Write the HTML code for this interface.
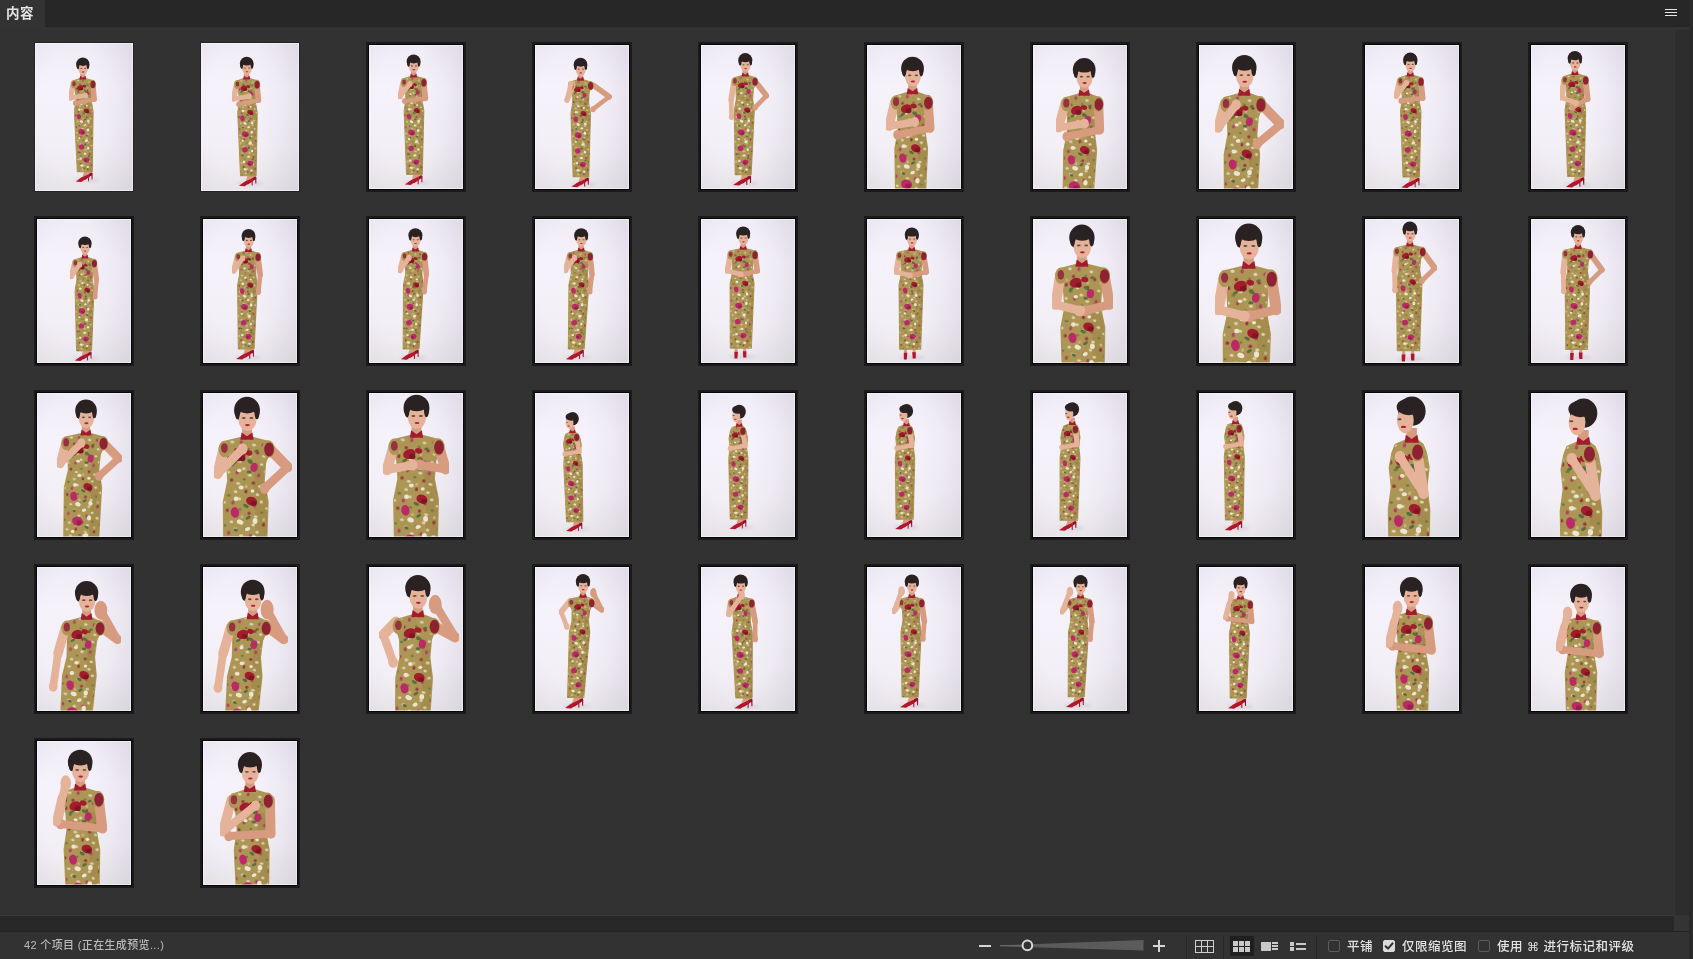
<!DOCTYPE html>
<html lang="zh-CN"><head><meta charset="utf-8"><title>内容</title>
<style>
html,body{margin:0;padding:0;}
body{width:1693px;height:959px;overflow:hidden;position:relative;background:#323232;
 font-family:"Liberation Sans","Noto Sans CJK SC",sans-serif;color:#dcdcdc;}
.abs{position:absolute;}
#hdr{left:0;top:0;width:1693px;height:26px;background:#272727;}
#hdrline{left:45px;top:26px;width:1644px;height:1px;background:#242424;}
#tab{left:0;top:0;width:45px;height:27px;background:#333333;}
#tabtxt{left:6px;top:5px;font-size:13.5px;line-height:18px;font-weight:700;color:#e4e4e4;white-space:nowrap;letter-spacing:0.4px;will-change:transform;}
.hb{left:1665px;width:12px;height:1px;background:#e6e6e6;}
#rstrip{left:1689px;top:0;width:4px;height:959px;background:#2a2a2a;}
#vtrack{left:1674px;top:30px;width:15px;height:885px;background:#2d2d2d;border-left:1px solid #373737;box-sizing:border-box;}
#hline{left:0;top:915px;width:1674px;height:1px;background:#3a3a3a;}
#htrack{left:0;top:916px;width:1674px;height:15px;background:#282828;}
#hline2{left:0;top:931px;width:1689px;height:1px;background:#232323;}
#corner{left:1674px;top:916px;width:15px;height:15px;background:#343434;}
#status{left:0;top:932px;width:1689px;height:27px;background:#323232;}
#count{left:24px;top:937px;font-size:11px;line-height:16px;font-weight:500;color:#bababa;white-space:nowrap;letter-spacing:0.35px;will-change:transform;}
.sep{top:936px;width:1px;height:23px;background:#262626;}
.lbl{top:937px;font-size:12.5px;line-height:20px;font-weight:500;color:#e2e2e2;white-space:nowrap;letter-spacing:0.5px;will-change:transform;}
.cb{top:940px;width:12px;height:12px;box-sizing:border-box;border:1px solid #5c5c5c;border-radius:2px;}
.cb.on{background:#dadada;border-color:#dadada;}
.t{position:absolute;width:100px;height:150px;}
.t svg{position:absolute;display:block;}
.t.b{background:#1a1a1a;}
.t.b svg{left:3px;top:3px;outline:1px solid #070507;}
.t.p{background:#242226;}
.t.p svg{left:1px;top:1px;}
</style></head>
<body>
<svg width="0" height="0" style="position:absolute"><defs><linearGradient id="bg" x1="0" y1="0" x2="0" y2="1"><stop offset="0" stop-color="#f0ecf7"/><stop offset="0.3" stop-color="#f6f2fb"/><stop offset="0.7" stop-color="#f3eff6"/><stop offset="1" stop-color="#ebe8ed"/></linearGradient><radialGradient id="vg" cx="0.42" cy="0.44" r="0.8"><stop offset="0.5" stop-color="#c4bdc8" stop-opacity="0"/><stop offset="1" stop-color="#b9b2be" stop-opacity="0.22"/></radialGradient><linearGradient id="hg" x1="0" y1="0" x2="1" y2="0"><stop offset="0.55" stop-color="#beb8c6" stop-opacity="0"/><stop offset="1" stop-color="#beb8c6" stop-opacity="0.2"/></linearGradient><pattern id="fl" patternUnits="userSpaceOnUse" width="9" height="12.5" patternTransform="rotate(8)"><ellipse cx="1.4" cy="1.6" rx="0.75" ry="0.55" fill="#e6dfc6"/><ellipse cx="5.6" cy="0.9" rx="0.6" ry="0.8" fill="#8d2436"/><ellipse cx="7.8" cy="3.4" rx="0.8" ry="0.5" fill="#5d7440"/><ellipse cx="3.4" cy="4.3" rx="0.7" ry="0.6" fill="#e6dfc6"/><ellipse cx="0.9" cy="6.2" rx="0.65" ry="0.85" fill="#b03468"/><ellipse cx="6.2" cy="6.6" rx="0.8" ry="0.6" fill="#e6dfc6"/><ellipse cx="4.2" cy="8.6" rx="0.6" ry="0.5" fill="#5d7440"/><ellipse cx="8.1" cy="9.6" rx="0.7" ry="0.7" fill="#93283a"/><ellipse cx="2.0" cy="10.6" rx="0.8" ry="0.55" fill="#e6dfc6"/><ellipse cx="5.4" cy="11.4" rx="0.55" ry="0.7" fill="#c9bd92"/></pattern><filter id="soft" x="-5%" y="-5%" width="110%" height="110%"><feGaussianBlur stdDeviation="0.45"/></filter><filter id="soft2" x="-20%" y="-50%" width="140%" height="200%"><feGaussianBlur stdDeviation="1.6"/></filter></defs></svg>
<div id="hdr" class="abs"></div>
<div id="hdrline" class="abs"></div>
<div id="tab" class="abs"></div>
<div id="tabtxt" class="abs">内容</div>
<div class="abs hb" style="top:9px"></div>
<div class="abs hb" style="top:12px"></div>
<div class="abs hb" style="top:15px"></div>
<div class="t p" style="left:34px;top:42px"><svg width="98" height="148" viewBox="0 0 98 148"><rect width="98" height="148" fill="url(#bg)"/><rect width="98" height="148" fill="url(#vg)"/><rect width="98" height="148" fill="url(#hg)"/><ellipse cx="52" cy="137.14" rx="12.55" ry="2.26" fill="#cbc6ce" opacity="0.5" filter="url(#soft2)"/><g filter="url(#soft)"><g transform="translate(50 14.4) scale(1.25)"><path d="M2.2,89.3 l3.2,0 l0.4,4.2 l-5.6,2.4z" fill="#d79c80"/><path d="M-4.6,97.7 l4.4,-3.1 l5.6,-2.5 l0.7,0.6 l-0.1,4.9 l-0.7,0 l-0.2,-3.1 l-5.2,3.6z" fill="#98102a"/><path d="M-0.6,90.8 l3.2,0 l0.4,4.2 l-5.6,2.4z" fill="#d79c80"/><path d="M-7.4,99.2 l4.4,-3.1 l5.6,-2.5 l0.7,0.6 l-0.1,4.9 l-0.7,0 l-0.2,-3.1 l-5.2,3.6z" fill="#b3142b"/><rect x="-3.75" y="12" width="4" height="7" fill="#d79c80"/><polygon points="-4.05,16.8 -8.63,18.4 -9.78,21.5 -7.78,27 -7.25,34.5 -8.5,43 -6.15,91.5 5.85,91.5 6.5,43 4.95,34.5 5.22,27 7.02,21.5 5.77,18.4 0.55,16.8" fill="#ad9654" stroke="#ad9654" stroke-width="0.8" stroke-linejoin="round"/><polygon points="1.65,27 1.6,34.5 2.38,43 2.55,91.5 5.85,91.5 6.5,43 4.95,34.5 5.22,27" fill="#927a3e" opacity="0.32"/><polygon points="-4.05,16.8 -8.63,18.4 -9.78,21.5 -7.78,27 -7.25,34.5 -8.5,43 -6.15,91.5 5.85,91.5 6.5,43 4.95,34.5 5.22,27 7.02,21.5 5.77,18.4 0.55,16.8" fill="url(#fl)" opacity="0.85"/><ellipse cx="-3.86" cy="24.3" rx="2.6" ry="2" fill="#a21a2e" transform="rotate(-20 -3.86 24.3)"/><ellipse cx="-2.77" cy="25.3" rx="1.3" ry="1.1" fill="#7e1424" transform="rotate(0 -2.77 25.3)"/><ellipse cx="-0.47" cy="23" rx="1.5" ry="1.1" fill="#a21a2e" transform="rotate(15 -0.47 23)"/><ellipse cx="0.17" cy="26.6" rx="1.3" ry="0.7" fill="#55703c" transform="rotate(30 0.17 26.6)"/><ellipse cx="-5.47" cy="26.9" rx="1.1" ry="0.6" fill="#55703c" transform="rotate(-30 -5.47 26.9)"/><ellipse cx="1.68" cy="28.9" rx="1.5" ry="1.9" fill="#bb2a66" transform="rotate(10 1.68 28.9)"/><ellipse cx="-0.04" cy="30.8" rx="1" ry="0.6" fill="#55703c" transform="rotate(0 -0.04 30.8)"/><ellipse cx="-3.76" cy="30.2" rx="0.9" ry="0.7" fill="#ebe4cf" transform="rotate(0 -3.76 30.2)"/><ellipse cx="2.34" cy="22.2" rx="0.9" ry="0.5" fill="#55703c" transform="rotate(-20 2.34 22.2)"/><ellipse cx="-2.85" cy="37.2" rx="1" ry="0.8" fill="#ebe4cf" transform="rotate(0 -2.85 37.2)"/><ellipse cx="1.36" cy="38.6" rx="0.8" ry="0.7" fill="#ebe4cf" transform="rotate(0 1.36 38.6)"/><ellipse cx="1.14" cy="42.8" rx="2.3" ry="1.8" fill="#a21a2e" transform="rotate(20 1.14 42.8)"/><ellipse cx="1.94" cy="43.7" rx="1.2" ry="1" fill="#7e1424" transform="rotate(0 1.94 43.7)"/><ellipse cx="-0.87" cy="44.7" rx="1.2" ry="0.7" fill="#55703c" transform="rotate(25 -0.87 44.7)"/><ellipse cx="-4.53" cy="41.8" rx="1" ry="0.9" fill="#ebe4cf" transform="rotate(0 -4.53 41.8)"/><ellipse cx="-4.82" cy="47.4" rx="1.7" ry="2.2" fill="#bb2a66" transform="rotate(-10 -4.82 47.4)"/><ellipse cx="-2.8" cy="51.3" rx="1.4" ry="1" fill="#ebe4cf" transform="rotate(20 -2.8 51.3)"/><ellipse cx="0.09" cy="49.6" rx="1.1" ry="0.6" fill="#55703c" transform="rotate(-30 0.09 49.6)"/><ellipse cx="2.65" cy="50.9" rx="1" ry="1.2" fill="#ebe4cf" transform="rotate(0 2.65 50.9)"/><ellipse cx="-0.02" cy="54.2" rx="1.1" ry="0.8" fill="#ebe4cf" transform="rotate(-15 -0.02 54.2)"/><ellipse cx="-4.3" cy="54.6" rx="0.9" ry="0.6" fill="#55703c" transform="rotate(20 -4.3 54.6)"/><ellipse cx="-2.66" cy="59.6" rx="2.6" ry="2.2" fill="#bb2a66" transform="rotate(15 -2.66 59.6)"/><ellipse cx="-1.86" cy="60.4" rx="1.3" ry="1.1" fill="#9a1f55" transform="rotate(0 -1.86 60.4)"/><ellipse cx="2.38" cy="58" rx="1" ry="1.3" fill="#ebe4cf" transform="rotate(0 2.38 58)"/><ellipse cx="1.49" cy="62.6" rx="1.1" ry="0.6" fill="#55703c" transform="rotate(30 1.49 62.6)"/><ellipse cx="-4.52" cy="64.6" rx="0.9" ry="0.8" fill="#ebe4cf" transform="rotate(0 -4.52 64.6)"/><ellipse cx="1.17" cy="66.6" rx="1.4" ry="1" fill="#ebe4cf" transform="rotate(-20 1.17 66.6)"/><ellipse cx="-2.84" cy="71.6" rx="2.2" ry="2" fill="#bb2a66" transform="rotate(-15 -2.84 71.6)"/><ellipse cx="0.25" cy="70" rx="1" ry="0.6" fill="#55703c" transform="rotate(-25 0.25 70)"/><ellipse cx="2.64" cy="72.6" rx="0.9" ry="1.1" fill="#ebe4cf" transform="rotate(0 2.64 72.6)"/><ellipse cx="-4.32" cy="76" rx="0.9" ry="0.5" fill="#55703c" transform="rotate(20 -4.32 76)"/><ellipse cx="0.18" cy="77" rx="1.1" ry="0.8" fill="#ebe4cf" transform="rotate(10 0.18 77)"/><ellipse cx="1.24" cy="82" rx="2.3" ry="2" fill="#bb2a66" transform="rotate(20 1.24 82)"/><ellipse cx="0.48" cy="82.7" rx="1.1" ry="1" fill="#9a1f55" transform="rotate(0 0.48 82.7)"/><ellipse cx="-3.45" cy="81" rx="1" ry="0.9" fill="#ebe4cf" transform="rotate(0 -3.45 81)"/><ellipse cx="3.14" cy="79" rx="0.9" ry="0.5" fill="#55703c" transform="rotate(-30 3.14 79)"/><ellipse cx="-2.57" cy="86.6" rx="1.2" ry="0.9" fill="#ebe4cf" transform="rotate(15 -2.57 86.6)"/><ellipse cx="2.32" cy="87.6" rx="1" ry="0.8" fill="#ebe4cf" transform="rotate(0 2.32 87.6)"/><ellipse cx="-0.59" cy="88.6" rx="0.9" ry="0.5" fill="#55703c" transform="rotate(0 -0.59 88.6)"/><path d="M-3.95,14.6 l2.2,1.6 l2.2,-1.6 l0.5,3 h-5.4z" fill="#a21a2e"/><path d="M6.22,21 L7.43,33.5" fill="none" stroke="#d79c80" stroke-linecap="round" stroke-width="4.3"/><path d="M-9.38,21 L-11.68,32.5" fill="none" stroke="#e5b29a" stroke-linecap="round" stroke-width="4.3"/><ellipse cx="6.02" cy="21.4" rx="2.6" ry="3.6" fill="#ad9654"/><ellipse cx="-8.78" cy="21.4" rx="2.4" ry="3.4" fill="#ad9654"/><ellipse cx="6.32" cy="21.6" rx="2.0" ry="2.9" fill="#8f2233"/><ellipse cx="-8.78" cy="21.0" rx="1.4" ry="2.0" fill="#963040"/><path d="M7.43,33.5 L-7.61,36.5" fill="none" stroke="#d79c80" stroke-linecap="round" stroke-width="3.5"/><ellipse cx="-7.61" cy="36.5" rx="2" ry="2.3" fill="#d79c80"/><path d="M-11.68,32.5 L0.28,30.5" fill="none" stroke="#e5b29a" stroke-linecap="round" stroke-width="3.5"/><ellipse cx="0.28" cy="30.5" rx="2" ry="2.3" fill="#e5b29a"/><ellipse cx="-1.75" cy="5.4" rx="5.3" ry="5.4" fill="#2b2224"/><ellipse cx="-1.55" cy="9.3" rx="3.7" ry="4.7" fill="#e5b29a"/><ellipse cx="-1.65" cy="3.8" rx="4.5" ry="3.0" fill="#2b2224"/><ellipse cx="-5.65" cy="6.6" rx="1.0" ry="2.6" fill="#2b2224"/><ellipse cx="2.35" cy="6.6" rx="1.0" ry="2.6" fill="#2b2224"/><ellipse cx="-1.55" cy="11.6" rx="1.0" ry="0.45" fill="#b3202e"/><ellipse cx="-3.05" cy="8.7" rx="0.8" ry="0.4" fill="#4a2e2a" opacity="0.8"/><ellipse cx="0.05" cy="8.7" rx="0.8" ry="0.4" fill="#4a2e2a" opacity="0.8"/></g></g><rect x="0.5" y="0.5" width="97" height="147" fill="none" stroke="#ffffff" stroke-opacity="0.45"/></svg></div>
<div class="t p" style="left:200px;top:42px"><svg width="98" height="148" viewBox="0 0 98 148"><rect width="98" height="148" fill="url(#bg)"/><rect width="98" height="148" fill="url(#vg)"/><rect width="98" height="148" fill="url(#hg)"/><ellipse cx="49.5" cy="140.64" rx="12.98" ry="2.34" fill="#cbc6ce" opacity="0.5" filter="url(#soft2)"/><g filter="url(#soft)"><g transform="translate(47.5 13.7) scale(1.3)"><path d="M2.2,89.3 l3.2,0 l0.4,4.2 l-5.6,2.4z" fill="#d79c80"/><path d="M-4.6,97.7 l4.4,-3.1 l5.6,-2.5 l0.7,0.6 l-0.1,4.9 l-0.7,0 l-0.2,-3.1 l-5.2,3.6z" fill="#98102a"/><path d="M-0.6,90.8 l3.2,0 l0.4,4.2 l-5.6,2.4z" fill="#d79c80"/><path d="M-7.4,99.2 l4.4,-3.1 l5.6,-2.5 l0.7,0.6 l-0.1,4.9 l-0.7,0 l-0.2,-3.1 l-5.2,3.6z" fill="#b3142b"/><rect x="-3.39" y="12" width="4" height="7" fill="#d79c80"/><polygon points="-3.69,16.8 -8.33,18.4 -9.49,21.5 -7.51,27 -7.01,34.5 -8.29,43 -6.12,91.5 5.88,91.5 6.71,43 5.19,34.5 5.49,27 7.31,21.5 6.07,18.4 0.91,16.8" fill="#ad9654" stroke="#ad9654" stroke-width="0.8" stroke-linejoin="round"/><polygon points="1.91,27 1.84,34.5 2.58,43 2.58,91.5 5.88,91.5 6.71,43 5.19,34.5 5.49,27" fill="#927a3e" opacity="0.32"/><polygon points="-3.69,16.8 -8.33,18.4 -9.49,21.5 -7.51,27 -7.01,34.5 -8.29,43 -6.12,91.5 5.88,91.5 6.71,43 5.19,34.5 5.49,27 7.31,21.5 6.07,18.4 0.91,16.8" fill="url(#fl)" opacity="0.85"/><ellipse cx="-3.58" cy="24.3" rx="2.6" ry="2" fill="#a21a2e" transform="rotate(-20 -3.58 24.3)"/><ellipse cx="-2.5" cy="25.3" rx="1.3" ry="1.1" fill="#7e1424" transform="rotate(0 -2.5 25.3)"/><ellipse cx="-0.19" cy="23" rx="1.5" ry="1.1" fill="#a21a2e" transform="rotate(15 -0.19 23)"/><ellipse cx="0.44" cy="26.6" rx="1.3" ry="0.7" fill="#55703c" transform="rotate(30 0.44 26.6)"/><ellipse cx="-5.2" cy="26.9" rx="1.1" ry="0.6" fill="#55703c" transform="rotate(-30 -5.2 26.9)"/><ellipse cx="1.94" cy="28.9" rx="1.5" ry="1.9" fill="#bb2a66" transform="rotate(10 1.94 28.9)"/><ellipse cx="0.21" cy="30.8" rx="1" ry="0.6" fill="#55703c" transform="rotate(0 0.21 30.8)"/><ellipse cx="-3.5" cy="30.2" rx="0.9" ry="0.7" fill="#ebe4cf" transform="rotate(0 -3.5 30.2)"/><ellipse cx="2.62" cy="22.2" rx="0.9" ry="0.5" fill="#55703c" transform="rotate(-20 2.62 22.2)"/><ellipse cx="-2.62" cy="37.2" rx="1" ry="0.8" fill="#ebe4cf" transform="rotate(0 -2.62 37.2)"/><ellipse cx="1.58" cy="38.6" rx="0.8" ry="0.7" fill="#ebe4cf" transform="rotate(0 1.58 38.6)"/><ellipse cx="1.35" cy="42.8" rx="2.3" ry="1.8" fill="#a21a2e" transform="rotate(20 1.35 42.8)"/><ellipse cx="2.14" cy="43.7" rx="1.2" ry="1" fill="#7e1424" transform="rotate(0 2.14 43.7)"/><ellipse cx="-0.67" cy="44.7" rx="1.2" ry="0.7" fill="#55703c" transform="rotate(25 -0.67 44.7)"/><ellipse cx="-4.31" cy="41.8" rx="1" ry="0.9" fill="#ebe4cf" transform="rotate(0 -4.31 41.8)"/><ellipse cx="-4.63" cy="47.4" rx="1.7" ry="2.2" fill="#bb2a66" transform="rotate(-10 -4.63 47.4)"/><ellipse cx="-2.62" cy="51.3" rx="1.4" ry="1" fill="#ebe4cf" transform="rotate(20 -2.62 51.3)"/><ellipse cx="0.28" cy="49.6" rx="1.1" ry="0.6" fill="#55703c" transform="rotate(-30 0.28 49.6)"/><ellipse cx="2.83" cy="50.9" rx="1" ry="1.2" fill="#ebe4cf" transform="rotate(0 2.83 50.9)"/><ellipse cx="0.14" cy="54.2" rx="1.1" ry="0.8" fill="#ebe4cf" transform="rotate(-15 0.14 54.2)"/><ellipse cx="-4.14" cy="54.6" rx="0.9" ry="0.6" fill="#55703c" transform="rotate(20 -4.14 54.6)"/><ellipse cx="-2.51" cy="59.6" rx="2.6" ry="2.2" fill="#bb2a66" transform="rotate(15 -2.51 59.6)"/><ellipse cx="-1.72" cy="60.4" rx="1.3" ry="1.1" fill="#9a1f55" transform="rotate(0 -1.72 60.4)"/><ellipse cx="2.53" cy="58" rx="1" ry="1.3" fill="#ebe4cf" transform="rotate(0 2.53 58)"/><ellipse cx="1.62" cy="62.6" rx="1.1" ry="0.6" fill="#55703c" transform="rotate(30 1.62 62.6)"/><ellipse cx="-4.39" cy="64.6" rx="0.9" ry="0.8" fill="#ebe4cf" transform="rotate(0 -4.39 64.6)"/><ellipse cx="1.29" cy="66.6" rx="1.4" ry="1" fill="#ebe4cf" transform="rotate(-20 1.29 66.6)"/><ellipse cx="-2.73" cy="71.6" rx="2.2" ry="2" fill="#bb2a66" transform="rotate(-15 -2.73 71.6)"/><ellipse cx="0.36" cy="70" rx="1" ry="0.6" fill="#55703c" transform="rotate(-25 0.36 70)"/><ellipse cx="2.74" cy="72.6" rx="0.9" ry="1.1" fill="#ebe4cf" transform="rotate(0 2.74 72.6)"/><ellipse cx="-4.23" cy="76" rx="0.9" ry="0.5" fill="#55703c" transform="rotate(20 -4.23 76)"/><ellipse cx="0.27" cy="77" rx="1.1" ry="0.8" fill="#ebe4cf" transform="rotate(10 0.27 77)"/><ellipse cx="1.31" cy="82" rx="2.3" ry="2" fill="#bb2a66" transform="rotate(20 1.31 82)"/><ellipse cx="0.54" cy="82.7" rx="1.1" ry="1" fill="#9a1f55" transform="rotate(0 0.54 82.7)"/><ellipse cx="-3.38" cy="81" rx="1" ry="0.9" fill="#ebe4cf" transform="rotate(0 -3.38 81)"/><ellipse cx="3.22" cy="79" rx="0.9" ry="0.5" fill="#55703c" transform="rotate(-30 3.22 79)"/><ellipse cx="-2.52" cy="86.6" rx="1.2" ry="0.9" fill="#ebe4cf" transform="rotate(15 -2.52 86.6)"/><ellipse cx="2.36" cy="87.6" rx="1" ry="0.8" fill="#ebe4cf" transform="rotate(0 2.36 87.6)"/><ellipse cx="-0.55" cy="88.6" rx="0.9" ry="0.5" fill="#55703c" transform="rotate(0 -0.55 88.6)"/><path d="M-3.59,14.6 l2.2,1.6 l2.2,-1.6 l0.5,3 h-5.4z" fill="#a21a2e"/><path d="M6.5,21 L7.68,33.5" fill="none" stroke="#d79c80" stroke-linecap="round" stroke-width="4.3"/><path d="M-9.1,21 L-11.44,32.5" fill="none" stroke="#e5b29a" stroke-linecap="round" stroke-width="4.3"/><ellipse cx="6.3" cy="21.4" rx="2.6" ry="3.6" fill="#ad9654"/><ellipse cx="-8.5" cy="21.4" rx="2.4" ry="3.4" fill="#ad9654"/><ellipse cx="6.6" cy="21.6" rx="2.0" ry="2.9" fill="#8f2233"/><ellipse cx="-8.5" cy="21.0" rx="1.4" ry="2.0" fill="#963040"/><path d="M7.68,33.5 L-7.38,36.5" fill="none" stroke="#d79c80" stroke-linecap="round" stroke-width="3.5"/><ellipse cx="-7.38" cy="36.5" rx="2" ry="2.3" fill="#d79c80"/><path d="M-11.44,32.5 L0.54,30.5" fill="none" stroke="#e5b29a" stroke-linecap="round" stroke-width="3.5"/><ellipse cx="0.54" cy="30.5" rx="2" ry="2.3" fill="#e5b29a"/><ellipse cx="-1.39" cy="5.4" rx="5.3" ry="5.4" fill="#2b2224"/><ellipse cx="-1.19" cy="9.3" rx="3.7" ry="4.7" fill="#e5b29a"/><ellipse cx="-1.29" cy="3.8" rx="4.5" ry="3.0" fill="#2b2224"/><ellipse cx="-5.29" cy="6.6" rx="1.0" ry="2.6" fill="#2b2224"/><ellipse cx="2.71" cy="6.6" rx="1.0" ry="2.6" fill="#2b2224"/><ellipse cx="-1.19" cy="11.6" rx="1.0" ry="0.45" fill="#b3202e"/><ellipse cx="-2.69" cy="8.7" rx="0.8" ry="0.4" fill="#4a2e2a" opacity="0.8"/><ellipse cx="0.41" cy="8.7" rx="0.8" ry="0.4" fill="#4a2e2a" opacity="0.8"/></g></g><rect x="0.5" y="0.5" width="97" height="147" fill="none" stroke="#ffffff" stroke-opacity="0.45"/></svg></div>
<div class="t b" style="left:366px;top:42px"><svg width="94" height="144" viewBox="0 0 94 144"><rect width="94" height="144" fill="url(#bg)"/><rect width="94" height="144" fill="url(#vg)"/><rect width="94" height="144" fill="url(#hg)"/><ellipse cx="47.5" cy="137.62" rx="13.1" ry="2.36" fill="#cbc6ce" opacity="0.5" filter="url(#soft2)"/><g filter="url(#soft)"><g transform="translate(45.5 9.5) scale(1.31)"><path d="M2.2,89.3 l3.2,0 l0.4,4.2 l-5.6,2.4z" fill="#d79c80"/><path d="M-4.6,97.7 l4.4,-3.1 l5.6,-2.5 l0.7,0.6 l-0.1,4.9 l-0.7,0 l-0.2,-3.1 l-5.2,3.6z" fill="#98102a"/><path d="M-0.6,90.8 l3.2,0 l0.4,4.2 l-5.6,2.4z" fill="#d79c80"/><path d="M-7.4,99.2 l4.4,-3.1 l5.6,-2.5 l0.7,0.6 l-0.1,4.9 l-0.7,0 l-0.2,-3.1 l-5.2,3.6z" fill="#b3142b"/><rect x="-2.69" y="12" width="4" height="7" fill="#d79c80"/><polygon points="-2.99,16.8 -7.76,18.4 -8.94,21.5 -7,27 -6.55,34.5 -7.89,43 -6.06,91.5 5.94,91.5 7.11,43 5.65,34.5 6,27 7.86,21.5 6.64,18.4 1.61,16.8" fill="#ad9654" stroke="#ad9654" stroke-width="0.8" stroke-linejoin="round"/><polygon points="2.42,27 2.3,34.5 2.98,43 2.64,91.5 5.94,91.5 7.11,43 5.65,34.5 6,27" fill="#927a3e" opacity="0.32"/><polygon points="-2.99,16.8 -7.76,18.4 -8.94,21.5 -7,27 -6.55,34.5 -7.89,43 -6.06,91.5 5.94,91.5 7.11,43 5.65,34.5 6,27 7.86,21.5 6.64,18.4 1.61,16.8" fill="url(#fl)" opacity="0.85"/><ellipse cx="-3.05" cy="24.3" rx="2.6" ry="2" fill="#a21a2e" transform="rotate(-20 -3.05 24.3)"/><ellipse cx="-1.97" cy="25.3" rx="1.3" ry="1.1" fill="#7e1424" transform="rotate(0 -1.97 25.3)"/><ellipse cx="0.35" cy="23" rx="1.5" ry="1.1" fill="#a21a2e" transform="rotate(15 0.35 23)"/><ellipse cx="0.96" cy="26.6" rx="1.3" ry="0.7" fill="#55703c" transform="rotate(30 0.96 26.6)"/><ellipse cx="-4.69" cy="26.9" rx="1.1" ry="0.6" fill="#55703c" transform="rotate(-30 -4.69 26.9)"/><ellipse cx="2.43" cy="28.9" rx="1.5" ry="1.9" fill="#bb2a66" transform="rotate(10 2.43 28.9)"/><ellipse cx="0.69" cy="30.8" rx="1" ry="0.6" fill="#55703c" transform="rotate(0 0.69 30.8)"/><ellipse cx="-3.01" cy="30.2" rx="0.9" ry="0.7" fill="#ebe4cf" transform="rotate(0 -3.01 30.2)"/><ellipse cx="3.17" cy="22.2" rx="0.9" ry="0.5" fill="#55703c" transform="rotate(-20 3.17 22.2)"/><ellipse cx="-2.18" cy="37.2" rx="1" ry="0.8" fill="#ebe4cf" transform="rotate(0 -2.18 37.2)"/><ellipse cx="2.01" cy="38.6" rx="0.8" ry="0.7" fill="#ebe4cf" transform="rotate(0 2.01 38.6)"/><ellipse cx="1.75" cy="42.8" rx="2.3" ry="1.8" fill="#a21a2e" transform="rotate(20 1.75 42.8)"/><ellipse cx="2.54" cy="43.7" rx="1.2" ry="1" fill="#7e1424" transform="rotate(0 2.54 43.7)"/><ellipse cx="-0.28" cy="44.7" rx="1.2" ry="0.7" fill="#55703c" transform="rotate(25 -0.28 44.7)"/><ellipse cx="-3.91" cy="41.8" rx="1" ry="0.9" fill="#ebe4cf" transform="rotate(0 -3.91 41.8)"/><ellipse cx="-4.26" cy="47.4" rx="1.7" ry="2.2" fill="#bb2a66" transform="rotate(-10 -4.26 47.4)"/><ellipse cx="-2.28" cy="51.3" rx="1.4" ry="1" fill="#ebe4cf" transform="rotate(20 -2.28 51.3)"/><ellipse cx="0.63" cy="49.6" rx="1.1" ry="0.6" fill="#55703c" transform="rotate(-30 0.63 49.6)"/><ellipse cx="3.17" cy="50.9" rx="1" ry="1.2" fill="#ebe4cf" transform="rotate(0 3.17 50.9)"/><ellipse cx="0.46" cy="54.2" rx="1.1" ry="0.8" fill="#ebe4cf" transform="rotate(-15 0.46 54.2)"/><ellipse cx="-3.82" cy="54.6" rx="0.9" ry="0.6" fill="#55703c" transform="rotate(20 -3.82 54.6)"/><ellipse cx="-2.23" cy="59.6" rx="2.6" ry="2.2" fill="#bb2a66" transform="rotate(15 -2.23 59.6)"/><ellipse cx="-1.44" cy="60.4" rx="1.3" ry="1.1" fill="#9a1f55" transform="rotate(0 -1.44 60.4)"/><ellipse cx="2.83" cy="58" rx="1" ry="1.3" fill="#ebe4cf" transform="rotate(0 2.83 58)"/><ellipse cx="1.89" cy="62.6" rx="1.1" ry="0.6" fill="#55703c" transform="rotate(30 1.89 62.6)"/><ellipse cx="-4.14" cy="64.6" rx="0.9" ry="0.8" fill="#ebe4cf" transform="rotate(0 -4.14 64.6)"/><ellipse cx="1.52" cy="66.6" rx="1.4" ry="1" fill="#ebe4cf" transform="rotate(-20 1.52 66.6)"/><ellipse cx="-2.53" cy="71.6" rx="2.2" ry="2" fill="#bb2a66" transform="rotate(-15 -2.53 71.6)"/><ellipse cx="0.57" cy="70" rx="1" ry="0.6" fill="#55703c" transform="rotate(-25 0.57 70)"/><ellipse cx="2.93" cy="72.6" rx="0.9" ry="1.1" fill="#ebe4cf" transform="rotate(0 2.93 72.6)"/><ellipse cx="-4.06" cy="76" rx="0.9" ry="0.5" fill="#55703c" transform="rotate(20 -4.06 76)"/><ellipse cx="0.43" cy="77" rx="1.1" ry="0.8" fill="#ebe4cf" transform="rotate(10 0.43 77)"/><ellipse cx="1.43" cy="82" rx="2.3" ry="2" fill="#bb2a66" transform="rotate(20 1.43 82)"/><ellipse cx="0.66" cy="82.7" rx="1.1" ry="1" fill="#9a1f55" transform="rotate(0 0.66 82.7)"/><ellipse cx="-3.25" cy="81" rx="1" ry="0.9" fill="#ebe4cf" transform="rotate(0 -3.25 81)"/><ellipse cx="3.36" cy="79" rx="0.9" ry="0.5" fill="#55703c" transform="rotate(-30 3.36 79)"/><ellipse cx="-2.43" cy="86.6" rx="1.2" ry="0.9" fill="#ebe4cf" transform="rotate(15 -2.43 86.6)"/><ellipse cx="2.45" cy="87.6" rx="1" ry="0.8" fill="#ebe4cf" transform="rotate(0 2.45 87.6)"/><ellipse cx="-0.47" cy="88.6" rx="0.9" ry="0.5" fill="#55703c" transform="rotate(0 -0.47 88.6)"/><path d="M-2.89,14.6 l2.2,1.6 l2.2,-1.6 l0.5,3 h-5.4z" fill="#a21a2e"/><path d="M7.06,21 L8.34,33.5" fill="none" stroke="#d79c80" stroke-linecap="round" stroke-width="4.3"/><path d="M-8.54,21 L-10.97,32" fill="none" stroke="#e5b29a" stroke-linecap="round" stroke-width="4.3"/><ellipse cx="6.86" cy="21.4" rx="2.6" ry="3.6" fill="#ad9654"/><ellipse cx="-7.94" cy="21.4" rx="2.4" ry="3.4" fill="#ad9654"/><ellipse cx="7.16" cy="21.6" rx="2.0" ry="2.9" fill="#8f2233"/><ellipse cx="-7.94" cy="21.0" rx="1.4" ry="2.0" fill="#963040"/><path d="M8.34,33.5 L-7.44,35.5" fill="none" stroke="#d79c80" stroke-linecap="round" stroke-width="3.5"/><ellipse cx="-7.44" cy="35.5" rx="2" ry="2.3" fill="#d79c80"/><path d="M-10.97,32 L-3.53,22.5" fill="none" stroke="#e5b29a" stroke-linecap="round" stroke-width="3.5"/><ellipse cx="-3.53" cy="22.5" rx="2" ry="2.3" fill="#e5b29a"/><ellipse cx="-0.69" cy="5.4" rx="5.3" ry="5.4" fill="#2b2224"/><ellipse cx="-0.49" cy="9.3" rx="3.7" ry="4.7" fill="#e5b29a"/><ellipse cx="-0.59" cy="3.8" rx="4.5" ry="3.0" fill="#2b2224"/><ellipse cx="-4.59" cy="6.6" rx="1.0" ry="2.6" fill="#2b2224"/><ellipse cx="3.41" cy="6.6" rx="1.0" ry="2.6" fill="#2b2224"/><ellipse cx="-0.49" cy="11.6" rx="1.0" ry="0.45" fill="#b3202e"/><ellipse cx="-1.99" cy="8.7" rx="0.8" ry="0.4" fill="#4a2e2a" opacity="0.8"/><ellipse cx="1.11" cy="8.7" rx="0.8" ry="0.4" fill="#4a2e2a" opacity="0.8"/></g></g><rect x="0.5" y="0.5" width="93" height="143" fill="none" stroke="#ffffff" stroke-opacity="0.45"/></svg></div>
<div class="t b" style="left:532px;top:42px"><svg width="94" height="144" viewBox="0 0 94 144"><rect width="94" height="144" fill="url(#bg)"/><rect width="94" height="144" fill="url(#vg)"/><rect width="94" height="144" fill="url(#hg)"/><ellipse cx="48" cy="139.65" rx="12.97" ry="2.33" fill="#cbc6ce" opacity="0.5" filter="url(#soft2)"/><g filter="url(#soft)"><g transform="translate(46 12.8) scale(1.3)"><path d="M2.2,89.3 l3.2,0 l0.4,4.2 l-5.6,2.4z" fill="#d79c80"/><path d="M-4.6,97.7 l4.4,-3.1 l5.6,-2.5 l0.7,0.6 l-0.1,4.9 l-0.7,0 l-0.2,-3.1 l-5.2,3.6z" fill="#98102a"/><path d="M-0.6,90.8 l3.2,0 l0.4,4.2 l-5.6,2.4z" fill="#d79c80"/><path d="M-7.4,99.2 l4.4,-3.1 l5.6,-2.5 l0.7,0.6 l-0.1,4.9 l-0.7,0 l-0.2,-3.1 l-5.2,3.6z" fill="#b3142b"/><rect x="-2.39" y="12" width="4" height="7" fill="#d79c80"/><polygon points="-2.69,16.8 -7.51,18.4 -8.7,21.5 -6.78,27 -6.35,34.5 -7.72,43 -6.03,91.5 5.97,91.5 7.28,43 5.85,34.5 6.22,27 8.1,21.5 6.89,18.4 1.91,16.8" fill="#ad9654" stroke="#ad9654" stroke-width="0.8" stroke-linejoin="round"/><polygon points="2.64,27 2.49,34.5 3.16,43 2.67,91.5 5.97,91.5 7.28,43 5.85,34.5 6.22,27" fill="#927a3e" opacity="0.32"/><polygon points="-2.69,16.8 -7.51,18.4 -8.7,21.5 -6.78,27 -6.35,34.5 -7.72,43 -6.03,91.5 5.97,91.5 7.28,43 5.85,34.5 6.22,27 8.1,21.5 6.89,18.4 1.91,16.8" fill="url(#fl)" opacity="0.85"/><ellipse cx="-2.82" cy="24.3" rx="2.6" ry="2" fill="#a21a2e" transform="rotate(-20 -2.82 24.3)"/><ellipse cx="-1.75" cy="25.3" rx="1.3" ry="1.1" fill="#7e1424" transform="rotate(0 -1.75 25.3)"/><ellipse cx="0.58" cy="23" rx="1.5" ry="1.1" fill="#a21a2e" transform="rotate(15 0.58 23)"/><ellipse cx="1.18" cy="26.6" rx="1.3" ry="0.7" fill="#55703c" transform="rotate(30 1.18 26.6)"/><ellipse cx="-4.47" cy="26.9" rx="1.1" ry="0.6" fill="#55703c" transform="rotate(-30 -4.47 26.9)"/><ellipse cx="2.65" cy="28.9" rx="1.5" ry="1.9" fill="#bb2a66" transform="rotate(10 2.65 28.9)"/><ellipse cx="0.9" cy="30.8" rx="1" ry="0.6" fill="#55703c" transform="rotate(0 0.9 30.8)"/><ellipse cx="-2.8" cy="30.2" rx="0.9" ry="0.7" fill="#ebe4cf" transform="rotate(0 -2.8 30.2)"/><ellipse cx="3.4" cy="22.2" rx="0.9" ry="0.5" fill="#55703c" transform="rotate(-20 3.4 22.2)"/><ellipse cx="-2" cy="37.2" rx="1" ry="0.8" fill="#ebe4cf" transform="rotate(0 -2 37.2)"/><ellipse cx="2.2" cy="38.6" rx="0.8" ry="0.7" fill="#ebe4cf" transform="rotate(0 2.2 38.6)"/><ellipse cx="1.92" cy="42.8" rx="2.3" ry="1.8" fill="#a21a2e" transform="rotate(20 1.92 42.8)"/><ellipse cx="2.71" cy="43.7" rx="1.2" ry="1" fill="#7e1424" transform="rotate(0 2.71 43.7)"/><ellipse cx="-0.12" cy="44.7" rx="1.2" ry="0.7" fill="#55703c" transform="rotate(25 -0.12 44.7)"/><ellipse cx="-3.73" cy="41.8" rx="1" ry="0.9" fill="#ebe4cf" transform="rotate(0 -3.73 41.8)"/><ellipse cx="-4.1" cy="47.4" rx="1.7" ry="2.2" fill="#bb2a66" transform="rotate(-10 -4.1 47.4)"/><ellipse cx="-2.14" cy="51.3" rx="1.4" ry="1" fill="#ebe4cf" transform="rotate(20 -2.14 51.3)"/><ellipse cx="0.78" cy="49.6" rx="1.1" ry="0.6" fill="#55703c" transform="rotate(-30 0.78 49.6)"/><ellipse cx="3.32" cy="50.9" rx="1" ry="1.2" fill="#ebe4cf" transform="rotate(0 3.32 50.9)"/><ellipse cx="0.6" cy="54.2" rx="1.1" ry="0.8" fill="#ebe4cf" transform="rotate(-15 0.6 54.2)"/><ellipse cx="-3.68" cy="54.6" rx="0.9" ry="0.6" fill="#55703c" transform="rotate(20 -3.68 54.6)"/><ellipse cx="-2.1" cy="59.6" rx="2.6" ry="2.2" fill="#bb2a66" transform="rotate(15 -2.1 59.6)"/><ellipse cx="-1.32" cy="60.4" rx="1.3" ry="1.1" fill="#9a1f55" transform="rotate(0 -1.32 60.4)"/><ellipse cx="2.95" cy="58" rx="1" ry="1.3" fill="#ebe4cf" transform="rotate(0 2.95 58)"/><ellipse cx="2" cy="62.6" rx="1.1" ry="0.6" fill="#55703c" transform="rotate(30 2 62.6)"/><ellipse cx="-4.03" cy="64.6" rx="0.9" ry="0.8" fill="#ebe4cf" transform="rotate(0 -4.03 64.6)"/><ellipse cx="1.62" cy="66.6" rx="1.4" ry="1" fill="#ebe4cf" transform="rotate(-20 1.62 66.6)"/><ellipse cx="-2.45" cy="71.6" rx="2.2" ry="2" fill="#bb2a66" transform="rotate(-15 -2.45 71.6)"/><ellipse cx="0.66" cy="70" rx="1" ry="0.6" fill="#55703c" transform="rotate(-25 0.66 70)"/><ellipse cx="3.01" cy="72.6" rx="0.9" ry="1.1" fill="#ebe4cf" transform="rotate(0 3.01 72.6)"/><ellipse cx="-3.99" cy="76" rx="0.9" ry="0.5" fill="#55703c" transform="rotate(20 -3.99 76)"/><ellipse cx="0.5" cy="77" rx="1.1" ry="0.8" fill="#ebe4cf" transform="rotate(10 0.5 77)"/><ellipse cx="1.49" cy="82" rx="2.3" ry="2" fill="#bb2a66" transform="rotate(20 1.49 82)"/><ellipse cx="0.71" cy="82.7" rx="1.1" ry="1" fill="#9a1f55" transform="rotate(0 0.71 82.7)"/><ellipse cx="-3.19" cy="81" rx="1" ry="0.9" fill="#ebe4cf" transform="rotate(0 -3.19 81)"/><ellipse cx="3.43" cy="79" rx="0.9" ry="0.5" fill="#55703c" transform="rotate(-30 3.43 79)"/><ellipse cx="-2.39" cy="86.6" rx="1.2" ry="0.9" fill="#ebe4cf" transform="rotate(15 -2.39 86.6)"/><ellipse cx="2.48" cy="87.6" rx="1" ry="0.8" fill="#ebe4cf" transform="rotate(0 2.48 87.6)"/><ellipse cx="-0.43" cy="88.6" rx="0.9" ry="0.5" fill="#55703c" transform="rotate(0 -0.43 88.6)"/><path d="M-2.59,14.6 l2.2,1.6 l2.2,-1.6 l0.5,3 h-5.4z" fill="#a21a2e"/><path d="M9.2,21 L21.73,30" fill="none" stroke="#d79c80" stroke-linecap="round" stroke-width="4.3"/><path d="M-6.3,21 L-10.76,32.5" fill="none" stroke="#e5b29a" stroke-linecap="round" stroke-width="4.3"/><ellipse cx="7.1" cy="21.4" rx="2.6" ry="3.6" fill="#ad9654"/><ellipse cx="-7.7" cy="21.4" rx="2.4" ry="3.4" fill="#ad9654"/><ellipse cx="7.4" cy="21.6" rx="2.0" ry="2.9" fill="#8f2233"/><ellipse cx="-7.7" cy="21.0" rx="1.4" ry="2.0" fill="#963040"/><path d="M21.73,30 L9.27,39.5" fill="none" stroke="#d79c80" stroke-linecap="round" stroke-width="3.5"/><ellipse cx="9.27" cy="39.5" rx="2" ry="2.3" fill="#d79c80"/><path d="M-10.76,32.5 L-7.81,20" fill="none" stroke="#e5b29a" stroke-linecap="round" stroke-width="3.5"/><ellipse cx="-7.81" cy="20" rx="2" ry="2.3" fill="#e5b29a"/><ellipse cx="-0.39" cy="5.4" rx="5.3" ry="5.4" fill="#2b2224"/><ellipse cx="-0.19" cy="9.3" rx="3.7" ry="4.7" fill="#e5b29a"/><ellipse cx="-0.29" cy="3.8" rx="4.5" ry="3.0" fill="#2b2224"/><ellipse cx="-4.29" cy="6.6" rx="1.0" ry="2.6" fill="#2b2224"/><ellipse cx="3.71" cy="6.6" rx="1.0" ry="2.6" fill="#2b2224"/><ellipse cx="-0.19" cy="11.6" rx="1.0" ry="0.45" fill="#b3202e"/><ellipse cx="-1.69" cy="8.7" rx="0.8" ry="0.4" fill="#4a2e2a" opacity="0.8"/><ellipse cx="1.41" cy="8.7" rx="0.8" ry="0.4" fill="#4a2e2a" opacity="0.8"/></g></g><rect x="0.5" y="0.5" width="93" height="143" fill="none" stroke="#ffffff" stroke-opacity="0.45"/></svg></div>
<div class="t b" style="left:698px;top:42px"><svg width="94" height="144" viewBox="0 0 94 144"><rect width="94" height="144" fill="url(#bg)"/><rect width="94" height="144" fill="url(#vg)"/><rect width="94" height="144" fill="url(#hg)"/><ellipse cx="44" cy="138.57" rx="13.34" ry="2.4" fill="#cbc6ce" opacity="0.5" filter="url(#soft2)"/><g filter="url(#soft)"><g transform="translate(42 8.1) scale(1.33)"><path d="M2.2,89.3 l3.2,0 l0.4,4.2 l-5.6,2.4z" fill="#d79c80"/><path d="M-4.6,97.7 l4.4,-3.1 l5.6,-2.5 l0.7,0.6 l-0.1,4.9 l-0.7,0 l-0.2,-3.1 l-5.2,3.6z" fill="#98102a"/><path d="M-0.6,90.8 l3.2,0 l0.4,4.2 l-5.6,2.4z" fill="#d79c80"/><path d="M-7.4,99.2 l4.4,-3.1 l5.6,-2.5 l0.7,0.6 l-0.1,4.9 l-0.7,0 l-0.2,-3.1 l-5.2,3.6z" fill="#b3142b"/><rect x="-0.28" y="12" width="4" height="7" fill="#d79c80"/><polygon points="-0.58,16.8 -5.79,18.4 -7.05,21.5 -5.24,27 -4.97,34.5 -6.52,43 -5.85,91.5 6.15,91.5 8.48,43 7.23,34.5 7.76,27 9.75,21.5 8.61,18.4 4.02,16.8" fill="#ad9654" stroke="#ad9654" stroke-width="0.8" stroke-linejoin="round"/><polygon points="4.18,27 3.87,34.5 4.36,43 2.85,91.5 6.15,91.5 8.48,43 7.23,34.5 7.76,27" fill="#927a3e" opacity="0.32"/><polygon points="-0.58,16.8 -5.79,18.4 -7.05,21.5 -5.24,27 -4.97,34.5 -6.52,43 -5.85,91.5 6.15,91.5 8.48,43 7.23,34.5 7.76,27 9.75,21.5 8.61,18.4 4.02,16.8" fill="url(#fl)" opacity="0.85"/><ellipse cx="-1.23" cy="24.3" rx="2.6" ry="2" fill="#a21a2e" transform="rotate(-20 -1.23 24.3)"/><ellipse cx="-0.17" cy="25.3" rx="1.3" ry="1.1" fill="#7e1424" transform="rotate(0 -0.17 25.3)"/><ellipse cx="2.2" cy="23" rx="1.5" ry="1.1" fill="#a21a2e" transform="rotate(15 2.2 23)"/><ellipse cx="2.73" cy="26.6" rx="1.3" ry="0.7" fill="#55703c" transform="rotate(30 2.73 26.6)"/><ellipse cx="-2.93" cy="26.9" rx="1.1" ry="0.6" fill="#55703c" transform="rotate(-30 -2.93 26.9)"/><ellipse cx="4.15" cy="28.9" rx="1.5" ry="1.9" fill="#bb2a66" transform="rotate(10 4.15 28.9)"/><ellipse cx="2.36" cy="30.8" rx="1" ry="0.6" fill="#55703c" transform="rotate(0 2.36 30.8)"/><ellipse cx="-1.33" cy="30.2" rx="0.9" ry="0.7" fill="#ebe4cf" transform="rotate(0 -1.33 30.2)"/><ellipse cx="5.04" cy="22.2" rx="0.9" ry="0.5" fill="#55703c" transform="rotate(-20 5.04 22.2)"/><ellipse cx="-0.67" cy="37.2" rx="1" ry="0.8" fill="#ebe4cf" transform="rotate(0 -0.67 37.2)"/><ellipse cx="3.49" cy="38.6" rx="0.8" ry="0.7" fill="#ebe4cf" transform="rotate(0 3.49 38.6)"/><ellipse cx="3.13" cy="42.8" rx="2.3" ry="1.8" fill="#a21a2e" transform="rotate(20 3.13 42.8)"/><ellipse cx="3.89" cy="43.7" rx="1.2" ry="1" fill="#7e1424" transform="rotate(0 3.89 43.7)"/><ellipse cx="1.05" cy="44.7" rx="1.2" ry="0.7" fill="#55703c" transform="rotate(25 1.05 44.7)"/><ellipse cx="-2.5" cy="41.8" rx="1" ry="0.9" fill="#ebe4cf" transform="rotate(0 -2.5 41.8)"/><ellipse cx="-2.99" cy="47.4" rx="1.7" ry="2.2" fill="#bb2a66" transform="rotate(-10 -2.99 47.4)"/><ellipse cx="-1.11" cy="51.3" rx="1.4" ry="1" fill="#ebe4cf" transform="rotate(20 -1.11 51.3)"/><ellipse cx="1.84" cy="49.6" rx="1.1" ry="0.6" fill="#55703c" transform="rotate(-30 1.84 49.6)"/><ellipse cx="4.35" cy="50.9" rx="1" ry="1.2" fill="#ebe4cf" transform="rotate(0 4.35 50.9)"/><ellipse cx="1.57" cy="54.2" rx="1.1" ry="0.8" fill="#ebe4cf" transform="rotate(-15 1.57 54.2)"/><ellipse cx="-2.72" cy="54.6" rx="0.9" ry="0.6" fill="#55703c" transform="rotate(20 -2.72 54.6)"/><ellipse cx="-1.25" cy="59.6" rx="2.6" ry="2.2" fill="#bb2a66" transform="rotate(15 -1.25 59.6)"/><ellipse cx="-0.49" cy="60.4" rx="1.3" ry="1.1" fill="#9a1f55" transform="rotate(0 -0.49 60.4)"/><ellipse cx="3.84" cy="58" rx="1" ry="1.3" fill="#ebe4cf" transform="rotate(0 3.84 58)"/><ellipse cx="2.79" cy="62.6" rx="1.1" ry="0.6" fill="#55703c" transform="rotate(30 2.79 62.6)"/><ellipse cx="-3.29" cy="64.6" rx="0.9" ry="0.8" fill="#ebe4cf" transform="rotate(0 -3.29 64.6)"/><ellipse cx="2.33" cy="66.6" rx="1.4" ry="1" fill="#ebe4cf" transform="rotate(-20 2.33 66.6)"/><ellipse cx="-1.85" cy="71.6" rx="2.2" ry="2" fill="#bb2a66" transform="rotate(-15 -1.85 71.6)"/><ellipse cx="1.3" cy="70" rx="1" ry="0.6" fill="#55703c" transform="rotate(-25 1.3 70)"/><ellipse cx="3.59" cy="72.6" rx="0.9" ry="1.1" fill="#ebe4cf" transform="rotate(0 3.59 72.6)"/><ellipse cx="-3.48" cy="76" rx="0.9" ry="0.5" fill="#55703c" transform="rotate(20 -3.48 76)"/><ellipse cx="0.98" cy="77" rx="1.1" ry="0.8" fill="#ebe4cf" transform="rotate(10 0.98 77)"/><ellipse cx="1.87" cy="82" rx="2.3" ry="2" fill="#bb2a66" transform="rotate(20 1.87 82)"/><ellipse cx="1.08" cy="82.7" rx="1.1" ry="1" fill="#9a1f55" transform="rotate(0 1.08 82.7)"/><ellipse cx="-2.79" cy="81" rx="1" ry="0.9" fill="#ebe4cf" transform="rotate(0 -2.79 81)"/><ellipse cx="3.87" cy="79" rx="0.9" ry="0.5" fill="#55703c" transform="rotate(-30 3.87 79)"/><ellipse cx="-2.11" cy="86.6" rx="1.2" ry="0.9" fill="#ebe4cf" transform="rotate(15 -2.11 86.6)"/><ellipse cx="2.75" cy="87.6" rx="1" ry="0.8" fill="#ebe4cf" transform="rotate(0 2.75 87.6)"/><ellipse cx="-0.19" cy="88.6" rx="0.9" ry="0.5" fill="#55703c" transform="rotate(0 -0.19 88.6)"/><path d="M-0.48,14.6 l2.2,1.6 l2.2,-1.6 l0.5,3 h-5.4z" fill="#a21a2e"/><path d="M8.96,21 L17.67,32" fill="none" stroke="#d79c80" stroke-linecap="round" stroke-width="4.3"/><path d="M-6.64,21 L-8.88,35" fill="none" stroke="#e5b29a" stroke-linecap="round" stroke-width="4.3"/><ellipse cx="8.76" cy="21.4" rx="2.6" ry="3.6" fill="#ad9654"/><ellipse cx="-6.04" cy="21.4" rx="2.4" ry="3.4" fill="#ad9654"/><ellipse cx="9.06" cy="21.6" rx="2.0" ry="2.9" fill="#8f2233"/><ellipse cx="-6.04" cy="21.0" rx="1.4" ry="2.0" fill="#963040"/><path d="M17.67,32 L9.02,41" fill="none" stroke="#d79c80" stroke-linecap="round" stroke-width="3.5"/><ellipse cx="9.02" cy="41" rx="2" ry="2.3" fill="#d79c80"/><path d="M-8.88,35 L-8.6,48" fill="none" stroke="#e5b29a" stroke-linecap="round" stroke-width="3.5"/><ellipse cx="-8.6" cy="48" rx="2" ry="2.3" fill="#e5b29a"/><ellipse cx="1.72" cy="5.4" rx="5.3" ry="5.4" fill="#2b2224"/><ellipse cx="1.92" cy="9.3" rx="3.7" ry="4.7" fill="#e5b29a"/><ellipse cx="1.82" cy="3.8" rx="4.5" ry="3.0" fill="#2b2224"/><ellipse cx="-2.18" cy="6.6" rx="1.0" ry="2.6" fill="#2b2224"/><ellipse cx="5.82" cy="6.6" rx="1.0" ry="2.6" fill="#2b2224"/><ellipse cx="1.92" cy="11.6" rx="1.0" ry="0.45" fill="#b3202e"/><ellipse cx="0.42" cy="8.7" rx="0.8" ry="0.4" fill="#4a2e2a" opacity="0.8"/><ellipse cx="3.52" cy="8.7" rx="0.8" ry="0.4" fill="#4a2e2a" opacity="0.8"/></g></g><rect x="0.5" y="0.5" width="93" height="143" fill="none" stroke="#ffffff" stroke-opacity="0.45"/></svg></div>
<div class="t b" style="left:864px;top:42px"><svg width="94" height="144" viewBox="0 0 94 144"><rect width="94" height="144" fill="url(#bg)"/><rect width="94" height="144" fill="url(#vg)"/><rect width="94" height="144" fill="url(#hg)"/><g filter="url(#soft)"><g transform="translate(44 11.7) scale(2.14)"><rect x="-1.3" y="12" width="4" height="7" fill="#d79c80"/><polygon points="-1.6,16.8 -6.76,18.4 -8,21.5 -6.18,27 -5.88,34.5 -7.4,43 -6.58,91.5 5.42,91.5 7.6,43 6.32,34.5 6.82,27 8.8,21.5 7.64,18.4 3,16.8" fill="#ad9654" stroke="#ad9654" stroke-width="0.8" stroke-linejoin="round"/><polygon points="3.25,27 2.96,34.5 3.47,43 2.12,91.5 5.42,91.5 7.6,43 6.32,34.5 6.82,27" fill="#927a3e" opacity="0.32"/><polygon points="-1.6,16.8 -6.76,18.4 -8,21.5 -6.18,27 -5.88,34.5 -7.4,43 -6.58,91.5 5.42,91.5 7.6,43 6.32,34.5 6.82,27 8.8,21.5 7.64,18.4 3,16.8" fill="url(#fl)" opacity="0.85"/><ellipse cx="-2.17" cy="24.3" rx="2.6" ry="2" fill="#a21a2e" transform="rotate(-20 -2.17 24.3)"/><ellipse cx="-1.11" cy="25.3" rx="1.3" ry="1.1" fill="#7e1424" transform="rotate(0 -1.11 25.3)"/><ellipse cx="1.26" cy="23" rx="1.5" ry="1.1" fill="#a21a2e" transform="rotate(15 1.26 23)"/><ellipse cx="1.79" cy="26.6" rx="1.3" ry="0.7" fill="#55703c" transform="rotate(30 1.79 26.6)"/><ellipse cx="-3.86" cy="26.9" rx="1.1" ry="0.6" fill="#55703c" transform="rotate(-30 -3.86 26.9)"/><ellipse cx="3.22" cy="28.9" rx="1.5" ry="1.9" fill="#bb2a66" transform="rotate(10 3.22 28.9)"/><ellipse cx="1.44" cy="30.8" rx="1" ry="0.6" fill="#55703c" transform="rotate(0 1.44 30.8)"/><ellipse cx="-2.25" cy="30.2" rx="0.9" ry="0.7" fill="#ebe4cf" transform="rotate(0 -2.25 30.2)"/><ellipse cx="4.09" cy="22.2" rx="0.9" ry="0.5" fill="#55703c" transform="rotate(-20 4.09 22.2)"/><ellipse cx="-1.57" cy="37.2" rx="1" ry="0.8" fill="#ebe4cf" transform="rotate(0 -1.57 37.2)"/><ellipse cx="2.59" cy="38.6" rx="0.8" ry="0.7" fill="#ebe4cf" transform="rotate(0 2.59 38.6)"/><ellipse cx="2.24" cy="42.8" rx="2.3" ry="1.8" fill="#a21a2e" transform="rotate(20 2.24 42.8)"/><ellipse cx="3.01" cy="43.7" rx="1.2" ry="1" fill="#7e1424" transform="rotate(0 3.01 43.7)"/><ellipse cx="0.17" cy="44.7" rx="1.2" ry="0.7" fill="#55703c" transform="rotate(25 0.17 44.7)"/><ellipse cx="-3.39" cy="41.8" rx="1" ry="0.9" fill="#ebe4cf" transform="rotate(0 -3.39 41.8)"/><ellipse cx="-3.86" cy="47.4" rx="1.7" ry="2.2" fill="#bb2a66" transform="rotate(-10 -3.86 47.4)"/><ellipse cx="-1.97" cy="51.3" rx="1.4" ry="1" fill="#ebe4cf" transform="rotate(20 -1.97 51.3)"/><ellipse cx="0.98" cy="49.6" rx="1.1" ry="0.6" fill="#55703c" transform="rotate(-30 0.98 49.6)"/><ellipse cx="3.49" cy="50.9" rx="1" ry="1.2" fill="#ebe4cf" transform="rotate(0 3.49 50.9)"/><ellipse cx="0.72" cy="54.2" rx="1.1" ry="0.8" fill="#ebe4cf" transform="rotate(-15 0.72 54.2)"/><ellipse cx="-3.57" cy="54.6" rx="0.9" ry="0.6" fill="#55703c" transform="rotate(20 -3.57 54.6)"/><ellipse cx="-2.08" cy="59.6" rx="2.6" ry="2.2" fill="#bb2a66" transform="rotate(15 -2.08 59.6)"/><ellipse cx="-1.31" cy="60.4" rx="1.3" ry="1.1" fill="#9a1f55" transform="rotate(0 -1.31 60.4)"/><ellipse cx="3" cy="58" rx="1" ry="1.3" fill="#ebe4cf" transform="rotate(0 3 58)"/><ellipse cx="1.97" cy="62.6" rx="1.1" ry="0.6" fill="#55703c" transform="rotate(30 1.97 62.6)"/><ellipse cx="-4.1" cy="64.6" rx="0.9" ry="0.8" fill="#ebe4cf" transform="rotate(0 -4.1 64.6)"/><ellipse cx="1.52" cy="66.6" rx="1.4" ry="1" fill="#ebe4cf" transform="rotate(-20 1.52 66.6)"/><path d="M-1.5,14.6 l2.2,1.6 l2.2,-1.6 l0.5,3 h-5.4z" fill="#a21a2e"/><path d="M8.01,21 L8.83,33.5" fill="none" stroke="#d79c80" stroke-linecap="round" stroke-width="4.3"/><path d="M-7.59,21 L-10.25,32.5" fill="none" stroke="#e5b29a" stroke-linecap="round" stroke-width="4.3"/><ellipse cx="7.81" cy="21.4" rx="2.6" ry="3.6" fill="#ad9654"/><ellipse cx="-6.99" cy="21.4" rx="2.4" ry="3.4" fill="#ad9654"/><ellipse cx="8.11" cy="21.6" rx="2.0" ry="2.9" fill="#8f2233"/><ellipse cx="-6.99" cy="21.0" rx="1.4" ry="2.0" fill="#963040"/><path d="M8.83,33.5 L-6.31,36.5" fill="none" stroke="#d79c80" stroke-linecap="round" stroke-width="3.5"/><ellipse cx="-6.31" cy="36.5" rx="2" ry="2.3" fill="#d79c80"/><path d="M-10.25,32.5 L1.77,30.5" fill="none" stroke="#e5b29a" stroke-linecap="round" stroke-width="3.5"/><ellipse cx="1.77" cy="30.5" rx="2" ry="2.3" fill="#e5b29a"/><ellipse cx="0.7" cy="5.4" rx="5.3" ry="5.4" fill="#2b2224"/><ellipse cx="0.9" cy="9.3" rx="3.7" ry="4.7" fill="#e5b29a"/><ellipse cx="0.8" cy="3.8" rx="4.5" ry="3.0" fill="#2b2224"/><ellipse cx="-3.2" cy="6.6" rx="1.0" ry="2.6" fill="#2b2224"/><ellipse cx="4.8" cy="6.6" rx="1.0" ry="2.6" fill="#2b2224"/><ellipse cx="0.9" cy="11.6" rx="1.0" ry="0.45" fill="#b3202e"/><ellipse cx="-0.6" cy="8.7" rx="0.8" ry="0.4" fill="#4a2e2a" opacity="0.8"/><ellipse cx="2.5" cy="8.7" rx="0.8" ry="0.4" fill="#4a2e2a" opacity="0.8"/></g></g><rect x="0.5" y="0.5" width="93" height="143" fill="none" stroke="#ffffff" stroke-opacity="0.45"/></svg></div>
<div class="t b" style="left:1030px;top:42px"><svg width="94" height="144" viewBox="0 0 94 144"><rect width="94" height="144" fill="url(#bg)"/><rect width="94" height="144" fill="url(#vg)"/><rect width="94" height="144" fill="url(#hg)"/><g filter="url(#soft)"><g transform="translate(46.5 13) scale(2.15)"><rect x="0.19" y="12" width="4" height="7" fill="#d79c80"/><polygon points="-0.11,16.8 -5.82,18.4 -7.15,21.5 -5.49,27 -5.42,34.5 -7.19,43 -7.81,91.5 4.19,91.5 7.81,43 6.78,34.5 7.51,27 9.65,21.5 8.58,18.4 4.49,16.8" fill="#ad9654" stroke="#ad9654" stroke-width="0.8" stroke-linejoin="round"/><polygon points="3.93,27 3.42,34.5 3.68,43 0.89,91.5 4.19,91.5 7.81,43 6.78,34.5 7.51,27" fill="#927a3e" opacity="0.32"/><polygon points="-0.11,16.8 -5.82,18.4 -7.15,21.5 -5.49,27 -5.42,34.5 -7.19,43 -7.81,91.5 4.19,91.5 7.81,43 6.78,34.5 7.51,27 9.65,21.5 8.58,18.4 4.49,16.8" fill="url(#fl)" opacity="0.85"/><ellipse cx="-1.41" cy="24.3" rx="2.6" ry="2" fill="#a21a2e" transform="rotate(-20 -1.41 24.3)"/><ellipse cx="-0.38" cy="25.3" rx="1.3" ry="1.1" fill="#7e1424" transform="rotate(0 -0.38 25.3)"/><ellipse cx="2.06" cy="23" rx="1.5" ry="1.1" fill="#a21a2e" transform="rotate(15 2.06 23)"/><ellipse cx="2.48" cy="26.6" rx="1.3" ry="0.7" fill="#55703c" transform="rotate(30 2.48 26.6)"/><ellipse cx="-3.18" cy="26.9" rx="1.1" ry="0.6" fill="#55703c" transform="rotate(-30 -3.18 26.9)"/><ellipse cx="3.84" cy="28.9" rx="1.5" ry="1.9" fill="#bb2a66" transform="rotate(10 3.84 28.9)"/><ellipse cx="2.01" cy="30.8" rx="1" ry="0.6" fill="#55703c" transform="rotate(0 2.01 30.8)"/><ellipse cx="-1.67" cy="30.2" rx="0.9" ry="0.7" fill="#ebe4cf" transform="rotate(0 -1.67 30.2)"/><ellipse cx="4.92" cy="22.2" rx="0.9" ry="0.5" fill="#55703c" transform="rotate(-20 4.92 22.2)"/><ellipse cx="-1.19" cy="37.2" rx="1" ry="0.8" fill="#ebe4cf" transform="rotate(0 -1.19 37.2)"/><ellipse cx="2.93" cy="38.6" rx="0.8" ry="0.7" fill="#ebe4cf" transform="rotate(0 2.93 38.6)"/><ellipse cx="2.46" cy="42.8" rx="2.3" ry="1.8" fill="#a21a2e" transform="rotate(20 2.46 42.8)"/><ellipse cx="3.2" cy="43.7" rx="1.2" ry="1" fill="#7e1424" transform="rotate(0 3.2 43.7)"/><ellipse cx="0.33" cy="44.7" rx="1.2" ry="0.7" fill="#55703c" transform="rotate(25 0.33 44.7)"/><ellipse cx="-3.15" cy="41.8" rx="1" ry="0.9" fill="#ebe4cf" transform="rotate(0 -3.15 41.8)"/><ellipse cx="-3.78" cy="47.4" rx="1.7" ry="2.2" fill="#bb2a66" transform="rotate(-10 -3.78 47.4)"/><ellipse cx="-2" cy="51.3" rx="1.4" ry="1" fill="#ebe4cf" transform="rotate(20 -2 51.3)"/><ellipse cx="0.99" cy="49.6" rx="1.1" ry="0.6" fill="#55703c" transform="rotate(-30 0.99 49.6)"/><ellipse cx="3.47" cy="50.9" rx="1" ry="1.2" fill="#ebe4cf" transform="rotate(0 3.47 50.9)"/><ellipse cx="0.6" cy="54.2" rx="1.1" ry="0.8" fill="#ebe4cf" transform="rotate(-15 0.6 54.2)"/><ellipse cx="-3.71" cy="54.6" rx="0.9" ry="0.6" fill="#55703c" transform="rotate(20 -3.71 54.6)"/><ellipse cx="-2.37" cy="59.6" rx="2.6" ry="2.2" fill="#bb2a66" transform="rotate(15 -2.37 59.6)"/><ellipse cx="-1.62" cy="60.4" rx="1.3" ry="1.1" fill="#9a1f55" transform="rotate(0 -1.62 60.4)"/><ellipse cx="2.77" cy="58" rx="1" ry="1.3" fill="#ebe4cf" transform="rotate(0 2.77 58)"/><ellipse cx="1.59" cy="62.6" rx="1.1" ry="0.6" fill="#55703c" transform="rotate(30 1.59 62.6)"/><ellipse cx="-4.53" cy="64.6" rx="0.9" ry="0.8" fill="#ebe4cf" transform="rotate(0 -4.53 64.6)"/><path d="M-0.01,14.6 l2.2,1.6 l2.2,-1.6 l0.5,3 h-5.4z" fill="#a21a2e"/><path d="M8.87,21 L9.32,33.5" fill="none" stroke="#d79c80" stroke-linecap="round" stroke-width="4.3"/><path d="M-6.73,21 L-9.73,32.5" fill="none" stroke="#e5b29a" stroke-linecap="round" stroke-width="4.3"/><ellipse cx="8.67" cy="21.4" rx="2.6" ry="3.6" fill="#ad9654"/><ellipse cx="-6.13" cy="21.4" rx="2.4" ry="3.4" fill="#ad9654"/><ellipse cx="8.97" cy="21.6" rx="2.0" ry="2.9" fill="#8f2233"/><ellipse cx="-6.13" cy="21.0" rx="1.4" ry="2.0" fill="#963040"/><path d="M9.32,33.5 L-5.91,36.5" fill="none" stroke="#d79c80" stroke-linecap="round" stroke-width="3.5"/><ellipse cx="-5.91" cy="36.5" rx="2" ry="2.3" fill="#d79c80"/><path d="M-9.73,32.5 L2.35,30.5" fill="none" stroke="#e5b29a" stroke-linecap="round" stroke-width="3.5"/><ellipse cx="2.35" cy="30.5" rx="2" ry="2.3" fill="#e5b29a"/><ellipse cx="2.19" cy="5.4" rx="5.3" ry="5.4" fill="#2b2224"/><ellipse cx="2.39" cy="9.3" rx="3.7" ry="4.7" fill="#e5b29a"/><ellipse cx="2.29" cy="3.8" rx="4.5" ry="3.0" fill="#2b2224"/><ellipse cx="-1.71" cy="6.6" rx="1.0" ry="2.6" fill="#2b2224"/><ellipse cx="6.29" cy="6.6" rx="1.0" ry="2.6" fill="#2b2224"/><ellipse cx="2.39" cy="11.6" rx="1.0" ry="0.45" fill="#b3202e"/><ellipse cx="0.89" cy="8.7" rx="0.8" ry="0.4" fill="#4a2e2a" opacity="0.8"/><ellipse cx="3.99" cy="8.7" rx="0.8" ry="0.4" fill="#4a2e2a" opacity="0.8"/></g></g><rect x="0.5" y="0.5" width="93" height="143" fill="none" stroke="#ffffff" stroke-opacity="0.45"/></svg></div>
<div class="t b" style="left:1196px;top:42px"><svg width="94" height="144" viewBox="0 0 94 144"><rect width="94" height="144" fill="url(#bg)"/><rect width="94" height="144" fill="url(#vg)"/><rect width="94" height="144" fill="url(#hg)"/><g filter="url(#soft)"><g transform="translate(42.5 10) scale(2.31)"><rect x="-0.79" y="12" width="4" height="7" fill="#d79c80"/><polygon points="-1.09,16.8 -6.43,18.4 -7.71,21.5 -5.94,27 -5.72,34.5 -7.33,43 -7.01,91.5 4.99,91.5 7.67,43 6.48,34.5 7.06,27 9.09,21.5 7.97,18.4 3.51,16.8" fill="#ad9654" stroke="#ad9654" stroke-width="0.8" stroke-linejoin="round"/><polygon points="3.48,27 3.12,34.5 3.54,43 1.69,91.5 4.99,91.5 7.67,43 6.48,34.5 7.06,27" fill="#927a3e" opacity="0.32"/><polygon points="-1.09,16.8 -6.43,18.4 -7.71,21.5 -5.94,27 -5.72,34.5 -7.33,43 -7.01,91.5 4.99,91.5 7.67,43 6.48,34.5 7.06,27 9.09,21.5 7.97,18.4 3.51,16.8" fill="url(#fl)" opacity="0.85"/><ellipse cx="-1.91" cy="24.3" rx="2.6" ry="2" fill="#a21a2e" transform="rotate(-20 -1.91 24.3)"/><ellipse cx="-0.86" cy="25.3" rx="1.3" ry="1.1" fill="#7e1424" transform="rotate(0 -0.86 25.3)"/><ellipse cx="1.53" cy="23" rx="1.5" ry="1.1" fill="#a21a2e" transform="rotate(15 1.53 23)"/><ellipse cx="2.03" cy="26.6" rx="1.3" ry="0.7" fill="#55703c" transform="rotate(30 2.03 26.6)"/><ellipse cx="-3.63" cy="26.9" rx="1.1" ry="0.6" fill="#55703c" transform="rotate(-30 -3.63 26.9)"/><ellipse cx="3.43" cy="28.9" rx="1.5" ry="1.9" fill="#bb2a66" transform="rotate(10 3.43 28.9)"/><ellipse cx="1.63" cy="30.8" rx="1" ry="0.6" fill="#55703c" transform="rotate(0 1.63 30.8)"/><ellipse cx="-2.05" cy="30.2" rx="0.9" ry="0.7" fill="#ebe4cf" transform="rotate(0 -2.05 30.2)"/><ellipse cx="4.38" cy="22.2" rx="0.9" ry="0.5" fill="#55703c" transform="rotate(-20 4.38 22.2)"/><ellipse cx="-1.44" cy="37.2" rx="1" ry="0.8" fill="#ebe4cf" transform="rotate(0 -1.44 37.2)"/><ellipse cx="2.71" cy="38.6" rx="0.8" ry="0.7" fill="#ebe4cf" transform="rotate(0 2.71 38.6)"/><ellipse cx="2.32" cy="42.8" rx="2.3" ry="1.8" fill="#a21a2e" transform="rotate(20 2.32 42.8)"/><ellipse cx="3.07" cy="43.7" rx="1.2" ry="1" fill="#7e1424" transform="rotate(0 3.07 43.7)"/><ellipse cx="0.23" cy="44.7" rx="1.2" ry="0.7" fill="#55703c" transform="rotate(25 0.23 44.7)"/><ellipse cx="-3.31" cy="41.8" rx="1" ry="0.9" fill="#ebe4cf" transform="rotate(0 -3.31 41.8)"/><ellipse cx="-3.83" cy="47.4" rx="1.7" ry="2.2" fill="#bb2a66" transform="rotate(-10 -3.83 47.4)"/><ellipse cx="-1.98" cy="51.3" rx="1.4" ry="1" fill="#ebe4cf" transform="rotate(20 -1.98 51.3)"/><ellipse cx="0.98" cy="49.6" rx="1.1" ry="0.6" fill="#55703c" transform="rotate(-30 0.98 49.6)"/><ellipse cx="3.48" cy="50.9" rx="1" ry="1.2" fill="#ebe4cf" transform="rotate(0 3.48 50.9)"/><ellipse cx="0.68" cy="54.2" rx="1.1" ry="0.8" fill="#ebe4cf" transform="rotate(-15 0.68 54.2)"/><ellipse cx="-3.62" cy="54.6" rx="0.9" ry="0.6" fill="#55703c" transform="rotate(20 -3.62 54.6)"/><ellipse cx="-2.18" cy="59.6" rx="2.6" ry="2.2" fill="#bb2a66" transform="rotate(15 -2.18 59.6)"/><ellipse cx="-1.42" cy="60.4" rx="1.3" ry="1.1" fill="#9a1f55" transform="rotate(0 -1.42 60.4)"/><ellipse cx="2.92" cy="58" rx="1" ry="1.3" fill="#ebe4cf" transform="rotate(0 2.92 58)"/><ellipse cx="1.84" cy="62.6" rx="1.1" ry="0.6" fill="#55703c" transform="rotate(30 1.84 62.6)"/><path d="M-0.99,14.6 l2.2,1.6 l2.2,-1.6 l0.5,3 h-5.4z" fill="#a21a2e"/><path d="M8.3,21 L16.98,30" fill="none" stroke="#d79c80" stroke-linecap="round" stroke-width="4.3"/><path d="M-7.3,21 L-10.05,31.5" fill="none" stroke="#e5b29a" stroke-linecap="round" stroke-width="4.3"/><ellipse cx="8.1" cy="21.4" rx="2.6" ry="3.6" fill="#ad9654"/><ellipse cx="-6.7" cy="21.4" rx="2.4" ry="3.4" fill="#ad9654"/><ellipse cx="8.4" cy="21.6" rx="2.0" ry="2.9" fill="#8f2233"/><ellipse cx="-6.7" cy="21.0" rx="1.4" ry="2.0" fill="#963040"/><path d="M16.98,30 L6.78,38.5" fill="none" stroke="#d79c80" stroke-linecap="round" stroke-width="3.5"/><ellipse cx="6.78" cy="38.5" rx="2" ry="2.3" fill="#d79c80"/><path d="M-10.05,31.5 L-2.31,21.5" fill="none" stroke="#e5b29a" stroke-linecap="round" stroke-width="3.5"/><ellipse cx="-2.31" cy="21.5" rx="2" ry="2.3" fill="#e5b29a"/><ellipse cx="1.21" cy="5.4" rx="5.3" ry="5.4" fill="#2b2224"/><ellipse cx="1.41" cy="9.3" rx="3.7" ry="4.7" fill="#e5b29a"/><ellipse cx="1.31" cy="3.8" rx="4.5" ry="3.0" fill="#2b2224"/><ellipse cx="-2.69" cy="6.6" rx="1.0" ry="2.6" fill="#2b2224"/><ellipse cx="5.31" cy="6.6" rx="1.0" ry="2.6" fill="#2b2224"/><ellipse cx="1.41" cy="11.6" rx="1.0" ry="0.45" fill="#b3202e"/><ellipse cx="-0.09" cy="8.7" rx="0.8" ry="0.4" fill="#4a2e2a" opacity="0.8"/><ellipse cx="3.01" cy="8.7" rx="0.8" ry="0.4" fill="#4a2e2a" opacity="0.8"/></g></g><rect x="0.5" y="0.5" width="93" height="143" fill="none" stroke="#ffffff" stroke-opacity="0.45"/></svg></div>
<div class="t b" style="left:1362px;top:42px"><svg width="94" height="144" viewBox="0 0 94 144"><rect width="94" height="144" fill="url(#bg)"/><rect width="94" height="144" fill="url(#vg)"/><rect width="94" height="144" fill="url(#hg)"/><ellipse cx="48.3" cy="140.51" rx="13.6" ry="2.45" fill="#cbc6ce" opacity="0.5" filter="url(#soft2)"/><g filter="url(#soft)"><g transform="translate(46.3 7.5) scale(1.36)"><path d="M2.2,89.3 l3.2,0 l0.4,4.2 l-5.6,2.4z" fill="#d79c80"/><path d="M-4.6,97.7 l4.4,-3.1 l5.6,-2.5 l0.7,0.6 l-0.1,4.9 l-0.7,0 l-0.2,-3.1 l-5.2,3.6z" fill="#98102a"/><path d="M-0.6,90.8 l3.2,0 l0.4,4.2 l-5.6,2.4z" fill="#d79c80"/><path d="M-7.4,99.2 l4.4,-3.1 l5.6,-2.5 l0.7,0.6 l-0.1,4.9 l-0.7,0 l-0.2,-3.1 l-5.2,3.6z" fill="#b3142b"/><rect x="-2.74" y="12" width="4" height="7" fill="#d79c80"/><polygon points="-3.04,16.8 -7.8,18.4 -8.98,21.5 -7.04,27 -6.58,34.5 -7.92,43 -6.06,91.5 5.94,91.5 7.08,43 5.62,34.5 5.96,27 7.82,21.5 6.6,18.4 1.56,16.8" fill="#ad9654" stroke="#ad9654" stroke-width="0.8" stroke-linejoin="round"/><polygon points="2.39,27 2.26,34.5 2.96,43 2.64,91.5 5.94,91.5 7.08,43 5.62,34.5 5.96,27" fill="#927a3e" opacity="0.32"/><polygon points="-3.04,16.8 -7.8,18.4 -8.98,21.5 -7.04,27 -6.58,34.5 -7.92,43 -6.06,91.5 5.94,91.5 7.08,43 5.62,34.5 5.96,27 7.82,21.5 6.6,18.4 1.56,16.8" fill="url(#fl)" opacity="0.85"/><ellipse cx="-3.09" cy="24.3" rx="2.6" ry="2" fill="#a21a2e" transform="rotate(-20 -3.09 24.3)"/><ellipse cx="-2.01" cy="25.3" rx="1.3" ry="1.1" fill="#7e1424" transform="rotate(0 -2.01 25.3)"/><ellipse cx="0.31" cy="23" rx="1.5" ry="1.1" fill="#a21a2e" transform="rotate(15 0.31 23)"/><ellipse cx="0.92" cy="26.6" rx="1.3" ry="0.7" fill="#55703c" transform="rotate(30 0.92 26.6)"/><ellipse cx="-4.73" cy="26.9" rx="1.1" ry="0.6" fill="#55703c" transform="rotate(-30 -4.73 26.9)"/><ellipse cx="2.4" cy="28.9" rx="1.5" ry="1.9" fill="#bb2a66" transform="rotate(10 2.4 28.9)"/><ellipse cx="0.66" cy="30.8" rx="1" ry="0.6" fill="#55703c" transform="rotate(0 0.66 30.8)"/><ellipse cx="-3.05" cy="30.2" rx="0.9" ry="0.7" fill="#ebe4cf" transform="rotate(0 -3.05 30.2)"/><ellipse cx="3.13" cy="22.2" rx="0.9" ry="0.5" fill="#55703c" transform="rotate(-20 3.13 22.2)"/><ellipse cx="-2.22" cy="37.2" rx="1" ry="0.8" fill="#ebe4cf" transform="rotate(0 -2.22 37.2)"/><ellipse cx="1.98" cy="38.6" rx="0.8" ry="0.7" fill="#ebe4cf" transform="rotate(0 1.98 38.6)"/><ellipse cx="1.72" cy="42.8" rx="2.3" ry="1.8" fill="#a21a2e" transform="rotate(20 1.72 42.8)"/><ellipse cx="2.51" cy="43.7" rx="1.2" ry="1" fill="#7e1424" transform="rotate(0 2.51 43.7)"/><ellipse cx="-0.31" cy="44.7" rx="1.2" ry="0.7" fill="#55703c" transform="rotate(25 -0.31 44.7)"/><ellipse cx="-3.93" cy="41.8" rx="1" ry="0.9" fill="#ebe4cf" transform="rotate(0 -3.93 41.8)"/><ellipse cx="-4.28" cy="47.4" rx="1.7" ry="2.2" fill="#bb2a66" transform="rotate(-10 -4.28 47.4)"/><ellipse cx="-2.31" cy="51.3" rx="1.4" ry="1" fill="#ebe4cf" transform="rotate(20 -2.31 51.3)"/><ellipse cx="0.6" cy="49.6" rx="1.1" ry="0.6" fill="#55703c" transform="rotate(-30 0.6 49.6)"/><ellipse cx="3.15" cy="50.9" rx="1" ry="1.2" fill="#ebe4cf" transform="rotate(0 3.15 50.9)"/><ellipse cx="0.44" cy="54.2" rx="1.1" ry="0.8" fill="#ebe4cf" transform="rotate(-15 0.44 54.2)"/><ellipse cx="-3.84" cy="54.6" rx="0.9" ry="0.6" fill="#55703c" transform="rotate(20 -3.84 54.6)"/><ellipse cx="-2.25" cy="59.6" rx="2.6" ry="2.2" fill="#bb2a66" transform="rotate(15 -2.25 59.6)"/><ellipse cx="-1.46" cy="60.4" rx="1.3" ry="1.1" fill="#9a1f55" transform="rotate(0 -1.46 60.4)"/><ellipse cx="2.81" cy="58" rx="1" ry="1.3" fill="#ebe4cf" transform="rotate(0 2.81 58)"/><ellipse cx="1.87" cy="62.6" rx="1.1" ry="0.6" fill="#55703c" transform="rotate(30 1.87 62.6)"/><ellipse cx="-4.16" cy="64.6" rx="0.9" ry="0.8" fill="#ebe4cf" transform="rotate(0 -4.16 64.6)"/><ellipse cx="1.51" cy="66.6" rx="1.4" ry="1" fill="#ebe4cf" transform="rotate(-20 1.51 66.6)"/><ellipse cx="-2.55" cy="71.6" rx="2.2" ry="2" fill="#bb2a66" transform="rotate(-15 -2.55 71.6)"/><ellipse cx="0.56" cy="70" rx="1" ry="0.6" fill="#55703c" transform="rotate(-25 0.56 70)"/><ellipse cx="2.92" cy="72.6" rx="0.9" ry="1.1" fill="#ebe4cf" transform="rotate(0 2.92 72.6)"/><ellipse cx="-4.07" cy="76" rx="0.9" ry="0.5" fill="#55703c" transform="rotate(20 -4.07 76)"/><ellipse cx="0.42" cy="77" rx="1.1" ry="0.8" fill="#ebe4cf" transform="rotate(10 0.42 77)"/><ellipse cx="1.43" cy="82" rx="2.3" ry="2" fill="#bb2a66" transform="rotate(20 1.43 82)"/><ellipse cx="0.65" cy="82.7" rx="1.1" ry="1" fill="#9a1f55" transform="rotate(0 0.65 82.7)"/><ellipse cx="-3.26" cy="81" rx="1" ry="0.9" fill="#ebe4cf" transform="rotate(0 -3.26 81)"/><ellipse cx="3.35" cy="79" rx="0.9" ry="0.5" fill="#55703c" transform="rotate(-30 3.35 79)"/><ellipse cx="-2.44" cy="86.6" rx="1.2" ry="0.9" fill="#ebe4cf" transform="rotate(15 -2.44 86.6)"/><ellipse cx="2.44" cy="87.6" rx="1" ry="0.8" fill="#ebe4cf" transform="rotate(0 2.44 87.6)"/><ellipse cx="-0.47" cy="88.6" rx="0.9" ry="0.5" fill="#55703c" transform="rotate(0 -0.47 88.6)"/><path d="M-2.94,14.6 l2.2,1.6 l2.2,-1.6 l0.5,3 h-5.4z" fill="#a21a2e"/><path d="M7.02,21 L8.31,33.5" fill="none" stroke="#d79c80" stroke-linecap="round" stroke-width="4.3"/><path d="M-8.58,21 L-11,32" fill="none" stroke="#e5b29a" stroke-linecap="round" stroke-width="4.3"/><ellipse cx="6.82" cy="21.4" rx="2.6" ry="3.6" fill="#ad9654"/><ellipse cx="-7.98" cy="21.4" rx="2.4" ry="3.4" fill="#ad9654"/><ellipse cx="7.12" cy="21.6" rx="2.0" ry="2.9" fill="#8f2233"/><ellipse cx="-7.98" cy="21.0" rx="1.4" ry="2.0" fill="#963040"/><path d="M8.31,33.5 L-7.47,35.5" fill="none" stroke="#d79c80" stroke-linecap="round" stroke-width="3.5"/><ellipse cx="-7.47" cy="35.5" rx="2" ry="2.3" fill="#d79c80"/><path d="M-11,32 L-3.57,22.5" fill="none" stroke="#e5b29a" stroke-linecap="round" stroke-width="3.5"/><ellipse cx="-3.57" cy="22.5" rx="2" ry="2.3" fill="#e5b29a"/><ellipse cx="-0.74" cy="5.4" rx="5.3" ry="5.4" fill="#2b2224"/><ellipse cx="-0.54" cy="9.3" rx="3.7" ry="4.7" fill="#e5b29a"/><ellipse cx="-0.64" cy="3.8" rx="4.5" ry="3.0" fill="#2b2224"/><ellipse cx="-4.64" cy="6.6" rx="1.0" ry="2.6" fill="#2b2224"/><ellipse cx="3.36" cy="6.6" rx="1.0" ry="2.6" fill="#2b2224"/><ellipse cx="-0.54" cy="11.6" rx="1.0" ry="0.45" fill="#b3202e"/><ellipse cx="-2.04" cy="8.7" rx="0.8" ry="0.4" fill="#4a2e2a" opacity="0.8"/><ellipse cx="1.06" cy="8.7" rx="0.8" ry="0.4" fill="#4a2e2a" opacity="0.8"/></g></g><rect x="0.5" y="0.5" width="93" height="143" fill="none" stroke="#ffffff" stroke-opacity="0.45"/></svg></div>
<div class="t b" style="left:1528px;top:42px"><svg width="94" height="144" viewBox="0 0 94 144"><rect width="94" height="144" fill="url(#bg)"/><rect width="94" height="144" fill="url(#vg)"/><rect width="94" height="144" fill="url(#hg)"/><ellipse cx="47" cy="139.99" rx="13.7" ry="2.47" fill="#cbc6ce" opacity="0.5" filter="url(#soft2)"/><g filter="url(#soft)"><g transform="translate(45 6) scale(1.37)"><path d="M2.2,89.3 l3.2,0 l0.4,4.2 l-5.6,2.4z" fill="#d79c80"/><path d="M-4.6,97.7 l4.4,-3.1 l5.6,-2.5 l0.7,0.6 l-0.1,4.9 l-0.7,0 l-0.2,-3.1 l-5.2,3.6z" fill="#98102a"/><path d="M-0.6,90.8 l3.2,0 l0.4,4.2 l-5.6,2.4z" fill="#d79c80"/><path d="M-7.4,99.2 l4.4,-3.1 l5.6,-2.5 l0.7,0.6 l-0.1,4.9 l-0.7,0 l-0.2,-3.1 l-5.2,3.6z" fill="#b3142b"/><rect x="-2.8" y="12" width="4" height="7" fill="#d79c80"/><polygon points="-3.1,16.8 -7.86,18.4 -9.03,21.5 -7.09,27 -6.63,34.5 -7.96,43 -6.07,91.5 5.93,91.5 7.04,43 5.57,34.5 5.91,27 7.77,21.5 6.54,18.4 1.5,16.8" fill="#ad9654" stroke="#ad9654" stroke-width="0.8" stroke-linejoin="round"/><polygon points="2.34,27 2.22,34.5 2.92,43 2.63,91.5 5.93,91.5 7.04,43 5.57,34.5 5.91,27" fill="#927a3e" opacity="0.32"/><polygon points="-3.1,16.8 -7.86,18.4 -9.03,21.5 -7.09,27 -6.63,34.5 -7.96,43 -6.07,91.5 5.93,91.5 7.04,43 5.57,34.5 5.91,27 7.77,21.5 6.54,18.4 1.5,16.8" fill="url(#fl)" opacity="0.85"/><ellipse cx="-3.14" cy="24.3" rx="2.6" ry="2" fill="#a21a2e" transform="rotate(-20 -3.14 24.3)"/><ellipse cx="-2.06" cy="25.3" rx="1.3" ry="1.1" fill="#7e1424" transform="rotate(0 -2.06 25.3)"/><ellipse cx="0.26" cy="23" rx="1.5" ry="1.1" fill="#a21a2e" transform="rotate(15 0.26 23)"/><ellipse cx="0.87" cy="26.6" rx="1.3" ry="0.7" fill="#55703c" transform="rotate(30 0.87 26.6)"/><ellipse cx="-4.78" cy="26.9" rx="1.1" ry="0.6" fill="#55703c" transform="rotate(-30 -4.78 26.9)"/><ellipse cx="2.35" cy="28.9" rx="1.5" ry="1.9" fill="#bb2a66" transform="rotate(10 2.35 28.9)"/><ellipse cx="0.61" cy="30.8" rx="1" ry="0.6" fill="#55703c" transform="rotate(0 0.61 30.8)"/><ellipse cx="-3.09" cy="30.2" rx="0.9" ry="0.7" fill="#ebe4cf" transform="rotate(0 -3.09 30.2)"/><ellipse cx="3.08" cy="22.2" rx="0.9" ry="0.5" fill="#55703c" transform="rotate(-20 3.08 22.2)"/><ellipse cx="-2.26" cy="37.2" rx="1" ry="0.8" fill="#ebe4cf" transform="rotate(0 -2.26 37.2)"/><ellipse cx="1.94" cy="38.6" rx="0.8" ry="0.7" fill="#ebe4cf" transform="rotate(0 1.94 38.6)"/><ellipse cx="1.68" cy="42.8" rx="2.3" ry="1.8" fill="#a21a2e" transform="rotate(20 1.68 42.8)"/><ellipse cx="2.47" cy="43.7" rx="1.2" ry="1" fill="#7e1424" transform="rotate(0 2.47 43.7)"/><ellipse cx="-0.35" cy="44.7" rx="1.2" ry="0.7" fill="#55703c" transform="rotate(25 -0.35 44.7)"/><ellipse cx="-3.97" cy="41.8" rx="1" ry="0.9" fill="#ebe4cf" transform="rotate(0 -3.97 41.8)"/><ellipse cx="-4.32" cy="47.4" rx="1.7" ry="2.2" fill="#bb2a66" transform="rotate(-10 -4.32 47.4)"/><ellipse cx="-2.34" cy="51.3" rx="1.4" ry="1" fill="#ebe4cf" transform="rotate(20 -2.34 51.3)"/><ellipse cx="0.57" cy="49.6" rx="1.1" ry="0.6" fill="#55703c" transform="rotate(-30 0.57 49.6)"/><ellipse cx="3.11" cy="50.9" rx="1" ry="1.2" fill="#ebe4cf" transform="rotate(0 3.11 50.9)"/><ellipse cx="0.41" cy="54.2" rx="1.1" ry="0.8" fill="#ebe4cf" transform="rotate(-15 0.41 54.2)"/><ellipse cx="-3.87" cy="54.6" rx="0.9" ry="0.6" fill="#55703c" transform="rotate(20 -3.87 54.6)"/><ellipse cx="-2.27" cy="59.6" rx="2.6" ry="2.2" fill="#bb2a66" transform="rotate(15 -2.27 59.6)"/><ellipse cx="-1.49" cy="60.4" rx="1.3" ry="1.1" fill="#9a1f55" transform="rotate(0 -1.49 60.4)"/><ellipse cx="2.78" cy="58" rx="1" ry="1.3" fill="#ebe4cf" transform="rotate(0 2.78 58)"/><ellipse cx="1.84" cy="62.6" rx="1.1" ry="0.6" fill="#55703c" transform="rotate(30 1.84 62.6)"/><ellipse cx="-4.18" cy="64.6" rx="0.9" ry="0.8" fill="#ebe4cf" transform="rotate(0 -4.18 64.6)"/><ellipse cx="1.49" cy="66.6" rx="1.4" ry="1" fill="#ebe4cf" transform="rotate(-20 1.49 66.6)"/><ellipse cx="-2.57" cy="71.6" rx="2.2" ry="2" fill="#bb2a66" transform="rotate(-15 -2.57 71.6)"/><ellipse cx="0.54" cy="70" rx="1" ry="0.6" fill="#55703c" transform="rotate(-25 0.54 70)"/><ellipse cx="2.9" cy="72.6" rx="0.9" ry="1.1" fill="#ebe4cf" transform="rotate(0 2.9 72.6)"/><ellipse cx="-4.09" cy="76" rx="0.9" ry="0.5" fill="#55703c" transform="rotate(20 -4.09 76)"/><ellipse cx="0.4" cy="77" rx="1.1" ry="0.8" fill="#ebe4cf" transform="rotate(10 0.4 77)"/><ellipse cx="1.41" cy="82" rx="2.3" ry="2" fill="#bb2a66" transform="rotate(20 1.41 82)"/><ellipse cx="0.64" cy="82.7" rx="1.1" ry="1" fill="#9a1f55" transform="rotate(0 0.64 82.7)"/><ellipse cx="-3.27" cy="81" rx="1" ry="0.9" fill="#ebe4cf" transform="rotate(0 -3.27 81)"/><ellipse cx="3.34" cy="79" rx="0.9" ry="0.5" fill="#55703c" transform="rotate(-30 3.34 79)"/><ellipse cx="-2.45" cy="86.6" rx="1.2" ry="0.9" fill="#ebe4cf" transform="rotate(15 -2.45 86.6)"/><ellipse cx="2.43" cy="87.6" rx="1" ry="0.8" fill="#ebe4cf" transform="rotate(0 2.43 87.6)"/><ellipse cx="-0.48" cy="88.6" rx="0.9" ry="0.5" fill="#55703c" transform="rotate(0 -0.48 88.6)"/><path d="M-3,14.6 l2.2,1.6 l2.2,-1.6 l0.5,3 h-5.4z" fill="#a21a2e"/><path d="M6.97,21 L8.48,35" fill="none" stroke="#d79c80" stroke-linecap="round" stroke-width="4.3"/><path d="M-8.63,21 L-10.53,34" fill="none" stroke="#e5b29a" stroke-linecap="round" stroke-width="4.3"/><ellipse cx="6.77" cy="21.4" rx="2.6" ry="3.6" fill="#ad9654"/><ellipse cx="-8.03" cy="21.4" rx="2.4" ry="3.4" fill="#ad9654"/><ellipse cx="7.07" cy="21.6" rx="2.0" ry="2.9" fill="#8f2233"/><ellipse cx="-8.03" cy="21.0" rx="1.4" ry="2.0" fill="#963040"/><path d="M8.48,35 L-2.47,41" fill="none" stroke="#d79c80" stroke-linecap="round" stroke-width="3.5"/><ellipse cx="-2.47" cy="41" rx="2" ry="2.3" fill="#d79c80"/><path d="M-10.53,34 L0,38" fill="none" stroke="#e5b29a" stroke-linecap="round" stroke-width="3.5"/><ellipse cx="0" cy="38" rx="2" ry="2.3" fill="#e5b29a"/><ellipse cx="-0.8" cy="5.4" rx="5.3" ry="5.4" fill="#2b2224"/><ellipse cx="-0.6" cy="9.3" rx="3.7" ry="4.7" fill="#e5b29a"/><ellipse cx="-0.7" cy="3.8" rx="4.5" ry="3.0" fill="#2b2224"/><ellipse cx="-4.7" cy="6.6" rx="1.0" ry="2.6" fill="#2b2224"/><ellipse cx="3.3" cy="6.6" rx="1.0" ry="2.6" fill="#2b2224"/><ellipse cx="-0.6" cy="11.6" rx="1.0" ry="0.45" fill="#b3202e"/><ellipse cx="-2.1" cy="8.7" rx="0.8" ry="0.4" fill="#4a2e2a" opacity="0.8"/><ellipse cx="1" cy="8.7" rx="0.8" ry="0.4" fill="#4a2e2a" opacity="0.8"/></g></g><rect x="0.5" y="0.5" width="93" height="143" fill="none" stroke="#ffffff" stroke-opacity="0.45"/></svg></div>
<div class="t b" style="left:34px;top:216px"><svg width="94" height="144" viewBox="0 0 94 144"><rect width="94" height="144" fill="url(#bg)"/><rect width="94" height="144" fill="url(#vg)"/><rect width="94" height="144" fill="url(#hg)"/><ellipse cx="49" cy="139.75" rx="12.5" ry="2.25" fill="#cbc6ce" opacity="0.5" filter="url(#soft2)"/><g filter="url(#soft)"><g transform="translate(47 17.5) scale(1.25)"><path d="M2.2,89.3 l3.2,0 l0.4,4.2 l-5.6,2.4z" fill="#d79c80"/><path d="M-4.6,97.7 l4.4,-3.1 l5.6,-2.5 l0.7,0.6 l-0.1,4.9 l-0.7,0 l-0.2,-3.1 l-5.2,3.6z" fill="#98102a"/><path d="M-0.6,90.8 l3.2,0 l0.4,4.2 l-5.6,2.4z" fill="#d79c80"/><path d="M-7.4,99.2 l4.4,-3.1 l5.6,-2.5 l0.7,0.6 l-0.1,4.9 l-0.7,0 l-0.2,-3.1 l-5.2,3.6z" fill="#b3142b"/><rect x="-1.28" y="12" width="4" height="7" fill="#d79c80"/><polygon points="-1.58,16.8 -6.61,18.4 -7.83,21.5 -5.97,27 -5.63,34.5 -7.09,43 -5.94,91.5 6.06,91.5 7.91,43 6.57,34.5 7.03,27 8.97,21.5 7.79,18.4 3.02,16.8" fill="#ad9654" stroke="#ad9654" stroke-width="0.8" stroke-linejoin="round"/><polygon points="3.45,27 3.22,34.5 3.79,43 2.76,91.5 6.06,91.5 7.91,43 6.57,34.5 7.03,27" fill="#927a3e" opacity="0.32"/><polygon points="-1.58,16.8 -6.61,18.4 -7.83,21.5 -5.97,27 -5.63,34.5 -7.09,43 -5.94,91.5 6.06,91.5 7.91,43 6.57,34.5 7.03,27 8.97,21.5 7.79,18.4 3.02,16.8" fill="url(#fl)" opacity="0.85"/><ellipse cx="-1.99" cy="24.3" rx="2.6" ry="2" fill="#a21a2e" transform="rotate(-20 -1.99 24.3)"/><ellipse cx="-0.92" cy="25.3" rx="1.3" ry="1.1" fill="#7e1424" transform="rotate(0 -0.92 25.3)"/><ellipse cx="1.43" cy="23" rx="1.5" ry="1.1" fill="#a21a2e" transform="rotate(15 1.43 23)"/><ellipse cx="1.99" cy="26.6" rx="1.3" ry="0.7" fill="#55703c" transform="rotate(30 1.99 26.6)"/><ellipse cx="-3.66" cy="26.9" rx="1.1" ry="0.6" fill="#55703c" transform="rotate(-30 -3.66 26.9)"/><ellipse cx="3.43" cy="28.9" rx="1.5" ry="1.9" fill="#bb2a66" transform="rotate(10 3.43 28.9)"/><ellipse cx="1.67" cy="30.8" rx="1" ry="0.6" fill="#55703c" transform="rotate(0 1.67 30.8)"/><ellipse cx="-2.03" cy="30.2" rx="0.9" ry="0.7" fill="#ebe4cf" transform="rotate(0 -2.03 30.2)"/><ellipse cx="4.26" cy="22.2" rx="0.9" ry="0.5" fill="#55703c" transform="rotate(-20 4.26 22.2)"/><ellipse cx="-1.3" cy="37.2" rx="1" ry="0.8" fill="#ebe4cf" transform="rotate(0 -1.3 37.2)"/><ellipse cx="2.88" cy="38.6" rx="0.8" ry="0.7" fill="#ebe4cf" transform="rotate(0 2.88 38.6)"/><ellipse cx="2.55" cy="42.8" rx="2.3" ry="1.8" fill="#a21a2e" transform="rotate(20 2.55 42.8)"/><ellipse cx="3.33" cy="43.7" rx="1.2" ry="1" fill="#7e1424" transform="rotate(0 3.33 43.7)"/><ellipse cx="0.5" cy="44.7" rx="1.2" ry="0.7" fill="#55703c" transform="rotate(25 0.5 44.7)"/><ellipse cx="-3.09" cy="41.8" rx="1" ry="0.9" fill="#ebe4cf" transform="rotate(0 -3.09 41.8)"/><ellipse cx="-3.52" cy="47.4" rx="1.7" ry="2.2" fill="#bb2a66" transform="rotate(-10 -3.52 47.4)"/><ellipse cx="-1.6" cy="51.3" rx="1.4" ry="1" fill="#ebe4cf" transform="rotate(20 -1.6 51.3)"/><ellipse cx="1.34" cy="49.6" rx="1.1" ry="0.6" fill="#55703c" transform="rotate(-30 1.34 49.6)"/><ellipse cx="3.86" cy="50.9" rx="1" ry="1.2" fill="#ebe4cf" transform="rotate(0 3.86 50.9)"/><ellipse cx="1.11" cy="54.2" rx="1.1" ry="0.8" fill="#ebe4cf" transform="rotate(-15 1.11 54.2)"/><ellipse cx="-3.18" cy="54.6" rx="0.9" ry="0.6" fill="#55703c" transform="rotate(20 -3.18 54.6)"/><ellipse cx="-1.66" cy="59.6" rx="2.6" ry="2.2" fill="#bb2a66" transform="rotate(15 -1.66 59.6)"/><ellipse cx="-0.88" cy="60.4" rx="1.3" ry="1.1" fill="#9a1f55" transform="rotate(0 -0.88 60.4)"/><ellipse cx="3.42" cy="58" rx="1" ry="1.3" fill="#ebe4cf" transform="rotate(0 3.42 58)"/><ellipse cx="2.41" cy="62.6" rx="1.1" ry="0.6" fill="#55703c" transform="rotate(30 2.41 62.6)"/><ellipse cx="-3.64" cy="64.6" rx="0.9" ry="0.8" fill="#ebe4cf" transform="rotate(0 -3.64 64.6)"/><ellipse cx="1.99" cy="66.6" rx="1.4" ry="1" fill="#ebe4cf" transform="rotate(-20 1.99 66.6)"/><ellipse cx="-2.13" cy="71.6" rx="2.2" ry="2" fill="#bb2a66" transform="rotate(-15 -2.13 71.6)"/><ellipse cx="1" cy="70" rx="1" ry="0.6" fill="#55703c" transform="rotate(-25 1 70)"/><ellipse cx="3.31" cy="72.6" rx="0.9" ry="1.1" fill="#ebe4cf" transform="rotate(0 3.31 72.6)"/><ellipse cx="-3.72" cy="76" rx="0.9" ry="0.5" fill="#55703c" transform="rotate(20 -3.72 76)"/><ellipse cx="0.75" cy="77" rx="1.1" ry="0.8" fill="#ebe4cf" transform="rotate(10 0.75 77)"/><ellipse cx="1.69" cy="82" rx="2.3" ry="2" fill="#bb2a66" transform="rotate(20 1.69 82)"/><ellipse cx="0.9" cy="82.7" rx="1.1" ry="1" fill="#9a1f55" transform="rotate(0 0.9 82.7)"/><ellipse cx="-2.98" cy="81" rx="1" ry="0.9" fill="#ebe4cf" transform="rotate(0 -2.98 81)"/><ellipse cx="3.66" cy="79" rx="0.9" ry="0.5" fill="#55703c" transform="rotate(-30 3.66 79)"/><ellipse cx="-2.24" cy="86.6" rx="1.2" ry="0.9" fill="#ebe4cf" transform="rotate(15 -2.24 86.6)"/><ellipse cx="2.62" cy="87.6" rx="1" ry="0.8" fill="#ebe4cf" transform="rotate(0 2.62 87.6)"/><ellipse cx="-0.31" cy="88.6" rx="0.9" ry="0.5" fill="#55703c" transform="rotate(0 -0.31 88.6)"/><path d="M-1.48,14.6 l2.2,1.6 l2.2,-1.6 l0.5,3 h-5.4z" fill="#a21a2e"/><path d="M8.17,21 L10.07,35" fill="none" stroke="#d79c80" stroke-linecap="round" stroke-width="4.3"/><path d="M-7.43,21 L-10.01,32" fill="none" stroke="#e5b29a" stroke-linecap="round" stroke-width="4.3"/><ellipse cx="7.97" cy="21.4" rx="2.6" ry="3.6" fill="#ad9654"/><ellipse cx="-6.83" cy="21.4" rx="2.4" ry="3.4" fill="#ad9654"/><ellipse cx="8.27" cy="21.6" rx="2.0" ry="2.9" fill="#8f2233"/><ellipse cx="-6.83" cy="21.0" rx="1.4" ry="2.0" fill="#963040"/><path d="M10.07,35 L8.87,48" fill="none" stroke="#d79c80" stroke-linecap="round" stroke-width="3.5"/><ellipse cx="8.87" cy="48" rx="2" ry="2.3" fill="#d79c80"/><path d="M-10.01,32 L-3.44,22.5" fill="none" stroke="#e5b29a" stroke-linecap="round" stroke-width="3.5"/><ellipse cx="-3.44" cy="22.5" rx="2" ry="2.3" fill="#e5b29a"/><ellipse cx="0.72" cy="5.4" rx="5.3" ry="5.4" fill="#2b2224"/><ellipse cx="0.92" cy="9.3" rx="3.7" ry="4.7" fill="#e5b29a"/><ellipse cx="0.82" cy="3.8" rx="4.5" ry="3.0" fill="#2b2224"/><ellipse cx="-3.18" cy="6.6" rx="1.0" ry="2.6" fill="#2b2224"/><ellipse cx="4.82" cy="6.6" rx="1.0" ry="2.6" fill="#2b2224"/><ellipse cx="0.92" cy="11.6" rx="1.0" ry="0.45" fill="#b3202e"/><ellipse cx="-0.58" cy="8.7" rx="0.8" ry="0.4" fill="#4a2e2a" opacity="0.8"/><ellipse cx="2.52" cy="8.7" rx="0.8" ry="0.4" fill="#4a2e2a" opacity="0.8"/></g></g><rect x="0.5" y="0.5" width="93" height="143" fill="none" stroke="#ffffff" stroke-opacity="0.45"/></svg></div>
<div class="t b" style="left:200px;top:216px"><svg width="94" height="144" viewBox="0 0 94 144"><rect width="94" height="144" fill="url(#bg)"/><rect width="94" height="144" fill="url(#vg)"/><rect width="94" height="144" fill="url(#hg)"/><ellipse cx="45" cy="138.61" rx="13.15" ry="2.37" fill="#cbc6ce" opacity="0.5" filter="url(#soft2)"/><g filter="url(#soft)"><g transform="translate(43 10) scale(1.31)"><path d="M2.2,89.3 l3.2,0 l0.4,4.2 l-5.6,2.4z" fill="#d79c80"/><path d="M-4.6,97.7 l4.4,-3.1 l5.6,-2.5 l0.7,0.6 l-0.1,4.9 l-0.7,0 l-0.2,-3.1 l-5.2,3.6z" fill="#98102a"/><path d="M-0.6,90.8 l3.2,0 l0.4,4.2 l-5.6,2.4z" fill="#d79c80"/><path d="M-7.4,99.2 l4.4,-3.1 l5.6,-2.5 l0.7,0.6 l-0.1,4.9 l-0.7,0 l-0.2,-3.1 l-5.2,3.6z" fill="#b3142b"/><rect x="-0.1" y="12" width="4" height="7" fill="#d79c80"/><polygon points="-0.4,16.8 -5.65,18.4 -6.91,21.5 -5.11,27 -4.85,34.5 -6.42,43 -5.84,91.5 6.16,91.5 8.58,43 7.35,34.5 7.89,27 9.89,21.5 8.75,18.4 4.2,16.8" fill="#ad9654" stroke="#ad9654" stroke-width="0.8" stroke-linejoin="round"/><polygon points="4.31,27 3.99,34.5 4.46,43 2.86,91.5 6.16,91.5 8.58,43 7.35,34.5 7.89,27" fill="#927a3e" opacity="0.32"/><polygon points="-0.4,16.8 -5.65,18.4 -6.91,21.5 -5.11,27 -4.85,34.5 -6.42,43 -5.84,91.5 6.16,91.5 8.58,43 7.35,34.5 7.89,27 9.89,21.5 8.75,18.4 4.2,16.8" fill="url(#fl)" opacity="0.85"/><ellipse cx="-1.09" cy="24.3" rx="2.6" ry="2" fill="#a21a2e" transform="rotate(-20 -1.09 24.3)"/><ellipse cx="-0.04" cy="25.3" rx="1.3" ry="1.1" fill="#7e1424" transform="rotate(0 -0.04 25.3)"/><ellipse cx="2.34" cy="23" rx="1.5" ry="1.1" fill="#a21a2e" transform="rotate(15 2.34 23)"/><ellipse cx="2.86" cy="26.6" rx="1.3" ry="0.7" fill="#55703c" transform="rotate(30 2.86 26.6)"/><ellipse cx="-2.8" cy="26.9" rx="1.1" ry="0.6" fill="#55703c" transform="rotate(-30 -2.8 26.9)"/><ellipse cx="4.27" cy="28.9" rx="1.5" ry="1.9" fill="#bb2a66" transform="rotate(10 4.27 28.9)"/><ellipse cx="2.48" cy="30.8" rx="1" ry="0.6" fill="#55703c" transform="rotate(0 2.48 30.8)"/><ellipse cx="-1.21" cy="30.2" rx="0.9" ry="0.7" fill="#ebe4cf" transform="rotate(0 -1.21 30.2)"/><ellipse cx="5.18" cy="22.2" rx="0.9" ry="0.5" fill="#55703c" transform="rotate(-20 5.18 22.2)"/><ellipse cx="-0.56" cy="37.2" rx="1" ry="0.8" fill="#ebe4cf" transform="rotate(0 -0.56 37.2)"/><ellipse cx="3.6" cy="38.6" rx="0.8" ry="0.7" fill="#ebe4cf" transform="rotate(0 3.6 38.6)"/><ellipse cx="3.23" cy="42.8" rx="2.3" ry="1.8" fill="#a21a2e" transform="rotate(20 3.23 42.8)"/><ellipse cx="3.99" cy="43.7" rx="1.2" ry="1" fill="#7e1424" transform="rotate(0 3.99 43.7)"/><ellipse cx="1.15" cy="44.7" rx="1.2" ry="0.7" fill="#55703c" transform="rotate(25 1.15 44.7)"/><ellipse cx="-2.4" cy="41.8" rx="1" ry="0.9" fill="#ebe4cf" transform="rotate(0 -2.4 41.8)"/><ellipse cx="-2.9" cy="47.4" rx="1.7" ry="2.2" fill="#bb2a66" transform="rotate(-10 -2.9 47.4)"/><ellipse cx="-1.02" cy="51.3" rx="1.4" ry="1" fill="#ebe4cf" transform="rotate(20 -1.02 51.3)"/><ellipse cx="1.93" cy="49.6" rx="1.1" ry="0.6" fill="#55703c" transform="rotate(-30 1.93 49.6)"/><ellipse cx="4.44" cy="50.9" rx="1" ry="1.2" fill="#ebe4cf" transform="rotate(0 4.44 50.9)"/><ellipse cx="1.65" cy="54.2" rx="1.1" ry="0.8" fill="#ebe4cf" transform="rotate(-15 1.65 54.2)"/><ellipse cx="-2.64" cy="54.6" rx="0.9" ry="0.6" fill="#55703c" transform="rotate(20 -2.64 54.6)"/><ellipse cx="-1.18" cy="59.6" rx="2.6" ry="2.2" fill="#bb2a66" transform="rotate(15 -1.18 59.6)"/><ellipse cx="-0.42" cy="60.4" rx="1.3" ry="1.1" fill="#9a1f55" transform="rotate(0 -0.42 60.4)"/><ellipse cx="3.92" cy="58" rx="1" ry="1.3" fill="#ebe4cf" transform="rotate(0 3.92 58)"/><ellipse cx="2.85" cy="62.6" rx="1.1" ry="0.6" fill="#55703c" transform="rotate(30 2.85 62.6)"/><ellipse cx="-3.22" cy="64.6" rx="0.9" ry="0.8" fill="#ebe4cf" transform="rotate(0 -3.22 64.6)"/><ellipse cx="2.39" cy="66.6" rx="1.4" ry="1" fill="#ebe4cf" transform="rotate(-20 2.39 66.6)"/><ellipse cx="-1.8" cy="71.6" rx="2.2" ry="2" fill="#bb2a66" transform="rotate(-15 -1.8 71.6)"/><ellipse cx="1.35" cy="70" rx="1" ry="0.6" fill="#55703c" transform="rotate(-25 1.35 70)"/><ellipse cx="3.64" cy="72.6" rx="0.9" ry="1.1" fill="#ebe4cf" transform="rotate(0 3.64 72.6)"/><ellipse cx="-3.44" cy="76" rx="0.9" ry="0.5" fill="#55703c" transform="rotate(20 -3.44 76)"/><ellipse cx="1.02" cy="77" rx="1.1" ry="0.8" fill="#ebe4cf" transform="rotate(10 1.02 77)"/><ellipse cx="1.9" cy="82" rx="2.3" ry="2" fill="#bb2a66" transform="rotate(20 1.9 82)"/><ellipse cx="1.11" cy="82.7" rx="1.1" ry="1" fill="#9a1f55" transform="rotate(0 1.11 82.7)"/><ellipse cx="-2.76" cy="81" rx="1" ry="0.9" fill="#ebe4cf" transform="rotate(0 -2.76 81)"/><ellipse cx="3.91" cy="79" rx="0.9" ry="0.5" fill="#55703c" transform="rotate(-30 3.91 79)"/><ellipse cx="-2.08" cy="86.6" rx="1.2" ry="0.9" fill="#ebe4cf" transform="rotate(15 -2.08 86.6)"/><ellipse cx="2.77" cy="87.6" rx="1" ry="0.8" fill="#ebe4cf" transform="rotate(0 2.77 87.6)"/><ellipse cx="-0.17" cy="88.6" rx="0.9" ry="0.5" fill="#55703c" transform="rotate(0 -0.17 88.6)"/><path d="M-0.3,14.6 l2.2,1.6 l2.2,-1.6 l0.5,3 h-5.4z" fill="#a21a2e"/><path d="M9.1,21 L10.84,35" fill="none" stroke="#d79c80" stroke-linecap="round" stroke-width="4.3"/><path d="M-6.5,21 L-9.21,32" fill="none" stroke="#e5b29a" stroke-linecap="round" stroke-width="4.3"/><ellipse cx="8.9" cy="21.4" rx="2.6" ry="3.6" fill="#ad9654"/><ellipse cx="-5.9" cy="21.4" rx="2.4" ry="3.4" fill="#ad9654"/><ellipse cx="9.2" cy="21.6" rx="2.0" ry="2.9" fill="#8f2233"/><ellipse cx="-5.9" cy="21.0" rx="1.4" ry="2.0" fill="#963040"/><path d="M10.84,35 L9.49,48" fill="none" stroke="#d79c80" stroke-linecap="round" stroke-width="3.5"/><ellipse cx="9.49" cy="48" rx="2" ry="2.3" fill="#d79c80"/><path d="M-9.21,32 L-2.53,22.5" fill="none" stroke="#e5b29a" stroke-linecap="round" stroke-width="3.5"/><ellipse cx="-2.53" cy="22.5" rx="2" ry="2.3" fill="#e5b29a"/><ellipse cx="1.9" cy="5.4" rx="5.3" ry="5.4" fill="#2b2224"/><ellipse cx="2.1" cy="9.3" rx="3.7" ry="4.7" fill="#e5b29a"/><ellipse cx="2" cy="3.8" rx="4.5" ry="3.0" fill="#2b2224"/><ellipse cx="-2" cy="6.6" rx="1.0" ry="2.6" fill="#2b2224"/><ellipse cx="6" cy="6.6" rx="1.0" ry="2.6" fill="#2b2224"/><ellipse cx="2.1" cy="11.6" rx="1.0" ry="0.45" fill="#b3202e"/><ellipse cx="0.6" cy="8.7" rx="0.8" ry="0.4" fill="#4a2e2a" opacity="0.8"/><ellipse cx="3.7" cy="8.7" rx="0.8" ry="0.4" fill="#4a2e2a" opacity="0.8"/></g></g><rect x="0.5" y="0.5" width="93" height="143" fill="none" stroke="#ffffff" stroke-opacity="0.45"/></svg></div>
<div class="t b" style="left:366px;top:216px"><svg width="94" height="144" viewBox="0 0 94 144"><rect width="94" height="144" fill="url(#bg)"/><rect width="94" height="144" fill="url(#vg)"/><rect width="94" height="144" fill="url(#hg)"/><ellipse cx="43.7" cy="138.59" rx="13.23" ry="2.38" fill="#cbc6ce" opacity="0.5" filter="url(#soft2)"/><g filter="url(#soft)"><g transform="translate(41.7 9.2) scale(1.32)"><path d="M2.2,89.3 l3.2,0 l0.4,4.2 l-5.6,2.4z" fill="#d79c80"/><path d="M-4.6,97.7 l4.4,-3.1 l5.6,-2.5 l0.7,0.6 l-0.1,4.9 l-0.7,0 l-0.2,-3.1 l-5.2,3.6z" fill="#98102a"/><path d="M-0.6,90.8 l3.2,0 l0.4,4.2 l-5.6,2.4z" fill="#d79c80"/><path d="M-7.4,99.2 l4.4,-3.1 l5.6,-2.5 l0.7,0.6 l-0.1,4.9 l-0.7,0 l-0.2,-3.1 l-5.2,3.6z" fill="#b3142b"/><rect x="1.55" y="12" width="4" height="7" fill="#d79c80"/><polygon points="1.25,16.8 -4.3,18.4 -5.61,21.5 -3.91,27 -3.77,34.5 -5.48,43 -5.7,91.5 6.3,91.5 9.52,43 8.43,34.5 9.09,27 11.19,21.5 10.1,18.4 5.85,16.8" fill="#ad9654" stroke="#ad9654" stroke-width="0.8" stroke-linejoin="round"/><polygon points="5.52,27 5.07,34.5 5.4,43 3,91.5 6.3,91.5 9.52,43 8.43,34.5 9.09,27" fill="#927a3e" opacity="0.32"/><polygon points="1.25,16.8 -4.3,18.4 -5.61,21.5 -3.91,27 -3.77,34.5 -5.48,43 -5.7,91.5 6.3,91.5 9.52,43 8.43,34.5 9.09,27 11.19,21.5 10.1,18.4 5.85,16.8" fill="url(#fl)" opacity="0.85"/><ellipse cx="0.16" cy="24.3" rx="2.6" ry="2" fill="#a21a2e" transform="rotate(-20 0.16 24.3)"/><ellipse cx="1.19" cy="25.3" rx="1.3" ry="1.1" fill="#7e1424" transform="rotate(0 1.19 25.3)"/><ellipse cx="3.61" cy="23" rx="1.5" ry="1.1" fill="#a21a2e" transform="rotate(15 3.61 23)"/><ellipse cx="4.07" cy="26.6" rx="1.3" ry="0.7" fill="#55703c" transform="rotate(30 4.07 26.6)"/><ellipse cx="-1.59" cy="26.9" rx="1.1" ry="0.6" fill="#55703c" transform="rotate(-30 -1.59 26.9)"/><ellipse cx="5.45" cy="28.9" rx="1.5" ry="1.9" fill="#bb2a66" transform="rotate(10 5.45 28.9)"/><ellipse cx="3.63" cy="30.8" rx="1" ry="0.6" fill="#55703c" transform="rotate(0 3.63 30.8)"/><ellipse cx="-0.05" cy="30.2" rx="0.9" ry="0.7" fill="#ebe4cf" transform="rotate(0 -0.05 30.2)"/><ellipse cx="6.47" cy="22.2" rx="0.9" ry="0.5" fill="#55703c" transform="rotate(-20 6.47 22.2)"/><ellipse cx="0.48" cy="37.2" rx="1" ry="0.8" fill="#ebe4cf" transform="rotate(0 0.48 37.2)"/><ellipse cx="4.62" cy="38.6" rx="0.8" ry="0.7" fill="#ebe4cf" transform="rotate(0 4.62 38.6)"/><ellipse cx="4.17" cy="42.8" rx="2.3" ry="1.8" fill="#a21a2e" transform="rotate(20 4.17 42.8)"/><ellipse cx="4.92" cy="43.7" rx="1.2" ry="1" fill="#7e1424" transform="rotate(0 4.92 43.7)"/><ellipse cx="2.06" cy="44.7" rx="1.2" ry="0.7" fill="#55703c" transform="rotate(25 2.06 44.7)"/><ellipse cx="-1.44" cy="41.8" rx="1" ry="0.9" fill="#ebe4cf" transform="rotate(0 -1.44 41.8)"/><ellipse cx="-2.03" cy="47.4" rx="1.7" ry="2.2" fill="#bb2a66" transform="rotate(-10 -2.03 47.4)"/><ellipse cx="-0.22" cy="51.3" rx="1.4" ry="1" fill="#ebe4cf" transform="rotate(20 -0.22 51.3)"/><ellipse cx="2.76" cy="49.6" rx="1.1" ry="0.6" fill="#55703c" transform="rotate(-30 2.76 49.6)"/><ellipse cx="5.25" cy="50.9" rx="1" ry="1.2" fill="#ebe4cf" transform="rotate(0 5.25 50.9)"/><ellipse cx="2.41" cy="54.2" rx="1.1" ry="0.8" fill="#ebe4cf" transform="rotate(-15 2.41 54.2)"/><ellipse cx="-1.89" cy="54.6" rx="0.9" ry="0.6" fill="#55703c" transform="rotate(20 -1.89 54.6)"/><ellipse cx="-0.51" cy="59.6" rx="2.6" ry="2.2" fill="#bb2a66" transform="rotate(15 -0.51 59.6)"/><ellipse cx="0.24" cy="60.4" rx="1.3" ry="1.1" fill="#9a1f55" transform="rotate(0 0.24 60.4)"/><ellipse cx="4.61" cy="58" rx="1" ry="1.3" fill="#ebe4cf" transform="rotate(0 4.61 58)"/><ellipse cx="3.47" cy="62.6" rx="1.1" ry="0.6" fill="#55703c" transform="rotate(30 3.47 62.6)"/><ellipse cx="-2.64" cy="64.6" rx="0.9" ry="0.8" fill="#ebe4cf" transform="rotate(0 -2.64 64.6)"/><ellipse cx="2.94" cy="66.6" rx="1.4" ry="1" fill="#ebe4cf" transform="rotate(-20 2.94 66.6)"/><ellipse cx="-1.33" cy="71.6" rx="2.2" ry="2" fill="#bb2a66" transform="rotate(-15 -1.33 71.6)"/><ellipse cx="1.84" cy="70" rx="1" ry="0.6" fill="#55703c" transform="rotate(-25 1.84 70)"/><ellipse cx="4.09" cy="72.6" rx="0.9" ry="1.1" fill="#ebe4cf" transform="rotate(0 4.09 72.6)"/><ellipse cx="-3.04" cy="76" rx="0.9" ry="0.5" fill="#55703c" transform="rotate(20 -3.04 76)"/><ellipse cx="1.4" cy="77" rx="1.1" ry="0.8" fill="#ebe4cf" transform="rotate(10 1.4 77)"/><ellipse cx="2.2" cy="82" rx="2.3" ry="2" fill="#bb2a66" transform="rotate(20 2.2 82)"/><ellipse cx="1.39" cy="82.7" rx="1.1" ry="1" fill="#9a1f55" transform="rotate(0 1.39 82.7)"/><ellipse cx="-2.44" cy="81" rx="1" ry="0.9" fill="#ebe4cf" transform="rotate(0 -2.44 81)"/><ellipse cx="4.25" cy="79" rx="0.9" ry="0.5" fill="#55703c" transform="rotate(-30 4.25 79)"/><ellipse cx="-1.86" cy="86.6" rx="1.2" ry="0.9" fill="#ebe4cf" transform="rotate(15 -1.86 86.6)"/><ellipse cx="2.97" cy="87.6" rx="1" ry="0.8" fill="#ebe4cf" transform="rotate(0 2.97 87.6)"/><ellipse cx="0.02" cy="88.6" rx="0.9" ry="0.5" fill="#55703c" transform="rotate(0 0.02 88.6)"/><path d="M1.35,14.6 l2.2,1.6 l2.2,-1.6 l0.5,3 h-5.4z" fill="#a21a2e"/><path d="M10.41,21 L11.91,35" fill="none" stroke="#d79c80" stroke-linecap="round" stroke-width="4.3"/><path d="M-5.19,21 L-8.08,32" fill="none" stroke="#e5b29a" stroke-linecap="round" stroke-width="4.3"/><ellipse cx="10.21" cy="21.4" rx="2.6" ry="3.6" fill="#ad9654"/><ellipse cx="-4.59" cy="21.4" rx="2.4" ry="3.4" fill="#ad9654"/><ellipse cx="10.51" cy="21.6" rx="2.0" ry="2.9" fill="#8f2233"/><ellipse cx="-4.59" cy="21.0" rx="1.4" ry="2.0" fill="#963040"/><path d="M11.91,35 L10.35,48" fill="none" stroke="#d79c80" stroke-linecap="round" stroke-width="3.5"/><ellipse cx="10.35" cy="48" rx="2" ry="2.3" fill="#d79c80"/><path d="M-8.08,32 L-1.25,22.5" fill="none" stroke="#e5b29a" stroke-linecap="round" stroke-width="3.5"/><ellipse cx="-1.25" cy="22.5" rx="2" ry="2.3" fill="#e5b29a"/><ellipse cx="3.55" cy="5.4" rx="5.3" ry="5.4" fill="#2b2224"/><ellipse cx="3.75" cy="9.3" rx="3.7" ry="4.7" fill="#e5b29a"/><ellipse cx="3.65" cy="3.8" rx="4.5" ry="3.0" fill="#2b2224"/><ellipse cx="-0.35" cy="6.6" rx="1.0" ry="2.6" fill="#2b2224"/><ellipse cx="7.65" cy="6.6" rx="1.0" ry="2.6" fill="#2b2224"/><ellipse cx="3.75" cy="11.6" rx="1.0" ry="0.45" fill="#b3202e"/><ellipse cx="2.25" cy="8.7" rx="0.8" ry="0.4" fill="#4a2e2a" opacity="0.8"/><ellipse cx="5.35" cy="8.7" rx="0.8" ry="0.4" fill="#4a2e2a" opacity="0.8"/></g></g><rect x="0.5" y="0.5" width="93" height="143" fill="none" stroke="#ffffff" stroke-opacity="0.45"/></svg></div>
<div class="t b" style="left:532px;top:216px"><svg width="94" height="144" viewBox="0 0 94 144"><rect width="94" height="144" fill="url(#bg)"/><rect width="94" height="144" fill="url(#vg)"/><rect width="94" height="144" fill="url(#hg)"/><ellipse cx="42.8" cy="138.59" rx="13.23" ry="2.38" fill="#cbc6ce" opacity="0.5" filter="url(#soft2)"/><g filter="url(#soft)"><g transform="translate(40.8 9.2) scale(1.32)"><path d="M2.2,89.3 l3.2,0 l0.4,4.2 l-5.6,2.4z" fill="#d79c80"/><path d="M-4.6,97.7 l4.4,-3.1 l5.6,-2.5 l0.7,0.6 l-0.1,4.9 l-0.7,0 l-0.2,-3.1 l-5.2,3.6z" fill="#98102a"/><path d="M-0.6,90.8 l3.2,0 l0.4,4.2 l-5.6,2.4z" fill="#d79c80"/><path d="M-7.4,99.2 l4.4,-3.1 l5.6,-2.5 l0.7,0.6 l-0.1,4.9 l-0.7,0 l-0.2,-3.1 l-5.2,3.6z" fill="#b3142b"/><rect x="2.08" y="12" width="4" height="7" fill="#d79c80"/><polygon points="1.78,16.8 -3.87,18.4 -5.2,21.5 -3.52,27 -3.43,34.5 -5.17,43 -5.65,91.5 6.35,91.5 9.83,43 8.77,34.5 9.48,27 11.6,21.5 10.53,18.4 6.38,16.8" fill="#ad9654" stroke="#ad9654" stroke-width="0.8" stroke-linejoin="round"/><polygon points="5.9,27 5.42,34.5 5.7,43 3.05,91.5 6.35,91.5 9.83,43 8.77,34.5 9.48,27" fill="#927a3e" opacity="0.32"/><polygon points="1.78,16.8 -3.87,18.4 -5.2,21.5 -3.52,27 -3.43,34.5 -5.17,43 -5.65,91.5 6.35,91.5 9.83,43 8.77,34.5 9.48,27 11.6,21.5 10.53,18.4 6.38,16.8" fill="url(#fl)" opacity="0.85"/><ellipse cx="0.56" cy="24.3" rx="2.6" ry="2" fill="#a21a2e" transform="rotate(-20 0.56 24.3)"/><ellipse cx="1.59" cy="25.3" rx="1.3" ry="1.1" fill="#7e1424" transform="rotate(0 1.59 25.3)"/><ellipse cx="4.02" cy="23" rx="1.5" ry="1.1" fill="#a21a2e" transform="rotate(15 4.02 23)"/><ellipse cx="4.46" cy="26.6" rx="1.3" ry="0.7" fill="#55703c" transform="rotate(30 4.46 26.6)"/><ellipse cx="-1.2" cy="26.9" rx="1.1" ry="0.6" fill="#55703c" transform="rotate(-30 -1.2 26.9)"/><ellipse cx="5.82" cy="28.9" rx="1.5" ry="1.9" fill="#bb2a66" transform="rotate(10 5.82 28.9)"/><ellipse cx="3.99" cy="30.8" rx="1" ry="0.6" fill="#55703c" transform="rotate(0 3.99 30.8)"/><ellipse cx="0.32" cy="30.2" rx="0.9" ry="0.7" fill="#ebe4cf" transform="rotate(0 0.32 30.2)"/><ellipse cx="6.88" cy="22.2" rx="0.9" ry="0.5" fill="#55703c" transform="rotate(-20 6.88 22.2)"/><ellipse cx="0.81" cy="37.2" rx="1" ry="0.8" fill="#ebe4cf" transform="rotate(0 0.81 37.2)"/><ellipse cx="4.94" cy="38.6" rx="0.8" ry="0.7" fill="#ebe4cf" transform="rotate(0 4.94 38.6)"/><ellipse cx="4.48" cy="42.8" rx="2.3" ry="1.8" fill="#a21a2e" transform="rotate(20 4.48 42.8)"/><ellipse cx="5.22" cy="43.7" rx="1.2" ry="1" fill="#7e1424" transform="rotate(0 5.22 43.7)"/><ellipse cx="2.35" cy="44.7" rx="1.2" ry="0.7" fill="#55703c" transform="rotate(25 2.35 44.7)"/><ellipse cx="-1.13" cy="41.8" rx="1" ry="0.9" fill="#ebe4cf" transform="rotate(0 -1.13 41.8)"/><ellipse cx="-1.75" cy="47.4" rx="1.7" ry="2.2" fill="#bb2a66" transform="rotate(-10 -1.75 47.4)"/><ellipse cx="0.04" cy="51.3" rx="1.4" ry="1" fill="#ebe4cf" transform="rotate(20 0.04 51.3)"/><ellipse cx="3.03" cy="49.6" rx="1.1" ry="0.6" fill="#55703c" transform="rotate(-30 3.03 49.6)"/><ellipse cx="5.51" cy="50.9" rx="1" ry="1.2" fill="#ebe4cf" transform="rotate(0 5.51 50.9)"/><ellipse cx="2.65" cy="54.2" rx="1.1" ry="0.8" fill="#ebe4cf" transform="rotate(-15 2.65 54.2)"/><ellipse cx="-1.65" cy="54.6" rx="0.9" ry="0.6" fill="#55703c" transform="rotate(20 -1.65 54.6)"/><ellipse cx="-0.3" cy="59.6" rx="2.6" ry="2.2" fill="#bb2a66" transform="rotate(15 -0.3 59.6)"/><ellipse cx="0.45" cy="60.4" rx="1.3" ry="1.1" fill="#9a1f55" transform="rotate(0 0.45 60.4)"/><ellipse cx="4.83" cy="58" rx="1" ry="1.3" fill="#ebe4cf" transform="rotate(0 4.83 58)"/><ellipse cx="3.67" cy="62.6" rx="1.1" ry="0.6" fill="#55703c" transform="rotate(30 3.67 62.6)"/><ellipse cx="-2.45" cy="64.6" rx="0.9" ry="0.8" fill="#ebe4cf" transform="rotate(0 -2.45 64.6)"/><ellipse cx="3.12" cy="66.6" rx="1.4" ry="1" fill="#ebe4cf" transform="rotate(-20 3.12 66.6)"/><ellipse cx="-1.18" cy="71.6" rx="2.2" ry="2" fill="#bb2a66" transform="rotate(-15 -1.18 71.6)"/><ellipse cx="2" cy="70" rx="1" ry="0.6" fill="#55703c" transform="rotate(-25 2 70)"/><ellipse cx="4.24" cy="72.6" rx="0.9" ry="1.1" fill="#ebe4cf" transform="rotate(0 4.24 72.6)"/><ellipse cx="-2.92" cy="76" rx="0.9" ry="0.5" fill="#55703c" transform="rotate(20 -2.92 76)"/><ellipse cx="1.52" cy="77" rx="1.1" ry="0.8" fill="#ebe4cf" transform="rotate(10 1.52 77)"/><ellipse cx="2.29" cy="82" rx="2.3" ry="2" fill="#bb2a66" transform="rotate(20 2.29 82)"/><ellipse cx="1.49" cy="82.7" rx="1.1" ry="1" fill="#9a1f55" transform="rotate(0 1.49 82.7)"/><ellipse cx="-2.34" cy="81" rx="1" ry="0.9" fill="#ebe4cf" transform="rotate(0 -2.34 81)"/><ellipse cx="4.36" cy="79" rx="0.9" ry="0.5" fill="#55703c" transform="rotate(-30 4.36 79)"/><ellipse cx="-1.79" cy="86.6" rx="1.2" ry="0.9" fill="#ebe4cf" transform="rotate(15 -1.79 86.6)"/><ellipse cx="3.04" cy="87.6" rx="1" ry="0.8" fill="#ebe4cf" transform="rotate(0 3.04 87.6)"/><ellipse cx="0.08" cy="88.6" rx="0.9" ry="0.5" fill="#55703c" transform="rotate(0 0.08 88.6)"/><path d="M1.88,14.6 l2.2,1.6 l2.2,-1.6 l0.5,3 h-5.4z" fill="#a21a2e"/><path d="M10.82,21 L12.25,35" fill="none" stroke="#d79c80" stroke-linecap="round" stroke-width="4.3"/><path d="M-4.78,21 L-7.72,32" fill="none" stroke="#e5b29a" stroke-linecap="round" stroke-width="4.3"/><ellipse cx="10.62" cy="21.4" rx="2.6" ry="3.6" fill="#ad9654"/><ellipse cx="-4.18" cy="21.4" rx="2.4" ry="3.4" fill="#ad9654"/><ellipse cx="10.92" cy="21.6" rx="2.0" ry="2.9" fill="#8f2233"/><ellipse cx="-4.18" cy="21.0" rx="1.4" ry="2.0" fill="#963040"/><path d="M12.25,35 L10.62,48" fill="none" stroke="#d79c80" stroke-linecap="round" stroke-width="3.5"/><ellipse cx="10.62" cy="48" rx="2" ry="2.3" fill="#d79c80"/><path d="M-7.72,32 L-0.84,22.5" fill="none" stroke="#e5b29a" stroke-linecap="round" stroke-width="3.5"/><ellipse cx="-0.84" cy="22.5" rx="2" ry="2.3" fill="#e5b29a"/><ellipse cx="4.08" cy="5.4" rx="5.3" ry="5.4" fill="#2b2224"/><ellipse cx="4.28" cy="9.3" rx="3.7" ry="4.7" fill="#e5b29a"/><ellipse cx="4.18" cy="3.8" rx="4.5" ry="3.0" fill="#2b2224"/><ellipse cx="0.18" cy="6.6" rx="1.0" ry="2.6" fill="#2b2224"/><ellipse cx="8.18" cy="6.6" rx="1.0" ry="2.6" fill="#2b2224"/><ellipse cx="4.28" cy="11.6" rx="1.0" ry="0.45" fill="#b3202e"/><ellipse cx="2.78" cy="8.7" rx="0.8" ry="0.4" fill="#4a2e2a" opacity="0.8"/><ellipse cx="5.88" cy="8.7" rx="0.8" ry="0.4" fill="#4a2e2a" opacity="0.8"/></g></g><rect x="0.5" y="0.5" width="93" height="143" fill="none" stroke="#ffffff" stroke-opacity="0.45"/></svg></div>
<div class="t b" style="left:698px;top:216px"><svg width="94" height="144" viewBox="0 0 94 144"><rect width="94" height="144" fill="url(#bg)"/><rect width="94" height="144" fill="url(#vg)"/><rect width="94" height="144" fill="url(#hg)"/><ellipse cx="41.6" cy="137.77" rx="13.33" ry="2.4" fill="#cbc6ce" opacity="0.5" filter="url(#soft2)"/><g filter="url(#soft)"><g transform="translate(39.6 7.4) scale(1.33)"><path d="M-4.4,91 L-2.2,91 L-2.3,95 L-4.5,95Z M2,91 L4.2,91 L4.1,94.6 L1.9,94.6Z" fill="#d79c80"/><path d="M-4.7,94.2 L-2,94.2 L-2.4,99.3 L-4.6,99.3Z M1.7,93.8 L4.4,93.8 L4.3,98.5 L2,98.5Z" fill="#b3142b"/><rect x="-0.05" y="12" width="4" height="7" fill="#d79c80"/><polygon points="-0.35,16.8 -7.21,18.4 -8.47,21.5 -6.38,27 -6.02,34.5 -7.89,43 -7.73,91.5 8.07,91.5 10.11,43 8.58,34.5 9.22,27 11.53,21.5 10.39,18.4 4.25,16.8" fill="#ad9654" stroke="#ad9654" stroke-width="0.8" stroke-linejoin="round"/><polygon points="4.93,27 4.56,34.5 5.16,43 3.72,91.5 8.07,91.5 10.11,43 8.58,34.5 9.22,27" fill="#927a3e" opacity="0.32"/><polygon points="-0.35,16.8 -7.21,18.4 -8.47,21.5 -6.38,27 -6.02,34.5 -7.89,43 -7.73,91.5 8.07,91.5 10.11,43 8.58,34.5 9.22,27 11.53,21.5 10.39,18.4 4.25,16.8" fill="url(#fl)" opacity="0.85"/><ellipse cx="-1.36" cy="24.3" rx="2.6" ry="2" fill="#a21a2e" transform="rotate(-20 -1.36 24.3)"/><ellipse cx="-0.18" cy="25.3" rx="1.3" ry="1.1" fill="#7e1424" transform="rotate(0 -0.18 25.3)"/><ellipse cx="2.48" cy="23" rx="1.5" ry="1.1" fill="#a21a2e" transform="rotate(15 2.48 23)"/><ellipse cx="3.07" cy="26.6" rx="1.3" ry="0.7" fill="#55703c" transform="rotate(30 3.07 26.6)"/><ellipse cx="-3.27" cy="26.9" rx="1.1" ry="0.6" fill="#55703c" transform="rotate(-30 -3.27 26.9)"/><ellipse cx="4.66" cy="28.9" rx="1.5" ry="1.9" fill="#bb2a66" transform="rotate(10 4.66 28.9)"/><ellipse cx="2.66" cy="30.8" rx="1" ry="0.6" fill="#55703c" transform="rotate(0 2.66 30.8)"/><ellipse cx="-1.47" cy="30.2" rx="0.9" ry="0.7" fill="#ebe4cf" transform="rotate(0 -1.47 30.2)"/><ellipse cx="5.66" cy="22.2" rx="0.9" ry="0.5" fill="#55703c" transform="rotate(-20 5.66 22.2)"/><ellipse cx="-0.74" cy="37.2" rx="1" ry="0.8" fill="#ebe4cf" transform="rotate(0 -0.74 37.2)"/><ellipse cx="3.92" cy="38.6" rx="0.8" ry="0.7" fill="#ebe4cf" transform="rotate(0 3.92 38.6)"/><ellipse cx="3.52" cy="42.8" rx="2.3" ry="1.8" fill="#a21a2e" transform="rotate(20 3.52 42.8)"/><ellipse cx="4.37" cy="43.7" rx="1.2" ry="1" fill="#7e1424" transform="rotate(0 4.37 43.7)"/><ellipse cx="1.19" cy="44.7" rx="1.2" ry="0.7" fill="#55703c" transform="rotate(25 1.19 44.7)"/><ellipse cx="-2.79" cy="41.8" rx="1" ry="0.9" fill="#ebe4cf" transform="rotate(0 -2.79 41.8)"/><ellipse cx="-3.34" cy="47.4" rx="1.7" ry="2.2" fill="#bb2a66" transform="rotate(-10 -3.34 47.4)"/><ellipse cx="-1.23" cy="51.3" rx="1.4" ry="1" fill="#ebe4cf" transform="rotate(20 -1.23 51.3)"/><ellipse cx="2.07" cy="49.6" rx="1.1" ry="0.6" fill="#55703c" transform="rotate(-30 2.07 49.6)"/><ellipse cx="4.88" cy="50.9" rx="1" ry="1.2" fill="#ebe4cf" transform="rotate(0 4.88 50.9)"/><ellipse cx="1.77" cy="54.2" rx="1.1" ry="0.8" fill="#ebe4cf" transform="rotate(-15 1.77 54.2)"/><ellipse cx="-3.04" cy="54.6" rx="0.9" ry="0.6" fill="#55703c" transform="rotate(20 -3.04 54.6)"/><ellipse cx="-1.39" cy="59.6" rx="2.6" ry="2.2" fill="#bb2a66" transform="rotate(15 -1.39 59.6)"/><ellipse cx="-0.54" cy="60.4" rx="1.3" ry="1.1" fill="#9a1f55" transform="rotate(0 -0.54 60.4)"/><ellipse cx="4.31" cy="58" rx="1" ry="1.3" fill="#ebe4cf" transform="rotate(0 4.31 58)"/><ellipse cx="3.13" cy="62.6" rx="1.1" ry="0.6" fill="#55703c" transform="rotate(30 3.13 62.6)"/><ellipse cx="-3.67" cy="64.6" rx="0.9" ry="0.8" fill="#ebe4cf" transform="rotate(0 -3.67 64.6)"/><ellipse cx="2.62" cy="66.6" rx="1.4" ry="1" fill="#ebe4cf" transform="rotate(-20 2.62 66.6)"/><ellipse cx="-2.06" cy="71.6" rx="2.2" ry="2" fill="#bb2a66" transform="rotate(-15 -2.06 71.6)"/><ellipse cx="1.46" cy="70" rx="1" ry="0.6" fill="#55703c" transform="rotate(-25 1.46 70)"/><ellipse cx="4.03" cy="72.6" rx="0.9" ry="1.1" fill="#ebe4cf" transform="rotate(0 4.03 72.6)"/><ellipse cx="-3.9" cy="76" rx="0.9" ry="0.5" fill="#55703c" transform="rotate(20 -3.9 76)"/><ellipse cx="1.1" cy="77" rx="1.1" ry="0.8" fill="#ebe4cf" transform="rotate(10 1.1 77)"/><ellipse cx="2.1" cy="82" rx="2.3" ry="2" fill="#bb2a66" transform="rotate(20 2.1 82)"/><ellipse cx="1.21" cy="82.7" rx="1.1" ry="1" fill="#9a1f55" transform="rotate(0 1.21 82.7)"/><ellipse cx="-3.12" cy="81" rx="1" ry="0.9" fill="#ebe4cf" transform="rotate(0 -3.12 81)"/><ellipse cx="4.34" cy="79" rx="0.9" ry="0.5" fill="#55703c" transform="rotate(-30 4.34 79)"/><ellipse cx="-2.36" cy="86.6" rx="1.2" ry="0.9" fill="#ebe4cf" transform="rotate(15 -2.36 86.6)"/><ellipse cx="3.08" cy="87.6" rx="1" ry="0.8" fill="#ebe4cf" transform="rotate(0 3.08 87.6)"/><ellipse cx="-0.21" cy="88.6" rx="0.9" ry="0.5" fill="#55703c" transform="rotate(0 -0.21 88.6)"/><path d="M-0.25,14.6 l2.2,1.6 l2.2,-1.6 l0.5,3 h-5.4z" fill="#a21a2e"/><path d="M10.74,21 L12.6,33.5" fill="none" stroke="#d79c80" stroke-linecap="round" stroke-width="4.3"/><path d="M-7.66,21 L-10,33.5" fill="none" stroke="#e5b29a" stroke-linecap="round" stroke-width="4.3"/><ellipse cx="10.54" cy="21.4" rx="2.6" ry="3.6" fill="#ad9654"/><ellipse cx="-7.46" cy="21.4" rx="2.4" ry="3.4" fill="#ad9654"/><ellipse cx="10.84" cy="21.6" rx="2.0" ry="2.9" fill="#8f2233"/><ellipse cx="-7.46" cy="21.0" rx="1.4" ry="2.0" fill="#963040"/><path d="M12.6,33.5 L2.25,36" fill="none" stroke="#d79c80" stroke-linecap="round" stroke-width="3.5"/><ellipse cx="2.25" cy="36" rx="2" ry="2.3" fill="#d79c80"/><path d="M-10,33.5 L0.25,36" fill="none" stroke="#e5b29a" stroke-linecap="round" stroke-width="3.5"/><ellipse cx="0.25" cy="36" rx="2" ry="2.3" fill="#e5b29a"/><ellipse cx="1.95" cy="5.4" rx="5.3" ry="5.4" fill="#2b2224"/><ellipse cx="2.15" cy="9.3" rx="3.7" ry="4.7" fill="#e5b29a"/><ellipse cx="2.05" cy="3.8" rx="4.5" ry="3.0" fill="#2b2224"/><ellipse cx="-1.95" cy="6.6" rx="1.0" ry="2.6" fill="#2b2224"/><ellipse cx="6.05" cy="6.6" rx="1.0" ry="2.6" fill="#2b2224"/><ellipse cx="2.15" cy="11.6" rx="1.0" ry="0.45" fill="#b3202e"/><ellipse cx="0.65" cy="8.7" rx="0.8" ry="0.4" fill="#4a2e2a" opacity="0.8"/><ellipse cx="3.75" cy="8.7" rx="0.8" ry="0.4" fill="#4a2e2a" opacity="0.8"/></g></g><rect x="0.5" y="0.5" width="93" height="143" fill="none" stroke="#ffffff" stroke-opacity="0.45"/></svg></div>
<div class="t b" style="left:864px;top:216px"><svg width="94" height="144" viewBox="0 0 94 144"><rect width="94" height="144" fill="url(#bg)"/><rect width="94" height="144" fill="url(#vg)"/><rect width="94" height="144" fill="url(#hg)"/><ellipse cx="45" cy="138.57" rx="13.3" ry="2.39" fill="#cbc6ce" opacity="0.5" filter="url(#soft2)"/><g filter="url(#soft)"><g transform="translate(43 8.5) scale(1.33)"><path d="M-4.4,91 L-2.2,91 L-2.3,95 L-4.5,95Z M2,91 L4.2,91 L4.1,94.6 L1.9,94.6Z" fill="#d79c80"/><path d="M-4.7,94.2 L-2,94.2 L-2.4,99.3 L-4.6,99.3Z M1.7,93.8 L4.4,93.8 L4.3,98.5 L2,98.5Z" fill="#b3142b"/><rect x="-0.65" y="12" width="4" height="7" fill="#d79c80"/><polygon points="-0.95,16.8 -7.7,18.4 -8.94,21.5 -6.81,27 -6.41,34.5 -8.23,43 -7.78,91.5 8.02,91.5 9.77,43 8.19,34.5 8.79,27 11.06,21.5 9.9,18.4 3.65,16.8" fill="#ad9654" stroke="#ad9654" stroke-width="0.8" stroke-linejoin="round"/><polygon points="4.5,27 4.17,34.5 4.82,43 3.67,91.5 8.02,91.5 9.77,43 8.19,34.5 8.79,27" fill="#927a3e" opacity="0.32"/><polygon points="-0.95,16.8 -7.7,18.4 -8.94,21.5 -6.81,27 -6.41,34.5 -8.23,43 -7.78,91.5 8.02,91.5 9.77,43 8.19,34.5 8.79,27 11.06,21.5 9.9,18.4 3.65,16.8" fill="url(#fl)" opacity="0.85"/><ellipse cx="-1.81" cy="24.3" rx="2.6" ry="2" fill="#a21a2e" transform="rotate(-20 -1.81 24.3)"/><ellipse cx="-0.63" cy="25.3" rx="1.3" ry="1.1" fill="#7e1424" transform="rotate(0 -0.63 25.3)"/><ellipse cx="2.02" cy="23" rx="1.5" ry="1.1" fill="#a21a2e" transform="rotate(15 2.02 23)"/><ellipse cx="2.63" cy="26.6" rx="1.3" ry="0.7" fill="#55703c" transform="rotate(30 2.63 26.6)"/><ellipse cx="-3.7" cy="26.9" rx="1.1" ry="0.6" fill="#55703c" transform="rotate(-30 -3.7 26.9)"/><ellipse cx="4.23" cy="28.9" rx="1.5" ry="1.9" fill="#bb2a66" transform="rotate(10 4.23 28.9)"/><ellipse cx="2.25" cy="30.8" rx="1" ry="0.6" fill="#55703c" transform="rotate(0 2.25 30.8)"/><ellipse cx="-1.89" cy="30.2" rx="0.9" ry="0.7" fill="#ebe4cf" transform="rotate(0 -1.89 30.2)"/><ellipse cx="5.2" cy="22.2" rx="0.9" ry="0.5" fill="#55703c" transform="rotate(-20 5.2 22.2)"/><ellipse cx="-1.11" cy="37.2" rx="1" ry="0.8" fill="#ebe4cf" transform="rotate(0 -1.11 37.2)"/><ellipse cx="3.56" cy="38.6" rx="0.8" ry="0.7" fill="#ebe4cf" transform="rotate(0 3.56 38.6)"/><ellipse cx="3.17" cy="42.8" rx="2.3" ry="1.8" fill="#a21a2e" transform="rotate(20 3.17 42.8)"/><ellipse cx="4.03" cy="43.7" rx="1.2" ry="1" fill="#7e1424" transform="rotate(0 4.03 43.7)"/><ellipse cx="0.86" cy="44.7" rx="1.2" ry="0.7" fill="#55703c" transform="rotate(25 0.86 44.7)"/><ellipse cx="-3.14" cy="41.8" rx="1" ry="0.9" fill="#ebe4cf" transform="rotate(0 -3.14 41.8)"/><ellipse cx="-3.65" cy="47.4" rx="1.7" ry="2.2" fill="#bb2a66" transform="rotate(-10 -3.65 47.4)"/><ellipse cx="-1.52" cy="51.3" rx="1.4" ry="1" fill="#ebe4cf" transform="rotate(20 -1.52 51.3)"/><ellipse cx="1.77" cy="49.6" rx="1.1" ry="0.6" fill="#55703c" transform="rotate(-30 1.77 49.6)"/><ellipse cx="4.59" cy="50.9" rx="1" ry="1.2" fill="#ebe4cf" transform="rotate(0 4.59 50.9)"/><ellipse cx="1.49" cy="54.2" rx="1.1" ry="0.8" fill="#ebe4cf" transform="rotate(-15 1.49 54.2)"/><ellipse cx="-3.31" cy="54.6" rx="0.9" ry="0.6" fill="#55703c" transform="rotate(20 -3.31 54.6)"/><ellipse cx="-1.64" cy="59.6" rx="2.6" ry="2.2" fill="#bb2a66" transform="rotate(15 -1.64 59.6)"/><ellipse cx="-0.77" cy="60.4" rx="1.3" ry="1.1" fill="#9a1f55" transform="rotate(0 -0.77 60.4)"/><ellipse cx="4.06" cy="58" rx="1" ry="1.3" fill="#ebe4cf" transform="rotate(0 4.06 58)"/><ellipse cx="2.91" cy="62.6" rx="1.1" ry="0.6" fill="#55703c" transform="rotate(30 2.91 62.6)"/><ellipse cx="-3.88" cy="64.6" rx="0.9" ry="0.8" fill="#ebe4cf" transform="rotate(0 -3.88 64.6)"/><ellipse cx="2.42" cy="66.6" rx="1.4" ry="1" fill="#ebe4cf" transform="rotate(-20 2.42 66.6)"/><ellipse cx="-2.23" cy="71.6" rx="2.2" ry="2" fill="#bb2a66" transform="rotate(-15 -2.23 71.6)"/><ellipse cx="1.28" cy="70" rx="1" ry="0.6" fill="#55703c" transform="rotate(-25 1.28 70)"/><ellipse cx="3.86" cy="72.6" rx="0.9" ry="1.1" fill="#ebe4cf" transform="rotate(0 3.86 72.6)"/><ellipse cx="-4.04" cy="76" rx="0.9" ry="0.5" fill="#55703c" transform="rotate(20 -4.04 76)"/><ellipse cx="0.97" cy="77" rx="1.1" ry="0.8" fill="#ebe4cf" transform="rotate(10 0.97 77)"/><ellipse cx="1.99" cy="82" rx="2.3" ry="2" fill="#bb2a66" transform="rotate(20 1.99 82)"/><ellipse cx="1.11" cy="82.7" rx="1.1" ry="1" fill="#9a1f55" transform="rotate(0 1.11 82.7)"/><ellipse cx="-3.23" cy="81" rx="1" ry="0.9" fill="#ebe4cf" transform="rotate(0 -3.23 81)"/><ellipse cx="4.21" cy="79" rx="0.9" ry="0.5" fill="#55703c" transform="rotate(-30 4.21 79)"/><ellipse cx="-2.44" cy="86.6" rx="1.2" ry="0.9" fill="#ebe4cf" transform="rotate(15 -2.44 86.6)"/><ellipse cx="3" cy="87.6" rx="1" ry="0.8" fill="#ebe4cf" transform="rotate(0 3 87.6)"/><ellipse cx="-0.28" cy="88.6" rx="0.9" ry="0.5" fill="#55703c" transform="rotate(0 -0.28 88.6)"/><path d="M-0.85,14.6 l2.2,1.6 l2.2,-1.6 l0.5,3 h-5.4z" fill="#a21a2e"/><path d="M10.27,21 L12.2,33.5" fill="none" stroke="#d79c80" stroke-linecap="round" stroke-width="4.3"/><path d="M-8.13,21 L-10.4,33.5" fill="none" stroke="#e5b29a" stroke-linecap="round" stroke-width="4.3"/><ellipse cx="10.07" cy="21.4" rx="2.6" ry="3.6" fill="#ad9654"/><ellipse cx="-7.93" cy="21.4" rx="2.4" ry="3.4" fill="#ad9654"/><ellipse cx="10.37" cy="21.6" rx="2.0" ry="2.9" fill="#8f2233"/><ellipse cx="-7.93" cy="21.0" rx="1.4" ry="2.0" fill="#963040"/><path d="M12.2,33.5 L1.87,36" fill="none" stroke="#d79c80" stroke-linecap="round" stroke-width="3.5"/><ellipse cx="1.87" cy="36" rx="2" ry="2.3" fill="#d79c80"/><path d="M-10.4,33.5 L-0.13,36" fill="none" stroke="#e5b29a" stroke-linecap="round" stroke-width="3.5"/><ellipse cx="-0.13" cy="36" rx="2" ry="2.3" fill="#e5b29a"/><ellipse cx="1.35" cy="5.4" rx="5.3" ry="5.4" fill="#2b2224"/><ellipse cx="1.55" cy="9.3" rx="3.7" ry="4.7" fill="#e5b29a"/><ellipse cx="1.45" cy="3.8" rx="4.5" ry="3.0" fill="#2b2224"/><ellipse cx="-2.55" cy="6.6" rx="1.0" ry="2.6" fill="#2b2224"/><ellipse cx="5.45" cy="6.6" rx="1.0" ry="2.6" fill="#2b2224"/><ellipse cx="1.55" cy="11.6" rx="1.0" ry="0.45" fill="#b3202e"/><ellipse cx="0.05" cy="8.7" rx="0.8" ry="0.4" fill="#4a2e2a" opacity="0.8"/><ellipse cx="3.15" cy="8.7" rx="0.8" ry="0.4" fill="#4a2e2a" opacity="0.8"/></g></g><rect x="0.5" y="0.5" width="93" height="143" fill="none" stroke="#ffffff" stroke-opacity="0.45"/></svg></div>
<div class="t b" style="left:1030px;top:216px"><svg width="94" height="144" viewBox="0 0 94 144"><rect width="94" height="144" fill="url(#bg)"/><rect width="94" height="144" fill="url(#vg)"/><rect width="94" height="144" fill="url(#hg)"/><g filter="url(#soft)"><g transform="translate(50 5.6) scale(2.39)"><rect x="-2.46" y="12" width="4" height="7" fill="#d79c80"/><polygon points="-2.76,16.8 -9.09,18.4 -10.26,21.5 -8.01,27 -7.44,34.5 -9.06,43 -7.52,91.5 8.28,91.5 8.94,43 7.16,34.5 7.59,27 9.74,21.5 8.51,18.4 1.84,16.8" fill="#ad9654" stroke="#ad9654" stroke-width="0.8" stroke-linejoin="round"/><polygon points="3.3,27 3.14,34.5 3.99,43 3.94,91.5 8.28,91.5 8.94,43 7.16,34.5 7.59,27" fill="#927a3e" opacity="0.32"/><polygon points="-2.76,16.8 -9.09,18.4 -10.26,21.5 -8.01,27 -7.44,34.5 -9.06,43 -7.52,91.5 8.28,91.5 8.94,43 7.16,34.5 7.59,27 9.74,21.5 8.51,18.4 1.84,16.8" fill="url(#fl)" opacity="0.85"/><ellipse cx="-3.07" cy="24.3" rx="2.6" ry="2" fill="#a21a2e" transform="rotate(-20 -3.07 24.3)"/><ellipse cx="-1.86" cy="25.3" rx="1.3" ry="1.1" fill="#7e1424" transform="rotate(0 -1.86 25.3)"/><ellipse cx="0.73" cy="23" rx="1.5" ry="1.1" fill="#a21a2e" transform="rotate(15 0.73 23)"/><ellipse cx="1.42" cy="26.6" rx="1.3" ry="0.7" fill="#55703c" transform="rotate(30 1.42 26.6)"/><ellipse cx="-4.9" cy="26.9" rx="1.1" ry="0.6" fill="#55703c" transform="rotate(-30 -4.9 26.9)"/><ellipse cx="3.08" cy="28.9" rx="1.5" ry="1.9" fill="#bb2a66" transform="rotate(10 3.08 28.9)"/><ellipse cx="1.13" cy="30.8" rx="1" ry="0.6" fill="#55703c" transform="rotate(0 1.13 30.8)"/><ellipse cx="-3.02" cy="30.2" rx="0.9" ry="0.7" fill="#ebe4cf" transform="rotate(0 -3.02 30.2)"/><ellipse cx="3.89" cy="22.2" rx="0.9" ry="0.5" fill="#55703c" transform="rotate(-20 3.89 22.2)"/><ellipse cx="-2.08" cy="37.2" rx="1" ry="0.8" fill="#ebe4cf" transform="rotate(0 -2.08 37.2)"/><ellipse cx="2.62" cy="38.6" rx="0.8" ry="0.7" fill="#ebe4cf" transform="rotate(0 2.62 38.6)"/><ellipse cx="2.33" cy="42.8" rx="2.3" ry="1.8" fill="#a21a2e" transform="rotate(20 2.33 42.8)"/><ellipse cx="3.21" cy="43.7" rx="1.2" ry="1" fill="#7e1424" transform="rotate(0 3.21 43.7)"/><ellipse cx="0.06" cy="44.7" rx="1.2" ry="0.7" fill="#55703c" transform="rotate(25 0.06 44.7)"/><ellipse cx="-4" cy="41.8" rx="1" ry="0.9" fill="#ebe4cf" transform="rotate(0 -4 41.8)"/><ellipse cx="-4.39" cy="47.4" rx="1.7" ry="2.2" fill="#bb2a66" transform="rotate(-10 -4.39 47.4)"/><ellipse cx="-2.17" cy="51.3" rx="1.4" ry="1" fill="#ebe4cf" transform="rotate(20 -2.17 51.3)"/><ellipse cx="1.09" cy="49.6" rx="1.1" ry="0.6" fill="#55703c" transform="rotate(-30 1.09 49.6)"/><ellipse cx="3.94" cy="50.9" rx="1" ry="1.2" fill="#ebe4cf" transform="rotate(0 3.94 50.9)"/><ellipse cx="0.91" cy="54.2" rx="1.1" ry="0.8" fill="#ebe4cf" transform="rotate(-15 0.91 54.2)"/><ellipse cx="-3.88" cy="54.6" rx="0.9" ry="0.6" fill="#55703c" transform="rotate(20 -3.88 54.6)"/><ellipse cx="-2.09" cy="59.6" rx="2.6" ry="2.2" fill="#bb2a66" transform="rotate(15 -2.09 59.6)"/><ellipse cx="-1.21" cy="60.4" rx="1.3" ry="1.1" fill="#9a1f55" transform="rotate(0 -1.21 60.4)"/><ellipse cx="3.56" cy="58" rx="1" ry="1.3" fill="#ebe4cf" transform="rotate(0 3.56 58)"/><ellipse cx="2.52" cy="62.6" rx="1.1" ry="0.6" fill="#55703c" transform="rotate(30 2.52 62.6)"/><path d="M-2.66,14.6 l2.2,1.6 l2.2,-1.6 l0.5,3 h-5.4z" fill="#a21a2e"/><path d="M8.93,21 L11.15,33.5" fill="none" stroke="#d79c80" stroke-linecap="round" stroke-width="4.3"/><path d="M-9.47,21 L-11.45,33.5" fill="none" stroke="#e5b29a" stroke-linecap="round" stroke-width="4.3"/><ellipse cx="8.73" cy="21.4" rx="2.6" ry="3.6" fill="#ad9654"/><ellipse cx="-9.27" cy="21.4" rx="2.4" ry="3.4" fill="#ad9654"/><ellipse cx="9.03" cy="21.6" rx="2.0" ry="2.9" fill="#8f2233"/><ellipse cx="-9.27" cy="21.0" rx="1.4" ry="2.0" fill="#963040"/><path d="M11.15,33.5 L0.87,36" fill="none" stroke="#d79c80" stroke-linecap="round" stroke-width="3.5"/><ellipse cx="0.87" cy="36" rx="2" ry="2.3" fill="#d79c80"/><path d="M-11.45,33.5 L-1.13,36" fill="none" stroke="#e5b29a" stroke-linecap="round" stroke-width="3.5"/><ellipse cx="-1.13" cy="36" rx="2" ry="2.3" fill="#e5b29a"/><ellipse cx="-0.46" cy="5.4" rx="5.3" ry="5.4" fill="#2b2224"/><ellipse cx="-0.26" cy="9.3" rx="3.7" ry="4.7" fill="#e5b29a"/><ellipse cx="-0.36" cy="3.8" rx="4.5" ry="3.0" fill="#2b2224"/><ellipse cx="-4.36" cy="6.6" rx="1.0" ry="2.6" fill="#2b2224"/><ellipse cx="3.64" cy="6.6" rx="1.0" ry="2.6" fill="#2b2224"/><ellipse cx="-0.26" cy="11.6" rx="1.0" ry="0.45" fill="#b3202e"/><ellipse cx="-1.76" cy="8.7" rx="0.8" ry="0.4" fill="#4a2e2a" opacity="0.8"/><ellipse cx="1.34" cy="8.7" rx="0.8" ry="0.4" fill="#4a2e2a" opacity="0.8"/></g></g><rect x="0.5" y="0.5" width="93" height="143" fill="none" stroke="#ffffff" stroke-opacity="0.45"/></svg></div>
<div class="t b" style="left:1196px;top:216px"><svg width="94" height="144" viewBox="0 0 94 144"><rect width="94" height="144" fill="url(#bg)"/><rect width="94" height="144" fill="url(#vg)"/><rect width="94" height="144" fill="url(#hg)"/><g filter="url(#soft)"><g transform="translate(47.5 4.6) scale(2.57)"><rect x="-1.14" y="12" width="4" height="7" fill="#d79c80"/><polygon points="-1.44,16.8 -8.26,18.4 -9.51,21.5 -7.41,27 -7.03,34.5 -8.88,43 -8.61,91.5 7.19,91.5 9.12,43 7.57,34.5 8.19,27 10.49,21.5 9.34,18.4 3.16,16.8" fill="#ad9654" stroke="#ad9654" stroke-width="0.8" stroke-linejoin="round"/><polygon points="3.9,27 3.55,34.5 4.17,43 2.84,91.5 7.19,91.5 9.12,43 7.57,34.5 8.19,27" fill="#927a3e" opacity="0.32"/><polygon points="-1.44,16.8 -8.26,18.4 -9.51,21.5 -7.41,27 -7.03,34.5 -8.88,43 -8.61,91.5 7.19,91.5 9.12,43 7.57,34.5 8.19,27 10.49,21.5 9.34,18.4 3.16,16.8" fill="url(#fl)" opacity="0.85"/><ellipse cx="-2.4" cy="24.3" rx="2.6" ry="2" fill="#a21a2e" transform="rotate(-20 -2.4 24.3)"/><ellipse cx="-1.21" cy="25.3" rx="1.3" ry="1.1" fill="#7e1424" transform="rotate(0 -1.21 25.3)"/><ellipse cx="1.44" cy="23" rx="1.5" ry="1.1" fill="#a21a2e" transform="rotate(15 1.44 23)"/><ellipse cx="2.04" cy="26.6" rx="1.3" ry="0.7" fill="#55703c" transform="rotate(30 2.04 26.6)"/><ellipse cx="-4.3" cy="26.9" rx="1.1" ry="0.6" fill="#55703c" transform="rotate(-30 -4.3 26.9)"/><ellipse cx="3.63" cy="28.9" rx="1.5" ry="1.9" fill="#bb2a66" transform="rotate(10 3.63 28.9)"/><ellipse cx="1.64" cy="30.8" rx="1" ry="0.6" fill="#55703c" transform="rotate(0 1.64 30.8)"/><ellipse cx="-2.5" cy="30.2" rx="0.9" ry="0.7" fill="#ebe4cf" transform="rotate(0 -2.5 30.2)"/><ellipse cx="4.62" cy="22.2" rx="0.9" ry="0.5" fill="#55703c" transform="rotate(-20 4.62 22.2)"/><ellipse cx="-1.74" cy="37.2" rx="1" ry="0.8" fill="#ebe4cf" transform="rotate(0 -1.74 37.2)"/><ellipse cx="2.92" cy="38.6" rx="0.8" ry="0.7" fill="#ebe4cf" transform="rotate(0 2.92 38.6)"/><ellipse cx="2.52" cy="42.8" rx="2.3" ry="1.8" fill="#a21a2e" transform="rotate(20 2.52 42.8)"/><ellipse cx="3.38" cy="43.7" rx="1.2" ry="1" fill="#7e1424" transform="rotate(0 3.38 43.7)"/><ellipse cx="0.2" cy="44.7" rx="1.2" ry="0.7" fill="#55703c" transform="rotate(25 0.2 44.7)"/><ellipse cx="-3.79" cy="41.8" rx="1" ry="0.9" fill="#ebe4cf" transform="rotate(0 -3.79 41.8)"/><ellipse cx="-4.32" cy="47.4" rx="1.7" ry="2.2" fill="#bb2a66" transform="rotate(-10 -4.32 47.4)"/><ellipse cx="-2.2" cy="51.3" rx="1.4" ry="1" fill="#ebe4cf" transform="rotate(20 -2.2 51.3)"/><ellipse cx="1.1" cy="49.6" rx="1.1" ry="0.6" fill="#55703c" transform="rotate(-30 1.1 49.6)"/><ellipse cx="3.91" cy="50.9" rx="1" ry="1.2" fill="#ebe4cf" transform="rotate(0 3.91 50.9)"/><ellipse cx="0.8" cy="54.2" rx="1.1" ry="0.8" fill="#ebe4cf" transform="rotate(-15 0.8 54.2)"/><ellipse cx="-4.01" cy="54.6" rx="0.9" ry="0.6" fill="#55703c" transform="rotate(20 -4.01 54.6)"/><ellipse cx="3.35" cy="58" rx="1" ry="1.3" fill="#ebe4cf" transform="rotate(0 3.35 58)"/><path d="M-1.34,14.6 l2.2,1.6 l2.2,-1.6 l0.5,3 h-5.4z" fill="#a21a2e"/><path d="M9.7,21 L11.58,33.5" fill="none" stroke="#d79c80" stroke-linecap="round" stroke-width="4.3"/><path d="M-8.7,21 L-11.02,33.5" fill="none" stroke="#e5b29a" stroke-linecap="round" stroke-width="4.3"/><ellipse cx="9.5" cy="21.4" rx="2.6" ry="3.6" fill="#ad9654"/><ellipse cx="-8.5" cy="21.4" rx="2.4" ry="3.4" fill="#ad9654"/><ellipse cx="9.8" cy="21.6" rx="2.0" ry="2.9" fill="#8f2233"/><ellipse cx="-8.5" cy="21.0" rx="1.4" ry="2.0" fill="#963040"/><path d="M11.58,33.5 L1.24,36" fill="none" stroke="#d79c80" stroke-linecap="round" stroke-width="3.5"/><ellipse cx="1.24" cy="36" rx="2" ry="2.3" fill="#d79c80"/><path d="M-11.02,33.5 L-0.76,36" fill="none" stroke="#e5b29a" stroke-linecap="round" stroke-width="3.5"/><ellipse cx="-0.76" cy="36" rx="2" ry="2.3" fill="#e5b29a"/><ellipse cx="0.86" cy="5.4" rx="5.3" ry="5.4" fill="#2b2224"/><ellipse cx="1.06" cy="9.3" rx="3.7" ry="4.7" fill="#e5b29a"/><ellipse cx="0.96" cy="3.8" rx="4.5" ry="3.0" fill="#2b2224"/><ellipse cx="-3.04" cy="6.6" rx="1.0" ry="2.6" fill="#2b2224"/><ellipse cx="4.96" cy="6.6" rx="1.0" ry="2.6" fill="#2b2224"/><ellipse cx="1.06" cy="11.6" rx="1.0" ry="0.45" fill="#b3202e"/><ellipse cx="-0.44" cy="8.7" rx="0.8" ry="0.4" fill="#4a2e2a" opacity="0.8"/><ellipse cx="2.66" cy="8.7" rx="0.8" ry="0.4" fill="#4a2e2a" opacity="0.8"/></g></g><rect x="0.5" y="0.5" width="93" height="143" fill="none" stroke="#ffffff" stroke-opacity="0.45"/></svg></div>
<div class="t b" style="left:1362px;top:216px"><svg width="94" height="144" viewBox="0 0 94 144"><rect width="94" height="144" fill="url(#bg)"/><rect width="94" height="144" fill="url(#vg)"/><rect width="94" height="144" fill="url(#hg)"/><ellipse cx="45.3" cy="140.11" rx="14.06" ry="2.53" fill="#cbc6ce" opacity="0.5" filter="url(#soft2)"/><g filter="url(#soft)"><g transform="translate(43.3 2.6) scale(1.41)"><path d="M-4.4,91 L-2.2,91 L-2.3,95 L-4.5,95Z M2,91 L4.2,91 L4.1,94.6 L1.9,94.6Z" fill="#d79c80"/><path d="M-4.7,94.2 L-2,94.2 L-2.4,99.3 L-4.6,99.3Z M1.7,93.8 L4.4,93.8 L4.3,98.5 L2,98.5Z" fill="#b3142b"/><rect x="-0.86" y="12" width="4" height="7" fill="#d79c80"/><polygon points="-1.16,16.8 -7.87,18.4 -9.11,21.5 -6.97,27 -6.55,34.5 -8.35,43 -7.8,91.5 8,91.5 9.65,43 8.05,34.5 8.63,27 10.89,21.5 9.73,18.4 3.44,16.8" fill="#ad9654" stroke="#ad9654" stroke-width="0.8" stroke-linejoin="round"/><polygon points="4.34,27 4.03,34.5 4.7,43 3.65,91.5 8,91.5 9.65,43 8.05,34.5 8.63,27" fill="#927a3e" opacity="0.32"/><polygon points="-1.16,16.8 -7.87,18.4 -9.11,21.5 -6.97,27 -6.55,34.5 -8.35,43 -7.8,91.5 8,91.5 9.65,43 8.05,34.5 8.63,27 10.89,21.5 9.73,18.4 3.44,16.8" fill="url(#fl)" opacity="0.85"/><ellipse cx="-1.97" cy="24.3" rx="2.6" ry="2" fill="#a21a2e" transform="rotate(-20 -1.97 24.3)"/><ellipse cx="-0.79" cy="25.3" rx="1.3" ry="1.1" fill="#7e1424" transform="rotate(0 -0.79 25.3)"/><ellipse cx="1.86" cy="23" rx="1.5" ry="1.1" fill="#a21a2e" transform="rotate(15 1.86 23)"/><ellipse cx="2.47" cy="26.6" rx="1.3" ry="0.7" fill="#55703c" transform="rotate(30 2.47 26.6)"/><ellipse cx="-3.86" cy="26.9" rx="1.1" ry="0.6" fill="#55703c" transform="rotate(-30 -3.86 26.9)"/><ellipse cx="4.08" cy="28.9" rx="1.5" ry="1.9" fill="#bb2a66" transform="rotate(10 4.08 28.9)"/><ellipse cx="2.1" cy="30.8" rx="1" ry="0.6" fill="#55703c" transform="rotate(0 2.1 30.8)"/><ellipse cx="-2.04" cy="30.2" rx="0.9" ry="0.7" fill="#ebe4cf" transform="rotate(0 -2.04 30.2)"/><ellipse cx="5.03" cy="22.2" rx="0.9" ry="0.5" fill="#55703c" transform="rotate(-20 5.03 22.2)"/><ellipse cx="-1.25" cy="37.2" rx="1" ry="0.8" fill="#ebe4cf" transform="rotate(0 -1.25 37.2)"/><ellipse cx="3.43" cy="38.6" rx="0.8" ry="0.7" fill="#ebe4cf" transform="rotate(0 3.43 38.6)"/><ellipse cx="3.05" cy="42.8" rx="2.3" ry="1.8" fill="#a21a2e" transform="rotate(20 3.05 42.8)"/><ellipse cx="3.91" cy="43.7" rx="1.2" ry="1" fill="#7e1424" transform="rotate(0 3.91 43.7)"/><ellipse cx="0.74" cy="44.7" rx="1.2" ry="0.7" fill="#55703c" transform="rotate(25 0.74 44.7)"/><ellipse cx="-3.26" cy="41.8" rx="1" ry="0.9" fill="#ebe4cf" transform="rotate(0 -3.26 41.8)"/><ellipse cx="-3.77" cy="47.4" rx="1.7" ry="2.2" fill="#bb2a66" transform="rotate(-10 -3.77 47.4)"/><ellipse cx="-1.63" cy="51.3" rx="1.4" ry="1" fill="#ebe4cf" transform="rotate(20 -1.63 51.3)"/><ellipse cx="1.66" cy="49.6" rx="1.1" ry="0.6" fill="#55703c" transform="rotate(-30 1.66 49.6)"/><ellipse cx="4.49" cy="50.9" rx="1" ry="1.2" fill="#ebe4cf" transform="rotate(0 4.49 50.9)"/><ellipse cx="1.39" cy="54.2" rx="1.1" ry="0.8" fill="#ebe4cf" transform="rotate(-15 1.39 54.2)"/><ellipse cx="-3.41" cy="54.6" rx="0.9" ry="0.6" fill="#55703c" transform="rotate(20 -3.41 54.6)"/><ellipse cx="-1.72" cy="59.6" rx="2.6" ry="2.2" fill="#bb2a66" transform="rotate(15 -1.72 59.6)"/><ellipse cx="-0.86" cy="60.4" rx="1.3" ry="1.1" fill="#9a1f55" transform="rotate(0 -0.86 60.4)"/><ellipse cx="3.97" cy="58" rx="1" ry="1.3" fill="#ebe4cf" transform="rotate(0 3.97 58)"/><ellipse cx="2.83" cy="62.6" rx="1.1" ry="0.6" fill="#55703c" transform="rotate(30 2.83 62.6)"/><ellipse cx="-3.96" cy="64.6" rx="0.9" ry="0.8" fill="#ebe4cf" transform="rotate(0 -3.96 64.6)"/><ellipse cx="2.34" cy="66.6" rx="1.4" ry="1" fill="#ebe4cf" transform="rotate(-20 2.34 66.6)"/><ellipse cx="-2.29" cy="71.6" rx="2.2" ry="2" fill="#bb2a66" transform="rotate(-15 -2.29 71.6)"/><ellipse cx="1.21" cy="70" rx="1" ry="0.6" fill="#55703c" transform="rotate(-25 1.21 70)"/><ellipse cx="3.8" cy="72.6" rx="0.9" ry="1.1" fill="#ebe4cf" transform="rotate(0 3.8 72.6)"/><ellipse cx="-4.09" cy="76" rx="0.9" ry="0.5" fill="#55703c" transform="rotate(20 -4.09 76)"/><ellipse cx="0.92" cy="77" rx="1.1" ry="0.8" fill="#ebe4cf" transform="rotate(10 0.92 77)"/><ellipse cx="1.95" cy="82" rx="2.3" ry="2" fill="#bb2a66" transform="rotate(20 1.95 82)"/><ellipse cx="1.07" cy="82.7" rx="1.1" ry="1" fill="#9a1f55" transform="rotate(0 1.07 82.7)"/><ellipse cx="-3.27" cy="81" rx="1" ry="0.9" fill="#ebe4cf" transform="rotate(0 -3.27 81)"/><ellipse cx="4.17" cy="79" rx="0.9" ry="0.5" fill="#55703c" transform="rotate(-30 4.17 79)"/><ellipse cx="-2.47" cy="86.6" rx="1.2" ry="0.9" fill="#ebe4cf" transform="rotate(15 -2.47 86.6)"/><ellipse cx="2.98" cy="87.6" rx="1" ry="0.8" fill="#ebe4cf" transform="rotate(0 2.98 87.6)"/><ellipse cx="-0.31" cy="88.6" rx="0.9" ry="0.5" fill="#55703c" transform="rotate(0 -0.31 88.6)"/><path d="M-1.06,14.6 l2.2,1.6 l2.2,-1.6 l0.5,3 h-5.4z" fill="#a21a2e"/><path d="M10.1,21 L18.76,33" fill="none" stroke="#d79c80" stroke-linecap="round" stroke-width="4.3"/><path d="M-8.3,21 L-9.76,35" fill="none" stroke="#e5b29a" stroke-linecap="round" stroke-width="4.3"/><ellipse cx="9.9" cy="21.4" rx="2.6" ry="3.6" fill="#ad9654"/><ellipse cx="-8.1" cy="21.4" rx="2.4" ry="3.4" fill="#ad9654"/><ellipse cx="10.2" cy="21.6" rx="2.0" ry="2.9" fill="#8f2233"/><ellipse cx="-8.1" cy="21.0" rx="1.4" ry="2.0" fill="#963040"/><path d="M18.76,33 L9.66,42" fill="none" stroke="#d79c80" stroke-linecap="round" stroke-width="3.5"/><ellipse cx="9.66" cy="42" rx="2" ry="2.3" fill="#d79c80"/><path d="M-9.76,35 L-9.41,48.5" fill="none" stroke="#e5b29a" stroke-linecap="round" stroke-width="3.5"/><ellipse cx="-9.41" cy="48.5" rx="2" ry="2.3" fill="#e5b29a"/><ellipse cx="1.14" cy="5.4" rx="5.3" ry="5.4" fill="#2b2224"/><ellipse cx="1.34" cy="9.3" rx="3.7" ry="4.7" fill="#e5b29a"/><ellipse cx="1.24" cy="3.8" rx="4.5" ry="3.0" fill="#2b2224"/><ellipse cx="-2.76" cy="6.6" rx="1.0" ry="2.6" fill="#2b2224"/><ellipse cx="5.24" cy="6.6" rx="1.0" ry="2.6" fill="#2b2224"/><ellipse cx="1.34" cy="11.6" rx="1.0" ry="0.45" fill="#b3202e"/><ellipse cx="-0.16" cy="8.7" rx="0.8" ry="0.4" fill="#4a2e2a" opacity="0.8"/><ellipse cx="2.94" cy="8.7" rx="0.8" ry="0.4" fill="#4a2e2a" opacity="0.8"/></g></g><rect x="0.5" y="0.5" width="93" height="143" fill="none" stroke="#ffffff" stroke-opacity="0.45"/></svg></div>
<div class="t b" style="left:1528px;top:216px"><svg width="94" height="144" viewBox="0 0 94 144"><rect width="94" height="144" fill="url(#bg)"/><rect width="94" height="144" fill="url(#vg)"/><rect width="94" height="144" fill="url(#hg)"/><ellipse cx="47.5" cy="138.62" rx="13.56" ry="2.44" fill="#cbc6ce" opacity="0.5" filter="url(#soft2)"/><g filter="url(#soft)"><g transform="translate(45.5 6) scale(1.36)"><path d="M-4.4,91 L-2.2,91 L-2.3,95 L-4.5,95Z M2,91 L4.2,91 L4.1,94.6 L1.9,94.6Z" fill="#d79c80"/><path d="M-4.7,94.2 L-2,94.2 L-2.4,99.3 L-4.6,99.3Z M1.7,93.8 L4.4,93.8 L4.3,98.5 L2,98.5Z" fill="#b3142b"/><rect x="-0.89" y="12" width="4" height="7" fill="#d79c80"/><polygon points="-1.19,16.8 -7.9,18.4 -9.13,21.5 -6.99,27 -6.58,34.5 -8.37,43 -7.81,91.5 7.99,91.5 9.63,43 8.02,34.5 8.61,27 10.87,21.5 9.7,18.4 3.41,16.8" fill="#ad9654" stroke="#ad9654" stroke-width="0.8" stroke-linejoin="round"/><polygon points="4.32,27 4.01,34.5 4.68,43 3.65,91.5 7.99,91.5 9.63,43 8.02,34.5 8.61,27" fill="#927a3e" opacity="0.32"/><polygon points="-1.19,16.8 -7.9,18.4 -9.13,21.5 -6.99,27 -6.58,34.5 -8.37,43 -7.81,91.5 7.99,91.5 9.63,43 8.02,34.5 8.61,27 10.87,21.5 9.7,18.4 3.41,16.8" fill="url(#fl)" opacity="0.85"/><ellipse cx="-2" cy="24.3" rx="2.6" ry="2" fill="#a21a2e" transform="rotate(-20 -2 24.3)"/><ellipse cx="-0.81" cy="25.3" rx="1.3" ry="1.1" fill="#7e1424" transform="rotate(0 -0.81 25.3)"/><ellipse cx="1.83" cy="23" rx="1.5" ry="1.1" fill="#a21a2e" transform="rotate(15 1.83 23)"/><ellipse cx="2.45" cy="26.6" rx="1.3" ry="0.7" fill="#55703c" transform="rotate(30 2.45 26.6)"/><ellipse cx="-3.88" cy="26.9" rx="1.1" ry="0.6" fill="#55703c" transform="rotate(-30 -3.88 26.9)"/><ellipse cx="4.06" cy="28.9" rx="1.5" ry="1.9" fill="#bb2a66" transform="rotate(10 4.06 28.9)"/><ellipse cx="2.07" cy="30.8" rx="1" ry="0.6" fill="#55703c" transform="rotate(0 2.07 30.8)"/><ellipse cx="-2.06" cy="30.2" rx="0.9" ry="0.7" fill="#ebe4cf" transform="rotate(0 -2.06 30.2)"/><ellipse cx="5.01" cy="22.2" rx="0.9" ry="0.5" fill="#55703c" transform="rotate(-20 5.01 22.2)"/><ellipse cx="-1.27" cy="37.2" rx="1" ry="0.8" fill="#ebe4cf" transform="rotate(0 -1.27 37.2)"/><ellipse cx="3.41" cy="38.6" rx="0.8" ry="0.7" fill="#ebe4cf" transform="rotate(0 3.41 38.6)"/><ellipse cx="3.03" cy="42.8" rx="2.3" ry="1.8" fill="#a21a2e" transform="rotate(20 3.03 42.8)"/><ellipse cx="3.9" cy="43.7" rx="1.2" ry="1" fill="#7e1424" transform="rotate(0 3.9 43.7)"/><ellipse cx="0.72" cy="44.7" rx="1.2" ry="0.7" fill="#55703c" transform="rotate(25 0.72 44.7)"/><ellipse cx="-3.28" cy="41.8" rx="1" ry="0.9" fill="#ebe4cf" transform="rotate(0 -3.28 41.8)"/><ellipse cx="-3.78" cy="47.4" rx="1.7" ry="2.2" fill="#bb2a66" transform="rotate(-10 -3.78 47.4)"/><ellipse cx="-1.64" cy="51.3" rx="1.4" ry="1" fill="#ebe4cf" transform="rotate(20 -1.64 51.3)"/><ellipse cx="1.65" cy="49.6" rx="1.1" ry="0.6" fill="#55703c" transform="rotate(-30 1.65 49.6)"/><ellipse cx="4.47" cy="50.9" rx="1" ry="1.2" fill="#ebe4cf" transform="rotate(0 4.47 50.9)"/><ellipse cx="1.38" cy="54.2" rx="1.1" ry="0.8" fill="#ebe4cf" transform="rotate(-15 1.38 54.2)"/><ellipse cx="-3.43" cy="54.6" rx="0.9" ry="0.6" fill="#55703c" transform="rotate(20 -3.43 54.6)"/><ellipse cx="-1.73" cy="59.6" rx="2.6" ry="2.2" fill="#bb2a66" transform="rotate(15 -1.73 59.6)"/><ellipse cx="-0.87" cy="60.4" rx="1.3" ry="1.1" fill="#9a1f55" transform="rotate(0 -0.87 60.4)"/><ellipse cx="3.96" cy="58" rx="1" ry="1.3" fill="#ebe4cf" transform="rotate(0 3.96 58)"/><ellipse cx="2.81" cy="62.6" rx="1.1" ry="0.6" fill="#55703c" transform="rotate(30 2.81 62.6)"/><ellipse cx="-3.97" cy="64.6" rx="0.9" ry="0.8" fill="#ebe4cf" transform="rotate(0 -3.97 64.6)"/><ellipse cx="2.33" cy="66.6" rx="1.4" ry="1" fill="#ebe4cf" transform="rotate(-20 2.33 66.6)"/><ellipse cx="-2.3" cy="71.6" rx="2.2" ry="2" fill="#bb2a66" transform="rotate(-15 -2.3 71.6)"/><ellipse cx="1.2" cy="70" rx="1" ry="0.6" fill="#55703c" transform="rotate(-25 1.2 70)"/><ellipse cx="3.79" cy="72.6" rx="0.9" ry="1.1" fill="#ebe4cf" transform="rotate(0 3.79 72.6)"/><ellipse cx="-4.1" cy="76" rx="0.9" ry="0.5" fill="#55703c" transform="rotate(20 -4.1 76)"/><ellipse cx="0.91" cy="77" rx="1.1" ry="0.8" fill="#ebe4cf" transform="rotate(10 0.91 77)"/><ellipse cx="1.94" cy="82" rx="2.3" ry="2" fill="#bb2a66" transform="rotate(20 1.94 82)"/><ellipse cx="1.06" cy="82.7" rx="1.1" ry="1" fill="#9a1f55" transform="rotate(0 1.06 82.7)"/><ellipse cx="-3.28" cy="81" rx="1" ry="0.9" fill="#ebe4cf" transform="rotate(0 -3.28 81)"/><ellipse cx="4.16" cy="79" rx="0.9" ry="0.5" fill="#55703c" transform="rotate(-30 4.16 79)"/><ellipse cx="-2.47" cy="86.6" rx="1.2" ry="0.9" fill="#ebe4cf" transform="rotate(15 -2.47 86.6)"/><ellipse cx="2.97" cy="87.6" rx="1" ry="0.8" fill="#ebe4cf" transform="rotate(0 2.97 87.6)"/><ellipse cx="-0.31" cy="88.6" rx="0.9" ry="0.5" fill="#55703c" transform="rotate(0 -0.31 88.6)"/><path d="M-1.09,14.6 l2.2,1.6 l2.2,-1.6 l0.5,3 h-5.4z" fill="#a21a2e"/><path d="M10.07,21 L18.74,33" fill="none" stroke="#d79c80" stroke-linecap="round" stroke-width="4.3"/><path d="M-8.33,21 L-9.78,35" fill="none" stroke="#e5b29a" stroke-linecap="round" stroke-width="4.3"/><ellipse cx="9.87" cy="21.4" rx="2.6" ry="3.6" fill="#ad9654"/><ellipse cx="-8.13" cy="21.4" rx="2.4" ry="3.4" fill="#ad9654"/><ellipse cx="10.17" cy="21.6" rx="2.0" ry="2.9" fill="#8f2233"/><ellipse cx="-8.13" cy="21.0" rx="1.4" ry="2.0" fill="#963040"/><path d="M18.74,33 L9.64,42" fill="none" stroke="#d79c80" stroke-linecap="round" stroke-width="3.5"/><ellipse cx="9.64" cy="42" rx="2" ry="2.3" fill="#d79c80"/><path d="M-9.78,35 L-9.43,48.5" fill="none" stroke="#e5b29a" stroke-linecap="round" stroke-width="3.5"/><ellipse cx="-9.43" cy="48.5" rx="2" ry="2.3" fill="#e5b29a"/><ellipse cx="1.11" cy="5.4" rx="5.3" ry="5.4" fill="#2b2224"/><ellipse cx="1.31" cy="9.3" rx="3.7" ry="4.7" fill="#e5b29a"/><ellipse cx="1.21" cy="3.8" rx="4.5" ry="3.0" fill="#2b2224"/><ellipse cx="-2.79" cy="6.6" rx="1.0" ry="2.6" fill="#2b2224"/><ellipse cx="5.21" cy="6.6" rx="1.0" ry="2.6" fill="#2b2224"/><ellipse cx="1.31" cy="11.6" rx="1.0" ry="0.45" fill="#b3202e"/><ellipse cx="-0.19" cy="8.7" rx="0.8" ry="0.4" fill="#4a2e2a" opacity="0.8"/><ellipse cx="2.91" cy="8.7" rx="0.8" ry="0.4" fill="#4a2e2a" opacity="0.8"/></g></g><rect x="0.5" y="0.5" width="93" height="143" fill="none" stroke="#ffffff" stroke-opacity="0.45"/></svg></div>
<div class="t b" style="left:34px;top:390px"><svg width="94" height="144" viewBox="0 0 94 144"><rect width="94" height="144" fill="url(#bg)"/><rect width="94" height="144" fill="url(#vg)"/><rect width="94" height="144" fill="url(#hg)"/><g filter="url(#soft)"><g transform="translate(45.5 6.6) scale(2.04)"><rect x="-0.28" y="12" width="4" height="7" fill="#d79c80"/><polygon points="-0.58,16.8 -7.72,18.4 -9.02,21.5 -7.01,27 -6.77,34.5 -8.76,43 -9.32,91.5 6.48,91.5 9.24,43 7.83,34.5 8.59,27 10.98,21.5 9.88,18.4 4.02,16.8" fill="#ad9654" stroke="#ad9654" stroke-width="0.8" stroke-linejoin="round"/><polygon points="4.3,27 3.82,34.5 4.29,43 2.13,91.5 6.48,91.5 9.24,43 7.83,34.5 8.59,27" fill="#927a3e" opacity="0.32"/><polygon points="-0.58,16.8 -7.72,18.4 -9.02,21.5 -7.01,27 -6.77,34.5 -8.76,43 -9.32,91.5 6.48,91.5 9.24,43 7.83,34.5 8.59,27 10.98,21.5 9.88,18.4 4.02,16.8" fill="url(#fl)" opacity="0.85"/><ellipse cx="-1.95" cy="24.3" rx="2.6" ry="2" fill="#a21a2e" transform="rotate(-20 -1.95 24.3)"/><ellipse cx="-0.79" cy="25.3" rx="1.3" ry="1.1" fill="#7e1424" transform="rotate(0 -0.79 25.3)"/><ellipse cx="1.91" cy="23" rx="1.5" ry="1.1" fill="#a21a2e" transform="rotate(15 1.91 23)"/><ellipse cx="2.44" cy="26.6" rx="1.3" ry="0.7" fill="#55703c" transform="rotate(30 2.44 26.6)"/><ellipse cx="-3.9" cy="26.9" rx="1.1" ry="0.6" fill="#55703c" transform="rotate(-30 -3.9 26.9)"/><ellipse cx="4" cy="28.9" rx="1.5" ry="1.9" fill="#bb2a66" transform="rotate(10 4 28.9)"/><ellipse cx="1.97" cy="30.8" rx="1" ry="0.6" fill="#55703c" transform="rotate(0 1.97 30.8)"/><ellipse cx="-2.16" cy="30.2" rx="0.9" ry="0.7" fill="#ebe4cf" transform="rotate(0 -2.16 30.2)"/><ellipse cx="5.1" cy="22.2" rx="0.9" ry="0.5" fill="#55703c" transform="rotate(-20 5.1 22.2)"/><ellipse cx="-1.52" cy="37.2" rx="1" ry="0.8" fill="#ebe4cf" transform="rotate(0 -1.52 37.2)"/><ellipse cx="3.12" cy="38.6" rx="0.8" ry="0.7" fill="#ebe4cf" transform="rotate(0 3.12 38.6)"/><ellipse cx="2.65" cy="42.8" rx="2.3" ry="1.8" fill="#a21a2e" transform="rotate(20 2.65 42.8)"/><ellipse cx="3.49" cy="43.7" rx="1.2" ry="1" fill="#7e1424" transform="rotate(0 3.49 43.7)"/><ellipse cx="0.29" cy="44.7" rx="1.2" ry="0.7" fill="#55703c" transform="rotate(25 0.29 44.7)"/><ellipse cx="-3.65" cy="41.8" rx="1" ry="0.9" fill="#ebe4cf" transform="rotate(0 -3.65 41.8)"/><ellipse cx="-4.27" cy="47.4" rx="1.7" ry="2.2" fill="#bb2a66" transform="rotate(-10 -4.27 47.4)"/><ellipse cx="-2.23" cy="51.3" rx="1.4" ry="1" fill="#ebe4cf" transform="rotate(20 -2.23 51.3)"/><ellipse cx="1.1" cy="49.6" rx="1.1" ry="0.6" fill="#55703c" transform="rotate(-30 1.1 49.6)"/><ellipse cx="3.9" cy="50.9" rx="1" ry="1.2" fill="#ebe4cf" transform="rotate(0 3.9 50.9)"/><ellipse cx="0.73" cy="54.2" rx="1.1" ry="0.8" fill="#ebe4cf" transform="rotate(-15 0.73 54.2)"/><ellipse cx="-4.09" cy="54.6" rx="0.9" ry="0.6" fill="#55703c" transform="rotate(20 -4.09 54.6)"/><ellipse cx="-2.51" cy="59.6" rx="2.6" ry="2.2" fill="#bb2a66" transform="rotate(15 -2.51 59.6)"/><ellipse cx="-1.67" cy="60.4" rx="1.3" ry="1.1" fill="#9a1f55" transform="rotate(0 -1.67 60.4)"/><ellipse cx="3.22" cy="58" rx="1" ry="1.3" fill="#ebe4cf" transform="rotate(0 3.22 58)"/><ellipse cx="1.97" cy="62.6" rx="1.1" ry="0.6" fill="#55703c" transform="rotate(30 1.97 62.6)"/><ellipse cx="-4.86" cy="64.6" rx="0.9" ry="0.8" fill="#ebe4cf" transform="rotate(0 -4.86 64.6)"/><ellipse cx="1.39" cy="66.6" rx="1.4" ry="1" fill="#ebe4cf" transform="rotate(-20 1.39 66.6)"/><ellipse cx="-3.36" cy="71.6" rx="2.2" ry="2" fill="#bb2a66" transform="rotate(-15 -3.36 71.6)"/><ellipse cx="0.19" cy="70" rx="1" ry="0.6" fill="#55703c" transform="rotate(-25 0.19 70)"/><ellipse cx="2.72" cy="72.6" rx="0.9" ry="1.1" fill="#ebe4cf" transform="rotate(0 2.72 72.6)"/><path d="M-0.48,14.6 l2.2,1.6 l2.2,-1.6 l0.5,3 h-5.4z" fill="#a21a2e"/><path d="M10.2,21 L17.73,28.8" fill="none" stroke="#d79c80" stroke-linecap="round" stroke-width="4.3"/><path d="M-8.2,21 L-10.97,31.5" fill="none" stroke="#e5b29a" stroke-linecap="round" stroke-width="4.3"/><ellipse cx="10" cy="21.4" rx="2.6" ry="3.6" fill="#ad9654"/><ellipse cx="-8" cy="21.4" rx="2.4" ry="3.4" fill="#ad9654"/><ellipse cx="10.3" cy="21.6" rx="2.0" ry="2.9" fill="#8f2233"/><ellipse cx="-8" cy="21.0" rx="1.4" ry="2.0" fill="#963040"/><path d="M17.73,28.8 L8.13,37.5" fill="none" stroke="#d79c80" stroke-linecap="round" stroke-width="3.5"/><ellipse cx="8.13" cy="37.5" rx="2" ry="2.3" fill="#d79c80"/><path d="M-10.97,31.5 L-0.52,21.3" fill="none" stroke="#e5b29a" stroke-linecap="round" stroke-width="3.5"/><ellipse cx="-0.52" cy="21.3" rx="2" ry="2.3" fill="#e5b29a"/><ellipse cx="1.72" cy="5.4" rx="5.3" ry="5.4" fill="#2b2224"/><ellipse cx="1.92" cy="9.3" rx="3.7" ry="4.7" fill="#e5b29a"/><ellipse cx="1.82" cy="3.8" rx="4.5" ry="3.0" fill="#2b2224"/><ellipse cx="-2.18" cy="6.6" rx="1.0" ry="2.6" fill="#2b2224"/><ellipse cx="5.82" cy="6.6" rx="1.0" ry="2.6" fill="#2b2224"/><ellipse cx="1.92" cy="11.6" rx="1.0" ry="0.45" fill="#b3202e"/><ellipse cx="0.42" cy="8.7" rx="0.8" ry="0.4" fill="#4a2e2a" opacity="0.8"/><ellipse cx="3.52" cy="8.7" rx="0.8" ry="0.4" fill="#4a2e2a" opacity="0.8"/></g></g><rect x="0.5" y="0.5" width="93" height="143" fill="none" stroke="#ffffff" stroke-opacity="0.45"/></svg></div>
<div class="t b" style="left:200px;top:390px"><svg width="94" height="144" viewBox="0 0 94 144"><rect width="94" height="144" fill="url(#bg)"/><rect width="94" height="144" fill="url(#vg)"/><rect width="94" height="144" fill="url(#hg)"/><g filter="url(#soft)"><g transform="translate(42.5 3.8) scale(2.44)"><rect x="-1.39" y="12" width="4" height="7" fill="#d79c80"/><polygon points="-1.69,16.8 -8.41,18.4 -9.65,21.5 -7.52,27 -7.11,34.5 -8.91,43 -8.41,91.5 7.39,91.5 9.09,43 7.49,34.5 8.08,27 10.35,21.5 9.19,18.4 2.91,16.8" fill="#ad9654" stroke="#ad9654" stroke-width="0.8" stroke-linejoin="round"/><polygon points="3.79,27 3.48,34.5 4.14,43 3.04,91.5 7.39,91.5 9.09,43 7.49,34.5 8.08,27" fill="#927a3e" opacity="0.32"/><polygon points="-1.69,16.8 -8.41,18.4 -9.65,21.5 -7.52,27 -7.11,34.5 -8.91,43 -8.41,91.5 7.39,91.5 9.09,43 7.49,34.5 8.08,27 10.35,21.5 9.19,18.4 2.91,16.8" fill="url(#fl)" opacity="0.85"/><ellipse cx="-2.52" cy="24.3" rx="2.6" ry="2" fill="#a21a2e" transform="rotate(-20 -2.52 24.3)"/><ellipse cx="-1.33" cy="25.3" rx="1.3" ry="1.1" fill="#7e1424" transform="rotate(0 -1.33 25.3)"/><ellipse cx="1.31" cy="23" rx="1.5" ry="1.1" fill="#a21a2e" transform="rotate(15 1.31 23)"/><ellipse cx="1.92" cy="26.6" rx="1.3" ry="0.7" fill="#55703c" transform="rotate(30 1.92 26.6)"/><ellipse cx="-4.41" cy="26.9" rx="1.1" ry="0.6" fill="#55703c" transform="rotate(-30 -4.41 26.9)"/><ellipse cx="3.53" cy="28.9" rx="1.5" ry="1.9" fill="#bb2a66" transform="rotate(10 3.53 28.9)"/><ellipse cx="1.55" cy="30.8" rx="1" ry="0.6" fill="#55703c" transform="rotate(0 1.55 30.8)"/><ellipse cx="-2.59" cy="30.2" rx="0.9" ry="0.7" fill="#ebe4cf" transform="rotate(0 -2.59 30.2)"/><ellipse cx="4.49" cy="22.2" rx="0.9" ry="0.5" fill="#55703c" transform="rotate(-20 4.49 22.2)"/><ellipse cx="-1.81" cy="37.2" rx="1" ry="0.8" fill="#ebe4cf" transform="rotate(0 -1.81 37.2)"/><ellipse cx="2.87" cy="38.6" rx="0.8" ry="0.7" fill="#ebe4cf" transform="rotate(0 2.87 38.6)"/><ellipse cx="2.49" cy="42.8" rx="2.3" ry="1.8" fill="#a21a2e" transform="rotate(20 2.49 42.8)"/><ellipse cx="3.35" cy="43.7" rx="1.2" ry="1" fill="#7e1424" transform="rotate(0 3.35 43.7)"/><ellipse cx="0.17" cy="44.7" rx="1.2" ry="0.7" fill="#55703c" transform="rotate(25 0.17 44.7)"/><ellipse cx="-3.83" cy="41.8" rx="1" ry="0.9" fill="#ebe4cf" transform="rotate(0 -3.83 41.8)"/><ellipse cx="-4.33" cy="47.4" rx="1.7" ry="2.2" fill="#bb2a66" transform="rotate(-10 -4.33 47.4)"/><ellipse cx="-2.2" cy="51.3" rx="1.4" ry="1" fill="#ebe4cf" transform="rotate(20 -2.2 51.3)"/><ellipse cx="1.1" cy="49.6" rx="1.1" ry="0.6" fill="#55703c" transform="rotate(-30 1.1 49.6)"/><ellipse cx="3.92" cy="50.9" rx="1" ry="1.2" fill="#ebe4cf" transform="rotate(0 3.92 50.9)"/><ellipse cx="0.82" cy="54.2" rx="1.1" ry="0.8" fill="#ebe4cf" transform="rotate(-15 0.82 54.2)"/><ellipse cx="-3.98" cy="54.6" rx="0.9" ry="0.6" fill="#55703c" transform="rotate(20 -3.98 54.6)"/><ellipse cx="-2.3" cy="59.6" rx="2.6" ry="2.2" fill="#bb2a66" transform="rotate(15 -2.3 59.6)"/><ellipse cx="-1.44" cy="60.4" rx="1.3" ry="1.1" fill="#9a1f55" transform="rotate(0 -1.44 60.4)"/><ellipse cx="3.39" cy="58" rx="1" ry="1.3" fill="#ebe4cf" transform="rotate(0 3.39 58)"/><path d="M-1.59,14.6 l2.2,1.6 l2.2,-1.6 l0.5,3 h-5.4z" fill="#a21a2e"/><path d="M9.56,21 L17.26,28.8" fill="none" stroke="#d79c80" stroke-linecap="round" stroke-width="4.3"/><path d="M-8.84,21 L-11.37,31.5" fill="none" stroke="#e5b29a" stroke-linecap="round" stroke-width="4.3"/><ellipse cx="9.36" cy="21.4" rx="2.6" ry="3.6" fill="#ad9654"/><ellipse cx="-8.64" cy="21.4" rx="2.4" ry="3.4" fill="#ad9654"/><ellipse cx="9.66" cy="21.6" rx="2.0" ry="2.9" fill="#8f2233"/><ellipse cx="-8.64" cy="21.0" rx="1.4" ry="2.0" fill="#963040"/><path d="M17.26,28.8 L7.85,37.5" fill="none" stroke="#d79c80" stroke-linecap="round" stroke-width="3.5"/><ellipse cx="7.85" cy="37.5" rx="2" ry="2.3" fill="#d79c80"/><path d="M-11.37,31.5 L-1.15,21.3" fill="none" stroke="#e5b29a" stroke-linecap="round" stroke-width="3.5"/><ellipse cx="-1.15" cy="21.3" rx="2" ry="2.3" fill="#e5b29a"/><ellipse cx="0.61" cy="5.4" rx="5.3" ry="5.4" fill="#2b2224"/><ellipse cx="0.81" cy="9.3" rx="3.7" ry="4.7" fill="#e5b29a"/><ellipse cx="0.71" cy="3.8" rx="4.5" ry="3.0" fill="#2b2224"/><ellipse cx="-3.29" cy="6.6" rx="1.0" ry="2.6" fill="#2b2224"/><ellipse cx="4.71" cy="6.6" rx="1.0" ry="2.6" fill="#2b2224"/><ellipse cx="0.81" cy="11.6" rx="1.0" ry="0.45" fill="#b3202e"/><ellipse cx="-0.69" cy="8.7" rx="0.8" ry="0.4" fill="#4a2e2a" opacity="0.8"/><ellipse cx="2.41" cy="8.7" rx="0.8" ry="0.4" fill="#4a2e2a" opacity="0.8"/></g></g><rect x="0.5" y="0.5" width="93" height="143" fill="none" stroke="#ffffff" stroke-opacity="0.45"/></svg></div>
<div class="t b" style="left:366px;top:390px"><svg width="94" height="144" viewBox="0 0 94 144"><rect width="94" height="144" fill="url(#bg)"/><rect width="94" height="144" fill="url(#vg)"/><rect width="94" height="144" fill="url(#hg)"/><g filter="url(#soft)"><g transform="translate(47 1.7) scale(2.44)"><rect x="-1.8" y="12" width="4" height="7" fill="#d79c80"/><polygon points="-2.1,16.8 -8.67,18.4 -9.88,21.5 -7.71,27 -7.24,34.5 -8.97,43 -8.07,91.5 7.73,91.5 9.03,43 7.36,34.5 7.89,27 10.12,21.5 8.93,18.4 2.5,16.8" fill="#ad9654" stroke="#ad9654" stroke-width="0.8" stroke-linejoin="round"/><polygon points="3.6,27 3.35,34.5 4.08,43 3.38,91.5 7.73,91.5 9.03,43 7.36,34.5 7.89,27" fill="#927a3e" opacity="0.32"/><polygon points="-2.1,16.8 -8.67,18.4 -9.88,21.5 -7.71,27 -7.24,34.5 -8.97,43 -8.07,91.5 7.73,91.5 9.03,43 7.36,34.5 7.89,27 10.12,21.5 8.93,18.4 2.5,16.8" fill="url(#fl)" opacity="0.85"/><ellipse cx="-2.73" cy="24.3" rx="2.6" ry="2" fill="#a21a2e" transform="rotate(-20 -2.73 24.3)"/><ellipse cx="-1.54" cy="25.3" rx="1.3" ry="1.1" fill="#7e1424" transform="rotate(0 -1.54 25.3)"/><ellipse cx="1.09" cy="23" rx="1.5" ry="1.1" fill="#a21a2e" transform="rotate(15 1.09 23)"/><ellipse cx="1.73" cy="26.6" rx="1.3" ry="0.7" fill="#55703c" transform="rotate(30 1.73 26.6)"/><ellipse cx="-4.6" cy="26.9" rx="1.1" ry="0.6" fill="#55703c" transform="rotate(-30 -4.6 26.9)"/><ellipse cx="3.36" cy="28.9" rx="1.5" ry="1.9" fill="#bb2a66" transform="rotate(10 3.36 28.9)"/><ellipse cx="1.39" cy="30.8" rx="1" ry="0.6" fill="#55703c" transform="rotate(0 1.39 30.8)"/><ellipse cx="-2.76" cy="30.2" rx="0.9" ry="0.7" fill="#ebe4cf" transform="rotate(0 -2.76 30.2)"/><ellipse cx="4.26" cy="22.2" rx="0.9" ry="0.5" fill="#55703c" transform="rotate(-20 4.26 22.2)"/><ellipse cx="-1.91" cy="37.2" rx="1" ry="0.8" fill="#ebe4cf" transform="rotate(0 -1.91 37.2)"/><ellipse cx="2.77" cy="38.6" rx="0.8" ry="0.7" fill="#ebe4cf" transform="rotate(0 2.77 38.6)"/><ellipse cx="2.43" cy="42.8" rx="2.3" ry="1.8" fill="#a21a2e" transform="rotate(20 2.43 42.8)"/><ellipse cx="3.3" cy="43.7" rx="1.2" ry="1" fill="#7e1424" transform="rotate(0 3.3 43.7)"/><ellipse cx="0.13" cy="44.7" rx="1.2" ry="0.7" fill="#55703c" transform="rotate(25 0.13 44.7)"/><ellipse cx="-3.89" cy="41.8" rx="1" ry="0.9" fill="#ebe4cf" transform="rotate(0 -3.89 41.8)"/><ellipse cx="-4.35" cy="47.4" rx="1.7" ry="2.2" fill="#bb2a66" transform="rotate(-10 -4.35 47.4)"/><ellipse cx="-2.19" cy="51.3" rx="1.4" ry="1" fill="#ebe4cf" transform="rotate(20 -2.19 51.3)"/><ellipse cx="1.09" cy="49.6" rx="1.1" ry="0.6" fill="#55703c" transform="rotate(-30 1.09 49.6)"/><ellipse cx="3.92" cy="50.9" rx="1" ry="1.2" fill="#ebe4cf" transform="rotate(0 3.92 50.9)"/><ellipse cx="0.86" cy="54.2" rx="1.1" ry="0.8" fill="#ebe4cf" transform="rotate(-15 0.86 54.2)"/><ellipse cx="-3.95" cy="54.6" rx="0.9" ry="0.6" fill="#55703c" transform="rotate(20 -3.95 54.6)"/><ellipse cx="-2.22" cy="59.6" rx="2.6" ry="2.2" fill="#bb2a66" transform="rotate(15 -2.22 59.6)"/><ellipse cx="-1.35" cy="60.4" rx="1.3" ry="1.1" fill="#9a1f55" transform="rotate(0 -1.35 60.4)"/><ellipse cx="3.46" cy="58" rx="1" ry="1.3" fill="#ebe4cf" transform="rotate(0 3.46 58)"/><ellipse cx="2.35" cy="62.6" rx="1.1" ry="0.6" fill="#55703c" transform="rotate(30 2.35 62.6)"/><path d="M-2,14.6 l2.2,1.6 l2.2,-1.6 l0.5,3 h-5.4z" fill="#a21a2e"/><path d="M9.32,21 L12.08,30.5" fill="none" stroke="#d79c80" stroke-linecap="round" stroke-width="4.3"/><path d="M-9.08,21 L-11.92,30.8" fill="none" stroke="#e5b29a" stroke-linecap="round" stroke-width="4.3"/><ellipse cx="9.12" cy="21.4" rx="2.6" ry="3.6" fill="#ad9654"/><ellipse cx="-8.88" cy="21.4" rx="2.4" ry="3.4" fill="#ad9654"/><ellipse cx="9.42" cy="21.6" rx="2.0" ry="2.9" fill="#8f2233"/><ellipse cx="-8.88" cy="21.0" rx="1.4" ry="2.0" fill="#963040"/><path d="M12.08,30.5 L1.59,28.8" fill="none" stroke="#d79c80" stroke-linecap="round" stroke-width="3.5"/><ellipse cx="1.59" cy="28.8" rx="2" ry="2.3" fill="#d79c80"/><path d="M-11.92,30.8 L-1.41,28.8" fill="none" stroke="#e5b29a" stroke-linecap="round" stroke-width="3.5"/><ellipse cx="-1.41" cy="28.8" rx="2" ry="2.3" fill="#e5b29a"/><ellipse cx="0.2" cy="5.4" rx="5.3" ry="5.4" fill="#2b2224"/><ellipse cx="0.4" cy="9.3" rx="3.7" ry="4.7" fill="#e5b29a"/><ellipse cx="0.3" cy="3.8" rx="4.5" ry="3.0" fill="#2b2224"/><ellipse cx="-3.7" cy="6.6" rx="1.0" ry="2.6" fill="#2b2224"/><ellipse cx="4.3" cy="6.6" rx="1.0" ry="2.6" fill="#2b2224"/><ellipse cx="0.4" cy="11.6" rx="1.0" ry="0.45" fill="#b3202e"/><ellipse cx="-1.1" cy="8.7" rx="0.8" ry="0.4" fill="#4a2e2a" opacity="0.8"/><ellipse cx="2" cy="8.7" rx="0.8" ry="0.4" fill="#4a2e2a" opacity="0.8"/></g></g><rect x="0.5" y="0.5" width="93" height="143" fill="none" stroke="#ffffff" stroke-opacity="0.45"/></svg></div>
<div class="t b" style="left:532px;top:390px"><svg width="94" height="144" viewBox="0 0 94 144"><rect width="94" height="144" fill="url(#bg)"/><rect width="94" height="144" fill="url(#vg)"/><rect width="94" height="144" fill="url(#hg)"/><ellipse cx="42" cy="136.36" rx="12" ry="2.16" fill="#cbc6ce" opacity="0.5" filter="url(#soft2)"/><g filter="url(#soft)"><g transform="translate(40 19) scale(1.2)"><path d="M2.2,89.3 l3.2,0 l0.4,4.2 l-5.6,2.4z" fill="#d79c80"/><path d="M-4.6,97.7 l4.4,-3.1 l5.6,-2.5 l0.7,0.6 l-0.1,4.9 l-0.7,0 l-0.2,-3.1 l-5.2,3.6z" fill="#98102a"/><path d="M-0.6,90.8 l3.2,0 l0.4,4.2 l-5.6,2.4z" fill="#d79c80"/><path d="M-7.4,99.2 l4.4,-3.1 l5.6,-2.5 l0.7,0.6 l-0.1,4.9 l-0.7,0 l-0.2,-3.1 l-5.2,3.6z" fill="#b3142b"/><rect x="-4.1" y="12" width="4" height="7" fill="#d79c80"/><polygon points="-4.4,16.8 -7.65,18.4 -8.76,21.5 -9.59,27 -8.57,34.5 -9.41,43 -7.05,91.5 6.54,91.5 5.99,43 4.63,34.5 5.21,27 4.04,21.5 2.75,18.4 0.2,16.8" fill="#ad9654" stroke="#ad9654" stroke-width="0.8" stroke-linejoin="round"/><polygon points="1.14,27 1,34.5 1.75,43 2.81,91.5 6.54,91.5 5.99,43 4.63,34.5 5.21,27" fill="#927a3e" opacity="0.32"/><polygon points="-4.4,16.8 -7.65,18.4 -8.76,21.5 -9.59,27 -8.57,34.5 -9.41,43 -7.05,91.5 6.54,91.5 5.99,43 4.63,34.5 5.21,27 4.04,21.5 2.75,18.4 0.2,16.8" fill="url(#fl)" opacity="0.85"/><ellipse cx="-4.87" cy="24.3" rx="2.6" ry="2" fill="#a21a2e" transform="rotate(-20 -4.87 24.3)"/><ellipse cx="-3.74" cy="25.3" rx="1.3" ry="1.1" fill="#7e1424" transform="rotate(0 -3.74 25.3)"/><ellipse cx="-1.41" cy="23" rx="1.5" ry="1.1" fill="#a21a2e" transform="rotate(15 -1.41 23)"/><ellipse cx="-0.7" cy="26.6" rx="1.3" ry="0.7" fill="#55703c" transform="rotate(30 -0.7 26.6)"/><ellipse cx="-6.49" cy="26.9" rx="1.1" ry="0.6" fill="#55703c" transform="rotate(-30 -6.49 26.9)"/><ellipse cx="0.87" cy="28.9" rx="1.5" ry="1.9" fill="#bb2a66" transform="rotate(10 0.87 28.9)"/><ellipse cx="-0.88" cy="30.8" rx="1" ry="0.6" fill="#55703c" transform="rotate(0 -0.88 30.8)"/><ellipse cx="-4.69" cy="30.2" rx="0.9" ry="0.7" fill="#ebe4cf" transform="rotate(0 -4.69 30.2)"/><ellipse cx="1.47" cy="22.2" rx="0.9" ry="0.5" fill="#55703c" transform="rotate(-20 1.47 22.2)"/><ellipse cx="-3.68" cy="37.2" rx="1" ry="0.8" fill="#ebe4cf" transform="rotate(0 -3.68 37.2)"/><ellipse cx="0.66" cy="38.6" rx="0.8" ry="0.7" fill="#ebe4cf" transform="rotate(0 0.66 38.6)"/><ellipse cx="0.48" cy="42.8" rx="2.3" ry="1.8" fill="#a21a2e" transform="rotate(20 0.48 42.8)"/><ellipse cx="1.31" cy="43.7" rx="1.2" ry="1" fill="#7e1424" transform="rotate(0 1.31 43.7)"/><ellipse cx="-1.56" cy="44.7" rx="1.2" ry="0.7" fill="#55703c" transform="rotate(25 -1.56 44.7)"/><ellipse cx="-5.35" cy="41.8" rx="1" ry="0.9" fill="#ebe4cf" transform="rotate(0 -5.35 41.8)"/><ellipse cx="-5.58" cy="47.4" rx="1.7" ry="2.2" fill="#bb2a66" transform="rotate(-10 -5.58 47.4)"/><ellipse cx="-3.46" cy="51.3" rx="1.4" ry="1" fill="#ebe4cf" transform="rotate(20 -3.46 51.3)"/><ellipse cx="-0.51" cy="49.6" rx="1.1" ry="0.6" fill="#55703c" transform="rotate(-30 -0.51 49.6)"/><ellipse cx="2.13" cy="50.9" rx="1" ry="1.2" fill="#ebe4cf" transform="rotate(0 2.13 50.9)"/><ellipse cx="-0.57" cy="54.2" rx="1.1" ry="0.8" fill="#ebe4cf" transform="rotate(-15 -0.57 54.2)"/><ellipse cx="-4.96" cy="54.6" rx="0.9" ry="0.6" fill="#55703c" transform="rotate(20 -4.96 54.6)"/><ellipse cx="-3.21" cy="59.6" rx="2.6" ry="2.2" fill="#bb2a66" transform="rotate(15 -3.21 59.6)"/><ellipse cx="-2.39" cy="60.4" rx="1.3" ry="1.1" fill="#9a1f55" transform="rotate(0 -2.39 60.4)"/><ellipse cx="1.94" cy="58" rx="1" ry="1.3" fill="#ebe4cf" transform="rotate(0 1.94 58)"/><ellipse cx="1.08" cy="62.6" rx="1.1" ry="0.6" fill="#55703c" transform="rotate(30 1.08 62.6)"/><ellipse cx="-5.06" cy="64.6" rx="0.9" ry="0.8" fill="#ebe4cf" transform="rotate(0 -5.06 64.6)"/><ellipse cx="0.8" cy="66.6" rx="1.4" ry="1" fill="#ebe4cf" transform="rotate(-20 0.8 66.6)"/><ellipse cx="-3.25" cy="71.6" rx="2.2" ry="2" fill="#bb2a66" transform="rotate(-15 -3.25 71.6)"/><ellipse cx="-0.1" cy="70" rx="1" ry="0.6" fill="#55703c" transform="rotate(-25 -0.1 70)"/><ellipse cx="2.38" cy="72.6" rx="0.9" ry="1.1" fill="#ebe4cf" transform="rotate(0 2.38 72.6)"/><ellipse cx="-4.72" cy="76" rx="0.9" ry="0.5" fill="#55703c" transform="rotate(20 -4.72 76)"/><ellipse cx="-0.09" cy="77" rx="1.1" ry="0.8" fill="#ebe4cf" transform="rotate(10 -0.09 77)"/><ellipse cx="1.06" cy="82" rx="2.3" ry="2" fill="#bb2a66" transform="rotate(20 1.06 82)"/><ellipse cx="0.28" cy="82.7" rx="1.1" ry="1" fill="#9a1f55" transform="rotate(0 0.28 82.7)"/><ellipse cx="-3.77" cy="81" rx="1" ry="0.9" fill="#ebe4cf" transform="rotate(0 -3.77 81)"/><ellipse cx="2.97" cy="79" rx="0.9" ry="0.5" fill="#55703c" transform="rotate(-30 2.97 79)"/><ellipse cx="-2.8" cy="86.6" rx="1.2" ry="0.9" fill="#ebe4cf" transform="rotate(15 -2.8 86.6)"/><ellipse cx="2.23" cy="87.6" rx="1" ry="0.8" fill="#ebe4cf" transform="rotate(0 2.23 87.6)"/><ellipse cx="-0.74" cy="88.6" rx="0.9" ry="0.5" fill="#55703c" transform="rotate(0 -0.74 88.6)"/><path d="M-4.3,14.6 l2.2,1.6 l2.2,-1.6 l0.5,3 h-5.4z" fill="#a21a2e"/><path d="M1.13,21 L3.49,33" fill="none" stroke="#e5b29a" stroke-linecap="round" stroke-width="4"/><ellipse cx="1.13" cy="21.2" rx="2.7" ry="3.5" fill="#ad9654"/><ellipse cx="1.33" cy="21.2" rx="2.1" ry="2.9" fill="#8f2233"/><path d="M3.49,33 L-8.45,35" fill="none" stroke="#e5b29a" stroke-linecap="round" stroke-width="3.3"/><ellipse cx="-8.45" cy="35" rx="2" ry="2.3" fill="#e5b29a"/><ellipse cx="-2" cy="5.6" rx="5.2" ry="5.6" fill="#2b2224"/><ellipse cx="-4.5" cy="9.2" rx="3.2" ry="4.8" fill="#e5b29a"/><ellipse cx="-3.2" cy="4.0" rx="4.6" ry="3.2" fill="#2b2224"/><ellipse cx="-5.2" cy="11.6" rx="1.0" ry="0.45" fill="#b3202e"/><ellipse cx="-6.7" cy="8.7" rx="0.8" ry="0.4" fill="#4a2e2a" opacity="0.8"/></g></g><rect x="0.5" y="0.5" width="93" height="143" fill="none" stroke="#ffffff" stroke-opacity="0.45"/></svg></div>
<div class="t b" style="left:698px;top:390px"><svg width="94" height="144" viewBox="0 0 94 144"><rect width="94" height="144" fill="url(#bg)"/><rect width="94" height="144" fill="url(#vg)"/><rect width="94" height="144" fill="url(#hg)"/><ellipse cx="39.8" cy="134.34" rx="12.54" ry="2.26" fill="#cbc6ce" opacity="0.5" filter="url(#soft2)"/><g filter="url(#soft)"><g transform="translate(37.8 11.7) scale(1.25)"><path d="M2.2,89.3 l3.2,0 l0.4,4.2 l-5.6,2.4z" fill="#d79c80"/><path d="M-4.6,97.7 l4.4,-3.1 l5.6,-2.5 l0.7,0.6 l-0.1,4.9 l-0.7,0 l-0.2,-3.1 l-5.2,3.6z" fill="#98102a"/><path d="M-0.6,90.8 l3.2,0 l0.4,4.2 l-5.6,2.4z" fill="#d79c80"/><path d="M-7.4,99.2 l4.4,-3.1 l5.6,-2.5 l0.7,0.6 l-0.1,4.9 l-0.7,0 l-0.2,-3.1 l-5.2,3.6z" fill="#b3142b"/><rect x="-1.66" y="12" width="4" height="7" fill="#d79c80"/><polygon points="-1.96,16.8 -5.66,18.4 -6.84,21.5 -7.81,27 -6.97,34.5 -8.02,43 -6.85,91.5 6.75,91.5 7.38,43 6.23,34.5 6.99,27 5.96,21.5 4.74,18.4 2.64,16.8" fill="#ad9654" stroke="#ad9654" stroke-width="0.8" stroke-linejoin="round"/><polygon points="2.92,27 2.6,34.5 3.15,43 3.01,91.5 6.75,91.5 7.38,43 6.23,34.5 6.99,27" fill="#927a3e" opacity="0.32"/><polygon points="-1.96,16.8 -5.66,18.4 -6.84,21.5 -7.81,27 -6.97,34.5 -8.02,43 -6.85,91.5 6.75,91.5 7.38,43 6.23,34.5 6.99,27 5.96,21.5 4.74,18.4 2.64,16.8" fill="url(#fl)" opacity="0.85"/><ellipse cx="-3.02" cy="24.3" rx="2.6" ry="2" fill="#a21a2e" transform="rotate(-20 -3.02 24.3)"/><ellipse cx="-1.92" cy="25.3" rx="1.3" ry="1.1" fill="#7e1424" transform="rotate(0 -1.92 25.3)"/><ellipse cx="0.47" cy="23" rx="1.5" ry="1.1" fill="#a21a2e" transform="rotate(15 0.47 23)"/><ellipse cx="1.09" cy="26.6" rx="1.3" ry="0.7" fill="#55703c" transform="rotate(30 1.09 26.6)"/><ellipse cx="-4.71" cy="26.9" rx="1.1" ry="0.6" fill="#55703c" transform="rotate(-30 -4.71 26.9)"/><ellipse cx="2.6" cy="28.9" rx="1.5" ry="1.9" fill="#bb2a66" transform="rotate(10 2.6 28.9)"/><ellipse cx="0.81" cy="30.8" rx="1" ry="0.6" fill="#55703c" transform="rotate(0 0.81 30.8)"/><ellipse cx="-2.99" cy="30.2" rx="0.9" ry="0.7" fill="#ebe4cf" transform="rotate(0 -2.99 30.2)"/><ellipse cx="3.37" cy="22.2" rx="0.9" ry="0.5" fill="#55703c" transform="rotate(-20 3.37 22.2)"/><ellipse cx="-2.15" cy="37.2" rx="1" ry="0.8" fill="#ebe4cf" transform="rotate(0 -2.15 37.2)"/><ellipse cx="2.16" cy="38.6" rx="0.8" ry="0.7" fill="#ebe4cf" transform="rotate(0 2.16 38.6)"/><ellipse cx="1.88" cy="42.8" rx="2.3" ry="1.8" fill="#a21a2e" transform="rotate(20 1.88 42.8)"/><ellipse cx="2.69" cy="43.7" rx="1.2" ry="1" fill="#7e1424" transform="rotate(0 2.69 43.7)"/><ellipse cx="-0.21" cy="44.7" rx="1.2" ry="0.7" fill="#55703c" transform="rotate(25 -0.21 44.7)"/><ellipse cx="-3.92" cy="41.8" rx="1" ry="0.9" fill="#ebe4cf" transform="rotate(0 -3.92 41.8)"/><ellipse cx="-4.29" cy="47.4" rx="1.7" ry="2.2" fill="#bb2a66" transform="rotate(-10 -4.29 47.4)"/><ellipse cx="-2.27" cy="51.3" rx="1.4" ry="1" fill="#ebe4cf" transform="rotate(20 -2.27 51.3)"/><ellipse cx="0.72" cy="49.6" rx="1.1" ry="0.6" fill="#55703c" transform="rotate(-30 0.72 49.6)"/><ellipse cx="3.33" cy="50.9" rx="1" ry="1.2" fill="#ebe4cf" transform="rotate(0 3.33 50.9)"/><ellipse cx="0.54" cy="54.2" rx="1.1" ry="0.8" fill="#ebe4cf" transform="rotate(-15 0.54 54.2)"/><ellipse cx="-3.85" cy="54.6" rx="0.9" ry="0.6" fill="#55703c" transform="rotate(20 -3.85 54.6)"/><ellipse cx="-2.23" cy="59.6" rx="2.6" ry="2.2" fill="#bb2a66" transform="rotate(15 -2.23 59.6)"/><ellipse cx="-1.42" cy="60.4" rx="1.3" ry="1.1" fill="#9a1f55" transform="rotate(0 -1.42 60.4)"/><ellipse cx="2.97" cy="58" rx="1" ry="1.3" fill="#ebe4cf" transform="rotate(0 2.97 58)"/><ellipse cx="1.99" cy="62.6" rx="1.1" ry="0.6" fill="#55703c" transform="rotate(30 1.99 62.6)"/><ellipse cx="-4.2" cy="64.6" rx="0.9" ry="0.8" fill="#ebe4cf" transform="rotate(0 -4.2 64.6)"/><ellipse cx="1.61" cy="66.6" rx="1.4" ry="1" fill="#ebe4cf" transform="rotate(-20 1.61 66.6)"/><ellipse cx="-2.56" cy="71.6" rx="2.2" ry="2" fill="#bb2a66" transform="rotate(-15 -2.56 71.6)"/><ellipse cx="0.63" cy="70" rx="1" ry="0.6" fill="#55703c" transform="rotate(-25 0.63 70)"/><ellipse cx="3.05" cy="72.6" rx="0.9" ry="1.1" fill="#ebe4cf" transform="rotate(0 3.05 72.6)"/><ellipse cx="-4.13" cy="76" rx="0.9" ry="0.5" fill="#55703c" transform="rotate(20 -4.13 76)"/><ellipse cx="0.47" cy="77" rx="1.1" ry="0.8" fill="#ebe4cf" transform="rotate(10 0.47 77)"/><ellipse cx="1.5" cy="82" rx="2.3" ry="2" fill="#bb2a66" transform="rotate(20 1.5 82)"/><ellipse cx="0.7" cy="82.7" rx="1.1" ry="1" fill="#9a1f55" transform="rotate(0 0.7 82.7)"/><ellipse cx="-3.31" cy="81" rx="1" ry="0.9" fill="#ebe4cf" transform="rotate(0 -3.31 81)"/><ellipse cx="3.48" cy="79" rx="0.9" ry="0.5" fill="#55703c" transform="rotate(-30 3.48 79)"/><ellipse cx="-2.47" cy="86.6" rx="1.2" ry="0.9" fill="#ebe4cf" transform="rotate(15 -2.47 86.6)"/><ellipse cx="2.53" cy="87.6" rx="1" ry="0.8" fill="#ebe4cf" transform="rotate(0 2.53 87.6)"/><ellipse cx="-0.46" cy="88.6" rx="0.9" ry="0.5" fill="#55703c" transform="rotate(0 -0.46 88.6)"/><path d="M-1.86,14.6 l2.2,1.6 l2.2,-1.6 l0.5,3 h-5.4z" fill="#a21a2e"/><path d="M3.06,21 L5.13,33" fill="none" stroke="#e5b29a" stroke-linecap="round" stroke-width="4"/><ellipse cx="3.06" cy="21.2" rx="2.7" ry="3.5" fill="#ad9654"/><ellipse cx="3.26" cy="21.2" rx="2.1" ry="2.9" fill="#8f2233"/><path d="M5.13,33 L-6.86,35" fill="none" stroke="#e5b29a" stroke-linecap="round" stroke-width="3.3"/><ellipse cx="-6.86" cy="35" rx="2" ry="2.3" fill="#e5b29a"/><ellipse cx="0.44" cy="5.6" rx="5.2" ry="5.6" fill="#2b2224"/><ellipse cx="-2.06" cy="9.2" rx="3.2" ry="4.8" fill="#e5b29a"/><ellipse cx="-0.76" cy="4.0" rx="4.6" ry="3.2" fill="#2b2224"/><ellipse cx="-2.76" cy="11.6" rx="1.0" ry="0.45" fill="#b3202e"/><ellipse cx="-4.26" cy="8.7" rx="0.8" ry="0.4" fill="#4a2e2a" opacity="0.8"/></g></g><rect x="0.5" y="0.5" width="93" height="143" fill="none" stroke="#ffffff" stroke-opacity="0.45"/></svg></div>
<div class="t b" style="left:864px;top:390px"><svg width="94" height="144" viewBox="0 0 94 144"><rect width="94" height="144" fill="url(#bg)"/><rect width="94" height="144" fill="url(#vg)"/><rect width="94" height="144" fill="url(#hg)"/><ellipse cx="39.6" cy="134.23" rx="12.6" ry="2.27" fill="#cbc6ce" opacity="0.5" filter="url(#soft2)"/><g filter="url(#soft)"><g transform="translate(37.6 11) scale(1.26)"><path d="M2.2,89.3 l3.2,0 l0.4,4.2 l-5.6,2.4z" fill="#d79c80"/><path d="M-4.6,97.7 l4.4,-3.1 l5.6,-2.5 l0.7,0.6 l-0.1,4.9 l-0.7,0 l-0.2,-3.1 l-5.2,3.6z" fill="#98102a"/><path d="M-0.6,90.8 l3.2,0 l0.4,4.2 l-5.6,2.4z" fill="#d79c80"/><path d="M-7.4,99.2 l4.4,-3.1 l5.6,-2.5 l0.7,0.6 l-0.1,4.9 l-0.7,0 l-0.2,-3.1 l-5.2,3.6z" fill="#b3142b"/><rect x="-0.54" y="12" width="4" height="7" fill="#d79c80"/><polygon points="-0.84,16.8 -4.75,18.4 -5.96,21.5 -6.99,27 -6.24,34.5 -7.38,43 -6.75,91.5 6.85,91.5 8.02,43 6.96,34.5 7.81,27 6.84,21.5 5.65,18.4 3.76,16.8" fill="#ad9654" stroke="#ad9654" stroke-width="0.8" stroke-linejoin="round"/><polygon points="3.74,27 3.33,34.5 3.78,43 3.11,91.5 6.85,91.5 8.02,43 6.96,34.5 7.81,27" fill="#927a3e" opacity="0.32"/><polygon points="-0.84,16.8 -4.75,18.4 -5.96,21.5 -6.99,27 -6.24,34.5 -7.38,43 -6.75,91.5 6.85,91.5 8.02,43 6.96,34.5 7.81,27 6.84,21.5 5.65,18.4 3.76,16.8" fill="url(#fl)" opacity="0.85"/><ellipse cx="-2.18" cy="24.3" rx="2.6" ry="2" fill="#a21a2e" transform="rotate(-20 -2.18 24.3)"/><ellipse cx="-1.09" cy="25.3" rx="1.3" ry="1.1" fill="#7e1424" transform="rotate(0 -1.09 25.3)"/><ellipse cx="1.33" cy="23" rx="1.5" ry="1.1" fill="#a21a2e" transform="rotate(15 1.33 23)"/><ellipse cx="1.91" cy="26.6" rx="1.3" ry="0.7" fill="#55703c" transform="rotate(30 1.91 26.6)"/><ellipse cx="-3.89" cy="26.9" rx="1.1" ry="0.6" fill="#55703c" transform="rotate(-30 -3.89 26.9)"/><ellipse cx="3.39" cy="28.9" rx="1.5" ry="1.9" fill="#bb2a66" transform="rotate(10 3.39 28.9)"/><ellipse cx="1.58" cy="30.8" rx="1" ry="0.6" fill="#55703c" transform="rotate(0 1.58 30.8)"/><ellipse cx="-2.21" cy="30.2" rx="0.9" ry="0.7" fill="#ebe4cf" transform="rotate(0 -2.21 30.2)"/><ellipse cx="4.23" cy="22.2" rx="0.9" ry="0.5" fill="#55703c" transform="rotate(-20 4.23 22.2)"/><ellipse cx="-1.45" cy="37.2" rx="1" ry="0.8" fill="#ebe4cf" transform="rotate(0 -1.45 37.2)"/><ellipse cx="2.84" cy="38.6" rx="0.8" ry="0.7" fill="#ebe4cf" transform="rotate(0 2.84 38.6)"/><ellipse cx="2.52" cy="42.8" rx="2.3" ry="1.8" fill="#a21a2e" transform="rotate(20 2.52 42.8)"/><ellipse cx="3.31" cy="43.7" rx="1.2" ry="1" fill="#7e1424" transform="rotate(0 3.31 43.7)"/><ellipse cx="0.41" cy="44.7" rx="1.2" ry="0.7" fill="#55703c" transform="rotate(25 0.41 44.7)"/><ellipse cx="-3.28" cy="41.8" rx="1" ry="0.9" fill="#ebe4cf" transform="rotate(0 -3.28 41.8)"/><ellipse cx="-3.71" cy="47.4" rx="1.7" ry="2.2" fill="#bb2a66" transform="rotate(-10 -3.71 47.4)"/><ellipse cx="-1.73" cy="51.3" rx="1.4" ry="1" fill="#ebe4cf" transform="rotate(20 -1.73 51.3)"/><ellipse cx="1.28" cy="49.6" rx="1.1" ry="0.6" fill="#55703c" transform="rotate(-30 1.28 49.6)"/><ellipse cx="3.87" cy="50.9" rx="1" ry="1.2" fill="#ebe4cf" transform="rotate(0 3.87 50.9)"/><ellipse cx="1.05" cy="54.2" rx="1.1" ry="0.8" fill="#ebe4cf" transform="rotate(-15 1.05 54.2)"/><ellipse cx="-3.35" cy="54.6" rx="0.9" ry="0.6" fill="#55703c" transform="rotate(20 -3.35 54.6)"/><ellipse cx="-1.78" cy="59.6" rx="2.6" ry="2.2" fill="#bb2a66" transform="rotate(15 -1.78 59.6)"/><ellipse cx="-0.98" cy="60.4" rx="1.3" ry="1.1" fill="#9a1f55" transform="rotate(0 -0.98 60.4)"/><ellipse cx="3.43" cy="58" rx="1" ry="1.3" fill="#ebe4cf" transform="rotate(0 3.43 58)"/><ellipse cx="2.41" cy="62.6" rx="1.1" ry="0.6" fill="#55703c" transform="rotate(30 2.41 62.6)"/><ellipse cx="-3.8" cy="64.6" rx="0.9" ry="0.8" fill="#ebe4cf" transform="rotate(0 -3.8 64.6)"/><ellipse cx="1.99" cy="66.6" rx="1.4" ry="1" fill="#ebe4cf" transform="rotate(-20 1.99 66.6)"/><ellipse cx="-2.24" cy="71.6" rx="2.2" ry="2" fill="#bb2a66" transform="rotate(-15 -2.24 71.6)"/><ellipse cx="0.97" cy="70" rx="1" ry="0.6" fill="#55703c" transform="rotate(-25 0.97 70)"/><ellipse cx="3.35" cy="72.6" rx="0.9" ry="1.1" fill="#ebe4cf" transform="rotate(0 3.35 72.6)"/><ellipse cx="-3.87" cy="76" rx="0.9" ry="0.5" fill="#55703c" transform="rotate(20 -3.87 76)"/><ellipse cx="0.73" cy="77" rx="1.1" ry="0.8" fill="#ebe4cf" transform="rotate(10 0.73 77)"/><ellipse cx="1.7" cy="82" rx="2.3" ry="2" fill="#bb2a66" transform="rotate(20 1.7 82)"/><ellipse cx="0.9" cy="82.7" rx="1.1" ry="1" fill="#9a1f55" transform="rotate(0 0.9 82.7)"/><ellipse cx="-3.09" cy="81" rx="1" ry="0.9" fill="#ebe4cf" transform="rotate(0 -3.09 81)"/><ellipse cx="3.72" cy="79" rx="0.9" ry="0.5" fill="#55703c" transform="rotate(-30 3.72 79)"/><ellipse cx="-2.33" cy="86.6" rx="1.2" ry="0.9" fill="#ebe4cf" transform="rotate(15 -2.33 86.6)"/><ellipse cx="2.67" cy="87.6" rx="1" ry="0.8" fill="#ebe4cf" transform="rotate(0 2.67 87.6)"/><ellipse cx="-0.34" cy="88.6" rx="0.9" ry="0.5" fill="#55703c" transform="rotate(0 -0.34 88.6)"/><path d="M-0.74,14.6 l2.2,1.6 l2.2,-1.6 l0.5,3 h-5.4z" fill="#a21a2e"/><path d="M3.94,21 L5.87,33" fill="none" stroke="#e5b29a" stroke-linecap="round" stroke-width="4"/><ellipse cx="3.94" cy="21.2" rx="2.7" ry="3.5" fill="#ad9654"/><ellipse cx="4.14" cy="21.2" rx="2.1" ry="2.9" fill="#8f2233"/><path d="M5.87,33 L-6.14,35" fill="none" stroke="#e5b29a" stroke-linecap="round" stroke-width="3.3"/><ellipse cx="-6.14" cy="35" rx="2" ry="2.3" fill="#e5b29a"/><ellipse cx="1.56" cy="5.6" rx="5.2" ry="5.6" fill="#2b2224"/><ellipse cx="-0.94" cy="9.2" rx="3.2" ry="4.8" fill="#e5b29a"/><ellipse cx="0.36" cy="4.0" rx="4.6" ry="3.2" fill="#2b2224"/><ellipse cx="-1.64" cy="11.6" rx="1.0" ry="0.45" fill="#b3202e"/><ellipse cx="-3.14" cy="8.7" rx="0.8" ry="0.4" fill="#4a2e2a" opacity="0.8"/></g></g><rect x="0.5" y="0.5" width="93" height="143" fill="none" stroke="#ffffff" stroke-opacity="0.45"/></svg></div>
<div class="t b" style="left:1030px;top:390px"><svg width="94" height="144" viewBox="0 0 94 144"><rect width="94" height="144" fill="url(#bg)"/><rect width="94" height="144" fill="url(#vg)"/><rect width="94" height="144" fill="url(#hg)"/><ellipse cx="37.6" cy="135.07" rx="12.87" ry="2.32" fill="#cbc6ce" opacity="0.5" filter="url(#soft2)"/><g filter="url(#soft)"><g transform="translate(35.6 9.2) scale(1.29)"><path d="M2.2,89.3 l3.2,0 l0.4,4.2 l-5.6,2.4z" fill="#d79c80"/><path d="M-4.6,97.7 l4.4,-3.1 l5.6,-2.5 l0.7,0.6 l-0.1,4.9 l-0.7,0 l-0.2,-3.1 l-5.2,3.6z" fill="#98102a"/><path d="M-0.6,90.8 l3.2,0 l0.4,4.2 l-5.6,2.4z" fill="#d79c80"/><path d="M-7.4,99.2 l4.4,-3.1 l5.6,-2.5 l0.7,0.6 l-0.1,4.9 l-0.7,0 l-0.2,-3.1 l-5.2,3.6z" fill="#b3142b"/><rect x="0.84" y="12" width="4" height="7" fill="#d79c80"/><polygon points="0.54,16.8 -3.61,18.4 -4.88,21.5 -5.98,27 -5.33,34.5 -6.59,43 -6.63,91.5 6.97,91.5 8.81,43 7.87,34.5 8.82,27 7.92,21.5 6.79,18.4 5.14,16.8" fill="#ad9654" stroke="#ad9654" stroke-width="0.8" stroke-linejoin="round"/><polygon points="4.75,27 4.24,34.5 4.57,43 3.23,91.5 6.97,91.5 8.81,43 7.87,34.5 8.82,27" fill="#927a3e" opacity="0.32"/><polygon points="0.54,16.8 -3.61,18.4 -4.88,21.5 -5.98,27 -5.33,34.5 -6.59,43 -6.63,91.5 6.97,91.5 8.81,43 7.87,34.5 8.82,27 7.92,21.5 6.79,18.4 5.14,16.8" fill="url(#fl)" opacity="0.85"/><ellipse cx="-1.13" cy="24.3" rx="2.6" ry="2" fill="#a21a2e" transform="rotate(-20 -1.13 24.3)"/><ellipse cx="-0.05" cy="25.3" rx="1.3" ry="1.1" fill="#7e1424" transform="rotate(0 -0.05 25.3)"/><ellipse cx="2.4" cy="23" rx="1.5" ry="1.1" fill="#a21a2e" transform="rotate(15 2.4 23)"/><ellipse cx="2.93" cy="26.6" rx="1.3" ry="0.7" fill="#55703c" transform="rotate(30 2.93 26.6)"/><ellipse cx="-2.88" cy="26.9" rx="1.1" ry="0.6" fill="#55703c" transform="rotate(-30 -2.88 26.9)"/><ellipse cx="4.38" cy="28.9" rx="1.5" ry="1.9" fill="#bb2a66" transform="rotate(10 4.38 28.9)"/><ellipse cx="2.54" cy="30.8" rx="1" ry="0.6" fill="#55703c" transform="rotate(0 2.54 30.8)"/><ellipse cx="-1.24" cy="30.2" rx="0.9" ry="0.7" fill="#ebe4cf" transform="rotate(0 -1.24 30.2)"/><ellipse cx="5.31" cy="22.2" rx="0.9" ry="0.5" fill="#55703c" transform="rotate(-20 5.31 22.2)"/><ellipse cx="-0.58" cy="37.2" rx="1" ry="0.8" fill="#ebe4cf" transform="rotate(0 -0.58 37.2)"/><ellipse cx="3.69" cy="38.6" rx="0.8" ry="0.7" fill="#ebe4cf" transform="rotate(0 3.69 38.6)"/><ellipse cx="3.31" cy="42.8" rx="2.3" ry="1.8" fill="#a21a2e" transform="rotate(20 3.31 42.8)"/><ellipse cx="4.09" cy="43.7" rx="1.2" ry="1" fill="#7e1424" transform="rotate(0 4.09 43.7)"/><ellipse cx="1.17" cy="44.7" rx="1.2" ry="0.7" fill="#55703c" transform="rotate(25 1.17 44.7)"/><ellipse cx="-2.47" cy="41.8" rx="1" ry="0.9" fill="#ebe4cf" transform="rotate(0 -2.47 41.8)"/><ellipse cx="-2.98" cy="47.4" rx="1.7" ry="2.2" fill="#bb2a66" transform="rotate(-10 -2.98 47.4)"/><ellipse cx="-1.05" cy="51.3" rx="1.4" ry="1" fill="#ebe4cf" transform="rotate(20 -1.05 51.3)"/><ellipse cx="1.98" cy="49.6" rx="1.1" ry="0.6" fill="#55703c" transform="rotate(-30 1.98 49.6)"/><ellipse cx="4.55" cy="50.9" rx="1" ry="1.2" fill="#ebe4cf" transform="rotate(0 4.55 50.9)"/><ellipse cx="1.69" cy="54.2" rx="1.1" ry="0.8" fill="#ebe4cf" transform="rotate(-15 1.69 54.2)"/><ellipse cx="-2.72" cy="54.6" rx="0.9" ry="0.6" fill="#55703c" transform="rotate(20 -2.72 54.6)"/><ellipse cx="-1.22" cy="59.6" rx="2.6" ry="2.2" fill="#bb2a66" transform="rotate(15 -1.22 59.6)"/><ellipse cx="-0.43" cy="60.4" rx="1.3" ry="1.1" fill="#9a1f55" transform="rotate(0 -0.43 60.4)"/><ellipse cx="4.02" cy="58" rx="1" ry="1.3" fill="#ebe4cf" transform="rotate(0 4.02 58)"/><ellipse cx="2.93" cy="62.6" rx="1.1" ry="0.6" fill="#55703c" transform="rotate(30 2.93 62.6)"/><ellipse cx="-3.31" cy="64.6" rx="0.9" ry="0.8" fill="#ebe4cf" transform="rotate(0 -3.31 64.6)"/><ellipse cx="2.45" cy="66.6" rx="1.4" ry="1" fill="#ebe4cf" transform="rotate(-20 2.45 66.6)"/><ellipse cx="-1.85" cy="71.6" rx="2.2" ry="2" fill="#bb2a66" transform="rotate(-15 -1.85 71.6)"/><ellipse cx="1.38" cy="70" rx="1" ry="0.6" fill="#55703c" transform="rotate(-25 1.38 70)"/><ellipse cx="3.73" cy="72.6" rx="0.9" ry="1.1" fill="#ebe4cf" transform="rotate(0 3.73 72.6)"/><ellipse cx="-3.53" cy="76" rx="0.9" ry="0.5" fill="#55703c" transform="rotate(20 -3.53 76)"/><ellipse cx="1.05" cy="77" rx="1.1" ry="0.8" fill="#ebe4cf" transform="rotate(10 1.05 77)"/><ellipse cx="1.95" cy="82" rx="2.3" ry="2" fill="#bb2a66" transform="rotate(20 1.95 82)"/><ellipse cx="1.14" cy="82.7" rx="1.1" ry="1" fill="#9a1f55" transform="rotate(0 1.14 82.7)"/><ellipse cx="-2.83" cy="81" rx="1" ry="0.9" fill="#ebe4cf" transform="rotate(0 -2.83 81)"/><ellipse cx="4.01" cy="79" rx="0.9" ry="0.5" fill="#55703c" transform="rotate(-30 4.01 79)"/><ellipse cx="-2.14" cy="86.6" rx="1.2" ry="0.9" fill="#ebe4cf" transform="rotate(15 -2.14 86.6)"/><ellipse cx="2.84" cy="87.6" rx="1" ry="0.8" fill="#ebe4cf" transform="rotate(0 2.84 87.6)"/><ellipse cx="-0.18" cy="88.6" rx="0.9" ry="0.5" fill="#55703c" transform="rotate(0 -0.18 88.6)"/><path d="M0.64,14.6 l2.2,1.6 l2.2,-1.6 l0.5,3 h-5.4z" fill="#a21a2e"/><path d="M5.03,21 L6.8,33" fill="none" stroke="#e5b29a" stroke-linecap="round" stroke-width="4"/><ellipse cx="5.03" cy="21.2" rx="2.7" ry="3.5" fill="#ad9654"/><ellipse cx="5.23" cy="21.2" rx="2.1" ry="2.9" fill="#8f2233"/><path d="M6.8,33 L-5.24,35" fill="none" stroke="#e5b29a" stroke-linecap="round" stroke-width="3.3"/><ellipse cx="-5.24" cy="35" rx="2" ry="2.3" fill="#e5b29a"/><ellipse cx="2.94" cy="5.6" rx="5.2" ry="5.6" fill="#2b2224"/><ellipse cx="0.44" cy="9.2" rx="3.2" ry="4.8" fill="#e5b29a"/><ellipse cx="1.74" cy="4.0" rx="4.6" ry="3.2" fill="#2b2224"/><ellipse cx="-0.26" cy="11.6" rx="1.0" ry="0.45" fill="#b3202e"/><ellipse cx="-1.76" cy="8.7" rx="0.8" ry="0.4" fill="#4a2e2a" opacity="0.8"/></g></g><rect x="0.5" y="0.5" width="93" height="143" fill="none" stroke="#ffffff" stroke-opacity="0.45"/></svg></div>
<div class="t b" style="left:1196px;top:390px"><svg width="94" height="144" viewBox="0 0 94 144"><rect width="94" height="144" fill="url(#bg)"/><rect width="94" height="144" fill="url(#vg)"/><rect width="94" height="144" fill="url(#hg)"/><ellipse cx="37.3" cy="135.04" rx="12.98" ry="2.34" fill="#cbc6ce" opacity="0.5" filter="url(#soft2)"/><g filter="url(#soft)"><g transform="translate(35.3 8.1) scale(1.3)"><path d="M2.2,89.3 l3.2,0 l0.4,4.2 l-5.6,2.4z" fill="#d79c80"/><path d="M-4.6,97.7 l4.4,-3.1 l5.6,-2.5 l0.7,0.6 l-0.1,4.9 l-0.7,0 l-0.2,-3.1 l-5.2,3.6z" fill="#98102a"/><path d="M-0.6,90.8 l3.2,0 l0.4,4.2 l-5.6,2.4z" fill="#d79c80"/><path d="M-7.4,99.2 l4.4,-3.1 l5.6,-2.5 l0.7,0.6 l-0.1,4.9 l-0.7,0 l-0.2,-3.1 l-5.2,3.6z" fill="#b3142b"/><rect x="-1.1" y="12" width="4" height="7" fill="#d79c80"/><polygon points="-1.4,16.8 -5.2,18.4 -6.4,21.5 -7.4,27 -6.6,34.5 -7.7,43 -6.8,91.5 6.8,91.5 7.7,43 6.6,34.5 7.4,27 6.4,21.5 5.2,18.4 3.2,16.8" fill="#ad9654" stroke="#ad9654" stroke-width="0.8" stroke-linejoin="round"/><polygon points="3.33,27 2.97,34.5 3.47,43 3.06,91.5 6.8,91.5 7.7,43 6.6,34.5 7.4,27" fill="#927a3e" opacity="0.32"/><polygon points="-1.4,16.8 -5.2,18.4 -6.4,21.5 -7.4,27 -6.6,34.5 -7.7,43 -6.8,91.5 6.8,91.5 7.7,43 6.6,34.5 7.4,27 6.4,21.5 5.2,18.4 3.2,16.8" fill="url(#fl)" opacity="0.85"/><ellipse cx="-2.6" cy="24.3" rx="2.6" ry="2" fill="#a21a2e" transform="rotate(-20 -2.6 24.3)"/><ellipse cx="-1.5" cy="25.3" rx="1.3" ry="1.1" fill="#7e1424" transform="rotate(0 -1.5 25.3)"/><ellipse cx="0.9" cy="23" rx="1.5" ry="1.1" fill="#a21a2e" transform="rotate(15 0.9 23)"/><ellipse cx="1.5" cy="26.6" rx="1.3" ry="0.7" fill="#55703c" transform="rotate(30 1.5 26.6)"/><ellipse cx="-4.3" cy="26.9" rx="1.1" ry="0.6" fill="#55703c" transform="rotate(-30 -4.3 26.9)"/><ellipse cx="3" cy="28.9" rx="1.5" ry="1.9" fill="#bb2a66" transform="rotate(10 3 28.9)"/><ellipse cx="1.2" cy="30.8" rx="1" ry="0.6" fill="#55703c" transform="rotate(0 1.2 30.8)"/><ellipse cx="-2.6" cy="30.2" rx="0.9" ry="0.7" fill="#ebe4cf" transform="rotate(0 -2.6 30.2)"/><ellipse cx="3.8" cy="22.2" rx="0.9" ry="0.5" fill="#55703c" transform="rotate(-20 3.8 22.2)"/><ellipse cx="-1.8" cy="37.2" rx="1" ry="0.8" fill="#ebe4cf" transform="rotate(0 -1.8 37.2)"/><ellipse cx="2.5" cy="38.6" rx="0.8" ry="0.7" fill="#ebe4cf" transform="rotate(0 2.5 38.6)"/><ellipse cx="2.2" cy="42.8" rx="2.3" ry="1.8" fill="#a21a2e" transform="rotate(20 2.2 42.8)"/><ellipse cx="3" cy="43.7" rx="1.2" ry="1" fill="#7e1424" transform="rotate(0 3 43.7)"/><ellipse cx="0.1" cy="44.7" rx="1.2" ry="0.7" fill="#55703c" transform="rotate(25 0.1 44.7)"/><ellipse cx="-3.6" cy="41.8" rx="1" ry="0.9" fill="#ebe4cf" transform="rotate(0 -3.6 41.8)"/><ellipse cx="-4" cy="47.4" rx="1.7" ry="2.2" fill="#bb2a66" transform="rotate(-10 -4 47.4)"/><ellipse cx="-2" cy="51.3" rx="1.4" ry="1" fill="#ebe4cf" transform="rotate(20 -2 51.3)"/><ellipse cx="1" cy="49.6" rx="1.1" ry="0.6" fill="#55703c" transform="rotate(-30 1 49.6)"/><ellipse cx="3.6" cy="50.9" rx="1" ry="1.2" fill="#ebe4cf" transform="rotate(0 3.6 50.9)"/><ellipse cx="0.8" cy="54.2" rx="1.1" ry="0.8" fill="#ebe4cf" transform="rotate(-15 0.8 54.2)"/><ellipse cx="-3.6" cy="54.6" rx="0.9" ry="0.6" fill="#55703c" transform="rotate(20 -3.6 54.6)"/><ellipse cx="-2" cy="59.6" rx="2.6" ry="2.2" fill="#bb2a66" transform="rotate(15 -2 59.6)"/><ellipse cx="-1.2" cy="60.4" rx="1.3" ry="1.1" fill="#9a1f55" transform="rotate(0 -1.2 60.4)"/><ellipse cx="3.2" cy="58" rx="1" ry="1.3" fill="#ebe4cf" transform="rotate(0 3.2 58)"/><ellipse cx="2.2" cy="62.6" rx="1.1" ry="0.6" fill="#55703c" transform="rotate(30 2.2 62.6)"/><ellipse cx="-4" cy="64.6" rx="0.9" ry="0.8" fill="#ebe4cf" transform="rotate(0 -4 64.6)"/><ellipse cx="1.8" cy="66.6" rx="1.4" ry="1" fill="#ebe4cf" transform="rotate(-20 1.8 66.6)"/><ellipse cx="-2.4" cy="71.6" rx="2.2" ry="2" fill="#bb2a66" transform="rotate(-15 -2.4 71.6)"/><ellipse cx="0.8" cy="70" rx="1" ry="0.6" fill="#55703c" transform="rotate(-25 0.8 70)"/><ellipse cx="3.2" cy="72.6" rx="0.9" ry="1.1" fill="#ebe4cf" transform="rotate(0 3.2 72.6)"/><ellipse cx="-4" cy="76" rx="0.9" ry="0.5" fill="#55703c" transform="rotate(20 -4 76)"/><ellipse cx="0.6" cy="77" rx="1.1" ry="0.8" fill="#ebe4cf" transform="rotate(10 0.6 77)"/><ellipse cx="1.6" cy="82" rx="2.3" ry="2" fill="#bb2a66" transform="rotate(20 1.6 82)"/><ellipse cx="0.8" cy="82.7" rx="1.1" ry="1" fill="#9a1f55" transform="rotate(0 0.8 82.7)"/><ellipse cx="-3.2" cy="81" rx="1" ry="0.9" fill="#ebe4cf" transform="rotate(0 -3.2 81)"/><ellipse cx="3.6" cy="79" rx="0.9" ry="0.5" fill="#55703c" transform="rotate(-30 3.6 79)"/><ellipse cx="-2.4" cy="86.6" rx="1.2" ry="0.9" fill="#ebe4cf" transform="rotate(15 -2.4 86.6)"/><ellipse cx="2.6" cy="87.6" rx="1" ry="0.8" fill="#ebe4cf" transform="rotate(0 2.6 87.6)"/><ellipse cx="-0.4" cy="88.6" rx="0.9" ry="0.5" fill="#55703c" transform="rotate(0 -0.4 88.6)"/><path d="M-1.3,14.6 l2.2,1.6 l2.2,-1.6 l0.5,3 h-5.4z" fill="#a21a2e"/><path d="M3.5,21 L5.5,33" fill="none" stroke="#e5b29a" stroke-linecap="round" stroke-width="4"/><ellipse cx="3.5" cy="21.2" rx="2.7" ry="3.5" fill="#ad9654"/><ellipse cx="3.7" cy="21.2" rx="2.1" ry="2.9" fill="#8f2233"/><path d="M5.5,33 L-6.5,35" fill="none" stroke="#e5b29a" stroke-linecap="round" stroke-width="3.3"/><ellipse cx="-6.5" cy="35" rx="2" ry="2.3" fill="#e5b29a"/><ellipse cx="1" cy="5.6" rx="5.2" ry="5.6" fill="#2b2224"/><ellipse cx="-1.5" cy="9.2" rx="3.2" ry="4.8" fill="#e5b29a"/><ellipse cx="-0.2" cy="4.0" rx="4.6" ry="3.2" fill="#2b2224"/><ellipse cx="-2.2" cy="11.6" rx="1.0" ry="0.45" fill="#b3202e"/><ellipse cx="-3.7" cy="8.7" rx="0.8" ry="0.4" fill="#4a2e2a" opacity="0.8"/></g></g><rect x="0.5" y="0.5" width="93" height="143" fill="none" stroke="#ffffff" stroke-opacity="0.45"/></svg></div>
<div class="t b" style="left:1362px;top:390px"><svg width="94" height="144" viewBox="0 0 94 144"><rect width="94" height="144" fill="url(#bg)"/><rect width="94" height="144" fill="url(#vg)"/><rect width="94" height="144" fill="url(#hg)"/><g filter="url(#soft)"><g transform="translate(44 3.4) scale(2.63)"><rect x="-0.99" y="12" width="4" height="7" fill="#d79c80"/><polygon points="-1.29,16.8 -5.13,18.4 -6.33,21.5 -7.35,27 -6.56,34.5 -7.68,43 -6.89,91.5 6.71,91.5 7.72,43 6.64,34.5 7.45,27 6.47,21.5 5.27,18.4 3.31,16.8" fill="#ad9654" stroke="#ad9654" stroke-width="0.8" stroke-linejoin="round"/><polygon points="3.38,27 3.01,34.5 3.48,43 2.97,91.5 6.71,91.5 7.72,43 6.64,34.5 7.45,27" fill="#927a3e" opacity="0.32"/><polygon points="-1.29,16.8 -5.13,18.4 -6.33,21.5 -7.35,27 -6.56,34.5 -7.68,43 -6.89,91.5 6.71,91.5 7.72,43 6.64,34.5 7.45,27 6.47,21.5 5.27,18.4 3.31,16.8" fill="url(#fl)" opacity="0.85"/><ellipse cx="-2.54" cy="24.3" rx="2.6" ry="2" fill="#a21a2e" transform="rotate(-20 -2.54 24.3)"/><ellipse cx="-1.44" cy="25.3" rx="1.3" ry="1.1" fill="#7e1424" transform="rotate(0 -1.44 25.3)"/><ellipse cx="0.96" cy="23" rx="1.5" ry="1.1" fill="#a21a2e" transform="rotate(15 0.96 23)"/><ellipse cx="1.55" cy="26.6" rx="1.3" ry="0.7" fill="#55703c" transform="rotate(30 1.55 26.6)"/><ellipse cx="-4.25" cy="26.9" rx="1.1" ry="0.6" fill="#55703c" transform="rotate(-30 -4.25 26.9)"/><ellipse cx="3.05" cy="28.9" rx="1.5" ry="1.9" fill="#bb2a66" transform="rotate(10 3.05 28.9)"/><ellipse cx="1.24" cy="30.8" rx="1" ry="0.6" fill="#55703c" transform="rotate(0 1.24 30.8)"/><ellipse cx="-2.55" cy="30.2" rx="0.9" ry="0.7" fill="#ebe4cf" transform="rotate(0 -2.55 30.2)"/><ellipse cx="3.86" cy="22.2" rx="0.9" ry="0.5" fill="#55703c" transform="rotate(-20 3.86 22.2)"/><ellipse cx="-1.77" cy="37.2" rx="1" ry="0.8" fill="#ebe4cf" transform="rotate(0 -1.77 37.2)"/><ellipse cx="2.53" cy="38.6" rx="0.8" ry="0.7" fill="#ebe4cf" transform="rotate(0 2.53 38.6)"/><ellipse cx="2.22" cy="42.8" rx="2.3" ry="1.8" fill="#a21a2e" transform="rotate(20 2.22 42.8)"/><ellipse cx="3.01" cy="43.7" rx="1.2" ry="1" fill="#7e1424" transform="rotate(0 3.01 43.7)"/><ellipse cx="0.11" cy="44.7" rx="1.2" ry="0.7" fill="#55703c" transform="rotate(25 0.11 44.7)"/><ellipse cx="-3.58" cy="41.8" rx="1" ry="0.9" fill="#ebe4cf" transform="rotate(0 -3.58 41.8)"/><ellipse cx="-3.99" cy="47.4" rx="1.7" ry="2.2" fill="#bb2a66" transform="rotate(-10 -3.99 47.4)"/><ellipse cx="-2" cy="51.3" rx="1.4" ry="1" fill="#ebe4cf" transform="rotate(20 -2 51.3)"/><ellipse cx="1" cy="49.6" rx="1.1" ry="0.6" fill="#55703c" transform="rotate(-30 1 49.6)"/><ellipse cx="3.6" cy="50.9" rx="1" ry="1.2" fill="#ebe4cf" transform="rotate(0 3.6 50.9)"/><ellipse cx="0.79" cy="54.2" rx="1.1" ry="0.8" fill="#ebe4cf" transform="rotate(-15 0.79 54.2)"/><ellipse cx="-3.61" cy="54.6" rx="0.9" ry="0.6" fill="#55703c" transform="rotate(20 -3.61 54.6)"/><ellipse cx="3.18" cy="58" rx="1" ry="1.3" fill="#ebe4cf" transform="rotate(0 3.18 58)"/><path d="M-1.19,14.6 l2.2,1.6 l2.2,-1.6 l0.5,3 h-5.4z" fill="#a21a2e"/><path d="M3.07,21 L5.53,37" fill="none" stroke="#e5b29a" stroke-linecap="round" stroke-width="4"/><ellipse cx="3.07" cy="21.2" rx="2.7" ry="3.5" fill="#ad9654"/><ellipse cx="3.27" cy="21.2" rx="2.1" ry="2.9" fill="#8f2233"/><path d="M5.53,37 L-3.44,23" fill="none" stroke="#e5b29a" stroke-linecap="round" stroke-width="3.3"/><ellipse cx="-3.44" cy="23" rx="2" ry="2.3" fill="#e5b29a"/><ellipse cx="1.11" cy="5.6" rx="5.2" ry="5.6" fill="#2b2224"/><ellipse cx="-1.39" cy="9.2" rx="3.2" ry="4.8" fill="#e5b29a"/><ellipse cx="-0.09" cy="4.0" rx="4.6" ry="3.2" fill="#2b2224"/><ellipse cx="-2.09" cy="11.6" rx="1.0" ry="0.45" fill="#b3202e"/><ellipse cx="-3.59" cy="8.7" rx="0.8" ry="0.4" fill="#4a2e2a" opacity="0.8"/></g></g><rect x="0.5" y="0.5" width="93" height="143" fill="none" stroke="#ffffff" stroke-opacity="0.45"/></svg></div>
<div class="t b" style="left:1528px;top:390px"><svg width="94" height="144" viewBox="0 0 94 144"><rect width="94" height="144" fill="url(#bg)"/><rect width="94" height="144" fill="url(#vg)"/><rect width="94" height="144" fill="url(#hg)"/><g filter="url(#soft)"><g transform="translate(50 5.4) scale(2.63)"><rect x="-1.1" y="12" width="4" height="7" fill="#d79c80"/><polygon points="-1.4,16.8 -5.2,18.4 -6.4,21.5 -7.4,27 -6.6,34.5 -7.7,43 -6.8,91.5 6.8,91.5 7.7,43 6.6,34.5 7.4,27 6.4,21.5 5.2,18.4 3.2,16.8" fill="#ad9654" stroke="#ad9654" stroke-width="0.8" stroke-linejoin="round"/><polygon points="3.33,27 2.97,34.5 3.47,43 3.06,91.5 6.8,91.5 7.7,43 6.6,34.5 7.4,27" fill="#927a3e" opacity="0.32"/><polygon points="-1.4,16.8 -5.2,18.4 -6.4,21.5 -7.4,27 -6.6,34.5 -7.7,43 -6.8,91.5 6.8,91.5 7.7,43 6.6,34.5 7.4,27 6.4,21.5 5.2,18.4 3.2,16.8" fill="url(#fl)" opacity="0.85"/><ellipse cx="-2.6" cy="24.3" rx="2.6" ry="2" fill="#a21a2e" transform="rotate(-20 -2.6 24.3)"/><ellipse cx="-1.5" cy="25.3" rx="1.3" ry="1.1" fill="#7e1424" transform="rotate(0 -1.5 25.3)"/><ellipse cx="0.9" cy="23" rx="1.5" ry="1.1" fill="#a21a2e" transform="rotate(15 0.9 23)"/><ellipse cx="1.5" cy="26.6" rx="1.3" ry="0.7" fill="#55703c" transform="rotate(30 1.5 26.6)"/><ellipse cx="-4.3" cy="26.9" rx="1.1" ry="0.6" fill="#55703c" transform="rotate(-30 -4.3 26.9)"/><ellipse cx="3" cy="28.9" rx="1.5" ry="1.9" fill="#bb2a66" transform="rotate(10 3 28.9)"/><ellipse cx="1.2" cy="30.8" rx="1" ry="0.6" fill="#55703c" transform="rotate(0 1.2 30.8)"/><ellipse cx="-2.6" cy="30.2" rx="0.9" ry="0.7" fill="#ebe4cf" transform="rotate(0 -2.6 30.2)"/><ellipse cx="3.8" cy="22.2" rx="0.9" ry="0.5" fill="#55703c" transform="rotate(-20 3.8 22.2)"/><ellipse cx="-1.8" cy="37.2" rx="1" ry="0.8" fill="#ebe4cf" transform="rotate(0 -1.8 37.2)"/><ellipse cx="2.5" cy="38.6" rx="0.8" ry="0.7" fill="#ebe4cf" transform="rotate(0 2.5 38.6)"/><ellipse cx="2.2" cy="42.8" rx="2.3" ry="1.8" fill="#a21a2e" transform="rotate(20 2.2 42.8)"/><ellipse cx="3" cy="43.7" rx="1.2" ry="1" fill="#7e1424" transform="rotate(0 3 43.7)"/><ellipse cx="0.1" cy="44.7" rx="1.2" ry="0.7" fill="#55703c" transform="rotate(25 0.1 44.7)"/><ellipse cx="-3.6" cy="41.8" rx="1" ry="0.9" fill="#ebe4cf" transform="rotate(0 -3.6 41.8)"/><ellipse cx="-4" cy="47.4" rx="1.7" ry="2.2" fill="#bb2a66" transform="rotate(-10 -4 47.4)"/><ellipse cx="-2" cy="51.3" rx="1.4" ry="1" fill="#ebe4cf" transform="rotate(20 -2 51.3)"/><ellipse cx="1" cy="49.6" rx="1.1" ry="0.6" fill="#55703c" transform="rotate(-30 1 49.6)"/><ellipse cx="3.6" cy="50.9" rx="1" ry="1.2" fill="#ebe4cf" transform="rotate(0 3.6 50.9)"/><ellipse cx="0.8" cy="54.2" rx="1.1" ry="0.8" fill="#ebe4cf" transform="rotate(-15 0.8 54.2)"/><ellipse cx="-3.6" cy="54.6" rx="0.9" ry="0.6" fill="#55703c" transform="rotate(20 -3.6 54.6)"/><path d="M-1.3,14.6 l2.2,1.6 l2.2,-1.6 l0.5,3 h-5.4z" fill="#a21a2e"/><path d="M3,21 L5.5,37" fill="none" stroke="#e5b29a" stroke-linecap="round" stroke-width="4"/><ellipse cx="3" cy="21.2" rx="2.7" ry="3.5" fill="#ad9654"/><ellipse cx="3.2" cy="21.2" rx="2.1" ry="2.9" fill="#8f2233"/><path d="M5.5,37 L-3.5,23" fill="none" stroke="#e5b29a" stroke-linecap="round" stroke-width="3.3"/><ellipse cx="-3.5" cy="23" rx="2" ry="2.3" fill="#e5b29a"/><ellipse cx="1" cy="5.6" rx="5.2" ry="5.6" fill="#2b2224"/><ellipse cx="-1.5" cy="9.2" rx="3.2" ry="4.8" fill="#e5b29a"/><ellipse cx="-0.2" cy="4.0" rx="4.6" ry="3.2" fill="#2b2224"/><ellipse cx="-2.2" cy="11.6" rx="1.0" ry="0.45" fill="#b3202e"/><ellipse cx="-3.7" cy="8.7" rx="0.8" ry="0.4" fill="#4a2e2a" opacity="0.8"/></g></g><rect x="0.5" y="0.5" width="93" height="143" fill="none" stroke="#ffffff" stroke-opacity="0.45"/></svg></div>
<div class="t b" style="left:34px;top:564px"><svg width="94" height="144" viewBox="0 0 94 144"><rect width="94" height="144" fill="url(#bg)"/><rect width="94" height="144" fill="url(#vg)"/><rect width="94" height="144" fill="url(#hg)"/><g filter="url(#soft)"><g transform="translate(41.2 14) scale(2.2)"><rect x="1.82" y="12" width="4" height="7" fill="#d79c80"/><polygon points="1.52,16.8 -4.79,18.4 -6.22,21.5 -4.74,27 -4.92,34.5 -6.97,43 -9.17,91.5 2.83,91.5 8.03,43 7.28,34.5 8.26,27 10.58,21.5 9.61,18.4 6.12,16.8" fill="#ad9654" stroke="#ad9654" stroke-width="0.8" stroke-linejoin="round"/><polygon points="4.68,27 3.93,34.5 3.91,43 -0.47,91.5 2.83,91.5 8.03,43 7.28,34.5 8.26,27" fill="#927a3e" opacity="0.32"/><polygon points="1.52,16.8 -4.79,18.4 -6.22,21.5 -4.74,27 -4.92,34.5 -6.97,43 -9.17,91.5 2.83,91.5 8.03,43 7.28,34.5 8.26,27 10.58,21.5 9.61,18.4 6.12,16.8" fill="url(#fl)" opacity="0.85"/><ellipse cx="-0.57" cy="24.3" rx="2.6" ry="2" fill="#a21a2e" transform="rotate(-20 -0.57 24.3)"/><ellipse cx="0.43" cy="25.3" rx="1.3" ry="1.1" fill="#7e1424" transform="rotate(0 0.43 25.3)"/><ellipse cx="2.94" cy="23" rx="1.5" ry="1.1" fill="#a21a2e" transform="rotate(15 2.94 23)"/><ellipse cx="3.25" cy="26.6" rx="1.3" ry="0.7" fill="#55703c" transform="rotate(30 3.25 26.6)"/><ellipse cx="-2.42" cy="26.9" rx="1.1" ry="0.6" fill="#55703c" transform="rotate(-30 -2.42 26.9)"/><ellipse cx="4.53" cy="28.9" rx="1.5" ry="1.9" fill="#bb2a66" transform="rotate(10 4.53 28.9)"/><ellipse cx="2.64" cy="30.8" rx="1" ry="0.6" fill="#55703c" transform="rotate(0 2.64 30.8)"/><ellipse cx="-1.02" cy="30.2" rx="0.9" ry="0.7" fill="#ebe4cf" transform="rotate(0 -1.02 30.2)"/><ellipse cx="5.82" cy="22.2" rx="0.9" ry="0.5" fill="#55703c" transform="rotate(-20 5.82 22.2)"/><ellipse cx="-0.78" cy="37.2" rx="1" ry="0.8" fill="#ebe4cf" transform="rotate(0 -0.78 37.2)"/><ellipse cx="3.31" cy="38.6" rx="0.8" ry="0.7" fill="#ebe4cf" transform="rotate(0 3.31 38.6)"/><ellipse cx="2.69" cy="42.8" rx="2.3" ry="1.8" fill="#a21a2e" transform="rotate(20 2.69 42.8)"/><ellipse cx="3.4" cy="43.7" rx="1.2" ry="1" fill="#7e1424" transform="rotate(0 3.4 43.7)"/><ellipse cx="0.5" cy="44.7" rx="1.2" ry="0.7" fill="#55703c" transform="rotate(25 0.5 44.7)"/><ellipse cx="-2.88" cy="41.8" rx="1" ry="0.9" fill="#ebe4cf" transform="rotate(0 -2.88 41.8)"/><ellipse cx="-3.7" cy="47.4" rx="1.7" ry="2.2" fill="#bb2a66" transform="rotate(-10 -3.7 47.4)"/><ellipse cx="-2.05" cy="51.3" rx="1.4" ry="1" fill="#ebe4cf" transform="rotate(20 -2.05 51.3)"/><ellipse cx="1" cy="49.6" rx="1.1" ry="0.6" fill="#55703c" transform="rotate(-30 1 49.6)"/><ellipse cx="3.44" cy="50.9" rx="1" ry="1.2" fill="#ebe4cf" transform="rotate(0 3.44 50.9)"/><ellipse cx="0.46" cy="54.2" rx="1.1" ry="0.8" fill="#ebe4cf" transform="rotate(-15 0.46 54.2)"/><ellipse cx="-3.86" cy="54.6" rx="0.9" ry="0.6" fill="#55703c" transform="rotate(20 -3.86 54.6)"/><ellipse cx="-2.68" cy="59.6" rx="2.6" ry="2.2" fill="#bb2a66" transform="rotate(15 -2.68 59.6)"/><ellipse cx="-1.96" cy="60.4" rx="1.3" ry="1.1" fill="#9a1f55" transform="rotate(0 -1.96 60.4)"/><ellipse cx="2.51" cy="58" rx="1" ry="1.3" fill="#ebe4cf" transform="rotate(0 2.51 58)"/><ellipse cx="1.18" cy="62.6" rx="1.1" ry="0.6" fill="#55703c" transform="rotate(30 1.18 62.6)"/><path d="M1.62,14.6 l2.2,1.6 l2.2,-1.6 l0.5,3 h-5.4z" fill="#a21a2e"/><path d="M9.75,20.5 L17.79,26.5" fill="none" stroke="#d79c80" stroke-linecap="round" stroke-width="4.3"/><path d="M-5.79,21 L-9.2,33" fill="none" stroke="#e5b29a" stroke-linecap="round" stroke-width="4.3"/><ellipse cx="9.61" cy="21.4" rx="2.6" ry="3.6" fill="#ad9654"/><ellipse cx="-5.19" cy="21.4" rx="2.4" ry="3.4" fill="#ad9654"/><ellipse cx="9.91" cy="21.6" rx="2.0" ry="2.9" fill="#8f2233"/><ellipse cx="-5.19" cy="21.0" rx="1.4" ry="2.0" fill="#963040"/><path d="M17.79,26.5 L10.3,13.3" fill="none" stroke="#d79c80" stroke-linecap="round" stroke-width="3.5"/><ellipse cx="10.3" cy="13.3" rx="2.9" ry="4.35" fill="#d79c80"/><path d="M-9.2,33 L-11.35,48" fill="none" stroke="#e5b29a" stroke-linecap="round" stroke-width="3.5"/><ellipse cx="-11.35" cy="48" rx="2" ry="2.3" fill="#e5b29a"/><ellipse cx="3.82" cy="5.4" rx="5.3" ry="5.4" fill="#2b2224"/><ellipse cx="4.02" cy="9.3" rx="3.7" ry="4.7" fill="#e5b29a"/><ellipse cx="3.92" cy="3.8" rx="4.5" ry="3.0" fill="#2b2224"/><ellipse cx="-0.08" cy="6.6" rx="1.0" ry="2.6" fill="#2b2224"/><ellipse cx="7.92" cy="6.6" rx="1.0" ry="2.6" fill="#2b2224"/><ellipse cx="4.02" cy="11.6" rx="1.0" ry="0.45" fill="#b3202e"/><ellipse cx="2.52" cy="8.7" rx="0.8" ry="0.4" fill="#4a2e2a" opacity="0.8"/><ellipse cx="5.62" cy="8.7" rx="0.8" ry="0.4" fill="#4a2e2a" opacity="0.8"/></g></g><rect x="0.5" y="0.5" width="93" height="143" fill="none" stroke="#ffffff" stroke-opacity="0.45"/></svg></div>
<div class="t b" style="left:200px;top:564px"><svg width="94" height="144" viewBox="0 0 94 144"><rect width="94" height="144" fill="url(#bg)"/><rect width="94" height="144" fill="url(#vg)"/><rect width="94" height="144" fill="url(#hg)"/><g filter="url(#soft)"><g transform="translate(40.5 12.7) scale(2.25)"><rect x="2.09" y="12" width="4" height="7" fill="#d79c80"/><polygon points="1.79,16.8 -4.62,18.4 -6.07,21.5 -4.62,27 -4.83,34.5 -6.93,43 -9.39,91.5 2.61,91.5 8.07,43 7.37,34.5 8.38,27 10.73,21.5 9.78,18.4 6.39,16.8" fill="#ad9654" stroke="#ad9654" stroke-width="0.8" stroke-linejoin="round"/><polygon points="4.81,27 4.01,34.5 3.95,43 -0.69,91.5 2.61,91.5 8.07,43 7.37,34.5 8.38,27" fill="#927a3e" opacity="0.32"/><polygon points="1.79,16.8 -4.62,18.4 -6.07,21.5 -4.62,27 -4.83,34.5 -6.93,43 -9.39,91.5 2.61,91.5 8.07,43 7.37,34.5 8.38,27 10.73,21.5 9.78,18.4 6.39,16.8" fill="url(#fl)" opacity="0.85"/><ellipse cx="-0.43" cy="24.3" rx="2.6" ry="2" fill="#a21a2e" transform="rotate(-20 -0.43 24.3)"/><ellipse cx="0.56" cy="25.3" rx="1.3" ry="1.1" fill="#7e1424" transform="rotate(0 0.56 25.3)"/><ellipse cx="3.08" cy="23" rx="1.5" ry="1.1" fill="#a21a2e" transform="rotate(15 3.08 23)"/><ellipse cx="3.37" cy="26.6" rx="1.3" ry="0.7" fill="#55703c" transform="rotate(30 3.37 26.6)"/><ellipse cx="-2.3" cy="26.9" rx="1.1" ry="0.6" fill="#55703c" transform="rotate(-30 -2.3 26.9)"/><ellipse cx="4.65" cy="28.9" rx="1.5" ry="1.9" fill="#bb2a66" transform="rotate(10 4.65 28.9)"/><ellipse cx="2.74" cy="30.8" rx="1" ry="0.6" fill="#55703c" transform="rotate(0 2.74 30.8)"/><ellipse cx="-0.91" cy="30.2" rx="0.9" ry="0.7" fill="#ebe4cf" transform="rotate(0 -0.91 30.2)"/><ellipse cx="5.97" cy="22.2" rx="0.9" ry="0.5" fill="#55703c" transform="rotate(-20 5.97 22.2)"/><ellipse cx="-0.71" cy="37.2" rx="1" ry="0.8" fill="#ebe4cf" transform="rotate(0 -0.71 37.2)"/><ellipse cx="3.37" cy="38.6" rx="0.8" ry="0.7" fill="#ebe4cf" transform="rotate(0 3.37 38.6)"/><ellipse cx="2.73" cy="42.8" rx="2.3" ry="1.8" fill="#a21a2e" transform="rotate(20 2.73 42.8)"/><ellipse cx="3.44" cy="43.7" rx="1.2" ry="1" fill="#7e1424" transform="rotate(0 3.44 43.7)"/><ellipse cx="0.53" cy="44.7" rx="1.2" ry="0.7" fill="#55703c" transform="rotate(25 0.53 44.7)"/><ellipse cx="-2.84" cy="41.8" rx="1" ry="0.9" fill="#ebe4cf" transform="rotate(0 -2.84 41.8)"/><ellipse cx="-3.68" cy="47.4" rx="1.7" ry="2.2" fill="#bb2a66" transform="rotate(-10 -3.68 47.4)"/><ellipse cx="-2.05" cy="51.3" rx="1.4" ry="1" fill="#ebe4cf" transform="rotate(20 -2.05 51.3)"/><ellipse cx="1.01" cy="49.6" rx="1.1" ry="0.6" fill="#55703c" transform="rotate(-30 1.01 49.6)"/><ellipse cx="3.43" cy="50.9" rx="1" ry="1.2" fill="#ebe4cf" transform="rotate(0 3.43 50.9)"/><ellipse cx="0.44" cy="54.2" rx="1.1" ry="0.8" fill="#ebe4cf" transform="rotate(-15 0.44 54.2)"/><ellipse cx="-3.88" cy="54.6" rx="0.9" ry="0.6" fill="#55703c" transform="rotate(20 -3.88 54.6)"/><ellipse cx="-2.73" cy="59.6" rx="2.6" ry="2.2" fill="#bb2a66" transform="rotate(15 -2.73 59.6)"/><ellipse cx="-2.02" cy="60.4" rx="1.3" ry="1.1" fill="#9a1f55" transform="rotate(0 -2.02 60.4)"/><ellipse cx="2.46" cy="58" rx="1" ry="1.3" fill="#ebe4cf" transform="rotate(0 2.46 58)"/><ellipse cx="1.11" cy="62.6" rx="1.1" ry="0.6" fill="#55703c" transform="rotate(30 1.11 62.6)"/><path d="M1.89,14.6 l2.2,1.6 l2.2,-1.6 l0.5,3 h-5.4z" fill="#a21a2e"/><path d="M9.91,20.5 L17.92,26.5" fill="none" stroke="#d79c80" stroke-linecap="round" stroke-width="4.3"/><path d="M-5.63,21 L-9.11,33" fill="none" stroke="#e5b29a" stroke-linecap="round" stroke-width="4.3"/><ellipse cx="9.77" cy="21.4" rx="2.6" ry="3.6" fill="#ad9654"/><ellipse cx="-5.03" cy="21.4" rx="2.4" ry="3.4" fill="#ad9654"/><ellipse cx="10.07" cy="21.6" rx="2.0" ry="2.9" fill="#8f2233"/><ellipse cx="-5.03" cy="21.0" rx="1.4" ry="2.0" fill="#963040"/><path d="M17.92,26.5 L10.5,13.3" fill="none" stroke="#d79c80" stroke-linecap="round" stroke-width="3.5"/><ellipse cx="10.5" cy="13.3" rx="2.9" ry="4.35" fill="#d79c80"/><path d="M-9.11,33 L-11.34,48" fill="none" stroke="#e5b29a" stroke-linecap="round" stroke-width="3.5"/><ellipse cx="-11.34" cy="48" rx="2" ry="2.3" fill="#e5b29a"/><ellipse cx="4.09" cy="5.4" rx="5.3" ry="5.4" fill="#2b2224"/><ellipse cx="4.29" cy="9.3" rx="3.7" ry="4.7" fill="#e5b29a"/><ellipse cx="4.19" cy="3.8" rx="4.5" ry="3.0" fill="#2b2224"/><ellipse cx="0.19" cy="6.6" rx="1.0" ry="2.6" fill="#2b2224"/><ellipse cx="8.19" cy="6.6" rx="1.0" ry="2.6" fill="#2b2224"/><ellipse cx="4.29" cy="11.6" rx="1.0" ry="0.45" fill="#b3202e"/><ellipse cx="2.79" cy="8.7" rx="0.8" ry="0.4" fill="#4a2e2a" opacity="0.8"/><ellipse cx="5.89" cy="8.7" rx="0.8" ry="0.4" fill="#4a2e2a" opacity="0.8"/></g></g><rect x="0.5" y="0.5" width="93" height="143" fill="none" stroke="#ffffff" stroke-opacity="0.45"/></svg></div>
<div class="t b" style="left:366px;top:564px"><svg width="94" height="144" viewBox="0 0 94 144"><rect width="94" height="144" fill="url(#bg)"/><rect width="94" height="144" fill="url(#vg)"/><rect width="94" height="144" fill="url(#hg)"/><g filter="url(#soft)"><g transform="translate(44.5 8.1) scale(2.39)"><rect x="-0.16" y="12" width="4" height="7" fill="#d79c80"/><polygon points="-0.46,16.8 -6.04,18.4 -7.35,21.5 -5.65,27 -5.53,34.5 -7.24,43 -7.53,91.5 4.47,91.5 7.76,43 6.67,34.5 7.35,27 9.45,21.5 8.36,18.4 4.14,16.8" fill="#ad9654" stroke="#ad9654" stroke-width="0.8" stroke-linejoin="round"/><polygon points="3.77,27 3.32,34.5 3.63,43 1.17,91.5 4.47,91.5 7.76,43 6.67,34.5 7.35,27" fill="#927a3e" opacity="0.32"/><polygon points="-0.46,16.8 -6.04,18.4 -7.35,21.5 -5.65,27 -5.53,34.5 -7.24,43 -7.53,91.5 4.47,91.5 7.76,43 6.67,34.5 7.35,27 9.45,21.5 8.36,18.4 4.14,16.8" fill="url(#fl)" opacity="0.85"/><ellipse cx="-1.59" cy="24.3" rx="2.6" ry="2" fill="#a21a2e" transform="rotate(-20 -1.59 24.3)"/><ellipse cx="-0.55" cy="25.3" rx="1.3" ry="1.1" fill="#7e1424" transform="rotate(0 -0.55 25.3)"/><ellipse cx="1.87" cy="23" rx="1.5" ry="1.1" fill="#a21a2e" transform="rotate(15 1.87 23)"/><ellipse cx="2.32" cy="26.6" rx="1.3" ry="0.7" fill="#55703c" transform="rotate(30 2.32 26.6)"/><ellipse cx="-3.34" cy="26.9" rx="1.1" ry="0.6" fill="#55703c" transform="rotate(-30 -3.34 26.9)"/><ellipse cx="3.7" cy="28.9" rx="1.5" ry="1.9" fill="#bb2a66" transform="rotate(10 3.7 28.9)"/><ellipse cx="1.88" cy="30.8" rx="1" ry="0.6" fill="#55703c" transform="rotate(0 1.88 30.8)"/><ellipse cx="-1.8" cy="30.2" rx="0.9" ry="0.7" fill="#ebe4cf" transform="rotate(0 -1.8 30.2)"/><ellipse cx="4.72" cy="22.2" rx="0.9" ry="0.5" fill="#55703c" transform="rotate(-20 4.72 22.2)"/><ellipse cx="-1.28" cy="37.2" rx="1" ry="0.8" fill="#ebe4cf" transform="rotate(0 -1.28 37.2)"/><ellipse cx="2.85" cy="38.6" rx="0.8" ry="0.7" fill="#ebe4cf" transform="rotate(0 2.85 38.6)"/><ellipse cx="2.41" cy="42.8" rx="2.3" ry="1.8" fill="#a21a2e" transform="rotate(20 2.41 42.8)"/><ellipse cx="3.15" cy="43.7" rx="1.2" ry="1" fill="#7e1424" transform="rotate(0 3.15 43.7)"/><ellipse cx="0.29" cy="44.7" rx="1.2" ry="0.7" fill="#55703c" transform="rotate(25 0.29 44.7)"/><ellipse cx="-3.2" cy="41.8" rx="1" ry="0.9" fill="#ebe4cf" transform="rotate(0 -3.2 41.8)"/><ellipse cx="-3.8" cy="47.4" rx="1.7" ry="2.2" fill="#bb2a66" transform="rotate(-10 -3.8 47.4)"/><ellipse cx="-2" cy="51.3" rx="1.4" ry="1" fill="#ebe4cf" transform="rotate(20 -2 51.3)"/><ellipse cx="0.99" cy="49.6" rx="1.1" ry="0.6" fill="#55703c" transform="rotate(-30 0.99 49.6)"/><ellipse cx="3.47" cy="50.9" rx="1" ry="1.2" fill="#ebe4cf" transform="rotate(0 3.47 50.9)"/><ellipse cx="0.62" cy="54.2" rx="1.1" ry="0.8" fill="#ebe4cf" transform="rotate(-15 0.62 54.2)"/><ellipse cx="-3.68" cy="54.6" rx="0.9" ry="0.6" fill="#55703c" transform="rotate(20 -3.68 54.6)"/><ellipse cx="-2.3" cy="59.6" rx="2.6" ry="2.2" fill="#bb2a66" transform="rotate(15 -2.3 59.6)"/><ellipse cx="-1.55" cy="60.4" rx="1.3" ry="1.1" fill="#9a1f55" transform="rotate(0 -1.55 60.4)"/><ellipse cx="2.82" cy="58" rx="1" ry="1.3" fill="#ebe4cf" transform="rotate(0 2.82 58)"/><path d="M-0.36,14.6 l2.2,1.6 l2.2,-1.6 l0.5,3 h-5.4z" fill="#a21a2e"/><path d="M8.07,21 L17.38,26" fill="none" stroke="#d79c80" stroke-linecap="round" stroke-width="4.3"/><path d="M-7.38,19.5 L-12.58,25" fill="none" stroke="#e5b29a" stroke-linecap="round" stroke-width="4.3"/><ellipse cx="8.47" cy="21.4" rx="2.6" ry="3.6" fill="#ad9654"/><ellipse cx="-6.33" cy="21.4" rx="2.4" ry="3.4" fill="#ad9654"/><ellipse cx="8.77" cy="21.6" rx="2.0" ry="2.9" fill="#8f2233"/><ellipse cx="-6.33" cy="21.0" rx="1.4" ry="2.0" fill="#963040"/><path d="M17.38,26 L9.09,12.3" fill="none" stroke="#d79c80" stroke-linecap="round" stroke-width="3.5"/><ellipse cx="9.09" cy="12.3" rx="2.7" ry="4.05" fill="#d79c80"/><path d="M-12.58,25 L-8.5,36.5" fill="none" stroke="#e5b29a" stroke-linecap="round" stroke-width="3.5"/><ellipse cx="-8.5" cy="36.5" rx="2" ry="2.3" fill="#e5b29a"/><ellipse cx="1.84" cy="5.4" rx="5.3" ry="5.4" fill="#2b2224"/><ellipse cx="2.04" cy="9.3" rx="3.7" ry="4.7" fill="#e5b29a"/><ellipse cx="1.94" cy="3.8" rx="4.5" ry="3.0" fill="#2b2224"/><ellipse cx="-2.06" cy="6.6" rx="1.0" ry="2.6" fill="#2b2224"/><ellipse cx="5.94" cy="6.6" rx="1.0" ry="2.6" fill="#2b2224"/><ellipse cx="2.04" cy="11.6" rx="1.0" ry="0.45" fill="#b3202e"/><ellipse cx="0.54" cy="8.7" rx="0.8" ry="0.4" fill="#4a2e2a" opacity="0.8"/><ellipse cx="3.64" cy="8.7" rx="0.8" ry="0.4" fill="#4a2e2a" opacity="0.8"/></g></g><rect x="0.5" y="0.5" width="93" height="143" fill="none" stroke="#ffffff" stroke-opacity="0.45"/></svg></div>
<div class="t b" style="left:532px;top:564px"><svg width="94" height="144" viewBox="0 0 94 144"><rect width="94" height="144" fill="url(#bg)"/><rect width="94" height="144" fill="url(#vg)"/><rect width="94" height="144" fill="url(#hg)"/><ellipse cx="42" cy="139.03" rx="13.5" ry="2.43" fill="#cbc6ce" opacity="0.5" filter="url(#soft2)"/><g filter="url(#soft)"><g transform="translate(40 7) scale(1.35)"><path d="M2.2,89.3 l3.2,0 l0.4,4.2 l-5.6,2.4z" fill="#d79c80"/><path d="M-4.6,97.7 l4.4,-3.1 l5.6,-2.5 l0.7,0.6 l-0.1,4.9 l-0.7,0 l-0.2,-3.1 l-5.2,3.6z" fill="#98102a"/><path d="M-0.6,90.8 l3.2,0 l0.4,4.2 l-5.6,2.4z" fill="#d79c80"/><path d="M-7.4,99.2 l4.4,-3.1 l5.6,-2.5 l0.7,0.6 l-0.1,4.9 l-0.7,0 l-0.2,-3.1 l-5.2,3.6z" fill="#b3142b"/><rect x="3.93" y="12" width="4" height="7" fill="#d79c80"/><polygon points="3.63,16.8 -2.36,18.4 -3.75,21.5 -2.17,27 -2.22,34.5 -4.12,43 -5.5,91.5 6.5,91.5 10.88,43 9.98,34.5 10.83,27 13.05,21.5 12.04,18.4 8.23,16.8" fill="#ad9654" stroke="#ad9654" stroke-width="0.8" stroke-linejoin="round"/><polygon points="7.25,27 6.63,34.5 6.75,43 3.2,91.5 6.5,91.5 10.88,43 9.98,34.5 10.83,27" fill="#927a3e" opacity="0.32"/><polygon points="3.63,16.8 -2.36,18.4 -3.75,21.5 -2.17,27 -2.22,34.5 -4.12,43 -5.5,91.5 6.5,91.5 10.88,43 9.98,34.5 10.83,27 13.05,21.5 12.04,18.4 8.23,16.8" fill="url(#fl)" opacity="0.85"/><ellipse cx="1.95" cy="24.3" rx="2.6" ry="2" fill="#a21a2e" transform="rotate(-20 1.95 24.3)"/><ellipse cx="2.97" cy="25.3" rx="1.3" ry="1.1" fill="#7e1424" transform="rotate(0 2.97 25.3)"/><ellipse cx="5.44" cy="23" rx="1.5" ry="1.1" fill="#a21a2e" transform="rotate(15 5.44 23)"/><ellipse cx="5.81" cy="26.6" rx="1.3" ry="0.7" fill="#55703c" transform="rotate(30 5.81 26.6)"/><ellipse cx="0.14" cy="26.9" rx="1.1" ry="0.6" fill="#55703c" transform="rotate(-30 0.14 26.9)"/><ellipse cx="7.14" cy="28.9" rx="1.5" ry="1.9" fill="#bb2a66" transform="rotate(10 7.14 28.9)"/><ellipse cx="5.27" cy="30.8" rx="1" ry="0.6" fill="#55703c" transform="rotate(0 5.27 30.8)"/><ellipse cx="1.6" cy="30.2" rx="0.9" ry="0.7" fill="#ebe4cf" transform="rotate(0 1.6 30.2)"/><ellipse cx="8.31" cy="22.2" rx="0.9" ry="0.5" fill="#55703c" transform="rotate(-20 8.31 22.2)"/><ellipse cx="1.97" cy="37.2" rx="1" ry="0.8" fill="#ebe4cf" transform="rotate(0 1.97 37.2)"/><ellipse cx="6.07" cy="38.6" rx="0.8" ry="0.7" fill="#ebe4cf" transform="rotate(0 6.07 38.6)"/><ellipse cx="5.53" cy="42.8" rx="2.3" ry="1.8" fill="#a21a2e" transform="rotate(20 5.53 42.8)"/><ellipse cx="6.26" cy="43.7" rx="1.2" ry="1" fill="#7e1424" transform="rotate(0 6.26 43.7)"/><ellipse cx="3.37" cy="44.7" rx="1.2" ry="0.7" fill="#55703c" transform="rotate(25 3.37 44.7)"/><ellipse cx="-0.06" cy="41.8" rx="1" ry="0.9" fill="#ebe4cf" transform="rotate(0 -0.06 41.8)"/><ellipse cx="-0.78" cy="47.4" rx="1.7" ry="2.2" fill="#bb2a66" transform="rotate(-10 -0.78 47.4)"/><ellipse cx="0.94" cy="51.3" rx="1.4" ry="1" fill="#ebe4cf" transform="rotate(20 0.94 51.3)"/><ellipse cx="3.96" cy="49.6" rx="1.1" ry="0.6" fill="#55703c" transform="rotate(-30 3.96 49.6)"/><ellipse cx="6.42" cy="50.9" rx="1" ry="1.2" fill="#ebe4cf" transform="rotate(0 6.42 50.9)"/><ellipse cx="3.49" cy="54.2" rx="1.1" ry="0.8" fill="#ebe4cf" transform="rotate(-15 3.49 54.2)"/><ellipse cx="-0.82" cy="54.6" rx="0.9" ry="0.6" fill="#55703c" transform="rotate(20 -0.82 54.6)"/><ellipse cx="0.45" cy="59.6" rx="2.6" ry="2.2" fill="#bb2a66" transform="rotate(15 0.45 59.6)"/><ellipse cx="1.18" cy="60.4" rx="1.3" ry="1.1" fill="#9a1f55" transform="rotate(0 1.18 60.4)"/><ellipse cx="5.61" cy="58" rx="1" ry="1.3" fill="#ebe4cf" transform="rotate(0 5.61 58)"/><ellipse cx="4.36" cy="62.6" rx="1.1" ry="0.6" fill="#55703c" transform="rotate(30 4.36 62.6)"/><ellipse cx="-1.8" cy="64.6" rx="0.9" ry="0.8" fill="#ebe4cf" transform="rotate(0 -1.8 64.6)"/><ellipse cx="3.73" cy="66.6" rx="1.4" ry="1" fill="#ebe4cf" transform="rotate(-20 3.73 66.6)"/><ellipse cx="-0.65" cy="71.6" rx="2.2" ry="2" fill="#bb2a66" transform="rotate(-15 -0.65 71.6)"/><ellipse cx="2.56" cy="70" rx="1" ry="0.6" fill="#55703c" transform="rotate(-25 2.56 70)"/><ellipse cx="4.74" cy="72.6" rx="0.9" ry="1.1" fill="#ebe4cf" transform="rotate(0 4.74 72.6)"/><ellipse cx="-2.47" cy="76" rx="0.9" ry="0.5" fill="#55703c" transform="rotate(20 -2.47 76)"/><ellipse cx="1.95" cy="77" rx="1.1" ry="0.8" fill="#ebe4cf" transform="rotate(10 1.95 77)"/><ellipse cx="2.63" cy="82" rx="2.3" ry="2" fill="#bb2a66" transform="rotate(20 2.63 82)"/><ellipse cx="1.8" cy="82.7" rx="1.1" ry="1" fill="#9a1f55" transform="rotate(0 1.8 82.7)"/><ellipse cx="-1.99" cy="81" rx="1" ry="0.9" fill="#ebe4cf" transform="rotate(0 -1.99 81)"/><ellipse cx="4.75" cy="79" rx="0.9" ry="0.5" fill="#55703c" transform="rotate(-30 4.75 79)"/><ellipse cx="-1.54" cy="86.6" rx="1.2" ry="0.9" fill="#ebe4cf" transform="rotate(15 -1.54 86.6)"/><ellipse cx="3.27" cy="87.6" rx="1" ry="0.8" fill="#ebe4cf" transform="rotate(0 3.27 87.6)"/><ellipse cx="0.29" cy="88.6" rx="0.9" ry="0.5" fill="#55703c" transform="rotate(0 0.29 88.6)"/><path d="M3.73,14.6 l2.2,1.6 l2.2,-1.6 l0.5,3 h-5.4z" fill="#a21a2e"/><path d="M12.18,21 L19.86,26.5" fill="none" stroke="#d79c80" stroke-linecap="round" stroke-width="4.3"/><path d="M-3.76,20 L-10.23,28" fill="none" stroke="#e5b29a" stroke-linecap="round" stroke-width="4.3"/><ellipse cx="12.08" cy="21.4" rx="2.6" ry="3.6" fill="#ad9654"/><ellipse cx="-2.72" cy="21.4" rx="2.4" ry="3.4" fill="#ad9654"/><ellipse cx="12.38" cy="21.6" rx="2.0" ry="2.9" fill="#8f2233"/><ellipse cx="-2.72" cy="21.0" rx="1.4" ry="2.0" fill="#963040"/><path d="M19.86,26.5 L13.6,14" fill="none" stroke="#d79c80" stroke-linecap="round" stroke-width="3.5"/><ellipse cx="13.6" cy="14" rx="2.4" ry="3.6" fill="#d79c80"/><path d="M-10.23,28 L-6.09,39" fill="none" stroke="#e5b29a" stroke-linecap="round" stroke-width="3.5"/><ellipse cx="-6.09" cy="39" rx="2" ry="2.3" fill="#e5b29a"/><ellipse cx="5.93" cy="5.4" rx="5.3" ry="5.4" fill="#2b2224"/><ellipse cx="6.13" cy="9.3" rx="3.7" ry="4.7" fill="#e5b29a"/><ellipse cx="6.03" cy="3.8" rx="4.5" ry="3.0" fill="#2b2224"/><ellipse cx="2.03" cy="6.6" rx="1.0" ry="2.6" fill="#2b2224"/><ellipse cx="10.03" cy="6.6" rx="1.0" ry="2.6" fill="#2b2224"/><ellipse cx="6.13" cy="11.6" rx="1.0" ry="0.45" fill="#b3202e"/><ellipse cx="4.63" cy="8.7" rx="0.8" ry="0.4" fill="#4a2e2a" opacity="0.8"/><ellipse cx="7.73" cy="8.7" rx="0.8" ry="0.4" fill="#4a2e2a" opacity="0.8"/></g></g><rect x="0.5" y="0.5" width="93" height="143" fill="none" stroke="#ffffff" stroke-opacity="0.45"/></svg></div>
<div class="t b" style="left:698px;top:564px"><svg width="94" height="144" viewBox="0 0 94 144"><rect width="94" height="144" fill="url(#bg)"/><rect width="94" height="144" fill="url(#vg)"/><rect width="94" height="144" fill="url(#hg)"/><ellipse cx="45.3" cy="139.43" rx="13.5" ry="2.43" fill="#cbc6ce" opacity="0.5" filter="url(#soft2)"/><g filter="url(#soft)"><g transform="translate(43.3 7.4) scale(1.35)"><path d="M2.2,89.3 l3.2,0 l0.4,4.2 l-5.6,2.4z" fill="#d79c80"/><path d="M-4.6,97.7 l4.4,-3.1 l5.6,-2.5 l0.7,0.6 l-0.1,4.9 l-0.7,0 l-0.2,-3.1 l-5.2,3.6z" fill="#98102a"/><path d="M-0.6,90.8 l3.2,0 l0.4,4.2 l-5.6,2.4z" fill="#d79c80"/><path d="M-7.4,99.2 l4.4,-3.1 l5.6,-2.5 l0.7,0.6 l-0.1,4.9 l-0.7,0 l-0.2,-3.1 l-5.2,3.6z" fill="#b3142b"/><rect x="-4.74" y="12" width="4" height="7" fill="#d79c80"/><polygon points="-5.04,16.8 -9.44,18.4 -10.55,21.5 -8.5,27 -7.9,34.5 -9.06,43 -6.23,91.5 5.77,91.5 5.94,43 4.3,34.5 4.5,27 6.25,21.5 4.96,18.4 -0.44,16.8" fill="#ad9654" stroke="#ad9654" stroke-width="0.8" stroke-linejoin="round"/><polygon points="0.92,27 0.95,34.5 1.81,43 2.47,91.5 5.77,91.5 5.94,43 4.3,34.5 4.5,27" fill="#927a3e" opacity="0.32"/><polygon points="-5.04,16.8 -9.44,18.4 -10.55,21.5 -8.5,27 -7.9,34.5 -9.06,43 -6.23,91.5 5.77,91.5 5.94,43 4.3,34.5 4.5,27 6.25,21.5 4.96,18.4 -0.44,16.8" fill="url(#fl)" opacity="0.85"/><ellipse cx="-4.61" cy="24.3" rx="2.6" ry="2" fill="#a21a2e" transform="rotate(-20 -4.61 24.3)"/><ellipse cx="-3.51" cy="25.3" rx="1.3" ry="1.1" fill="#7e1424" transform="rotate(0 -3.51 25.3)"/><ellipse cx="-1.23" cy="23" rx="1.5" ry="1.1" fill="#a21a2e" transform="rotate(15 -1.23 23)"/><ellipse cx="-0.55" cy="26.6" rx="1.3" ry="0.7" fill="#55703c" transform="rotate(30 -0.55 26.6)"/><ellipse cx="-6.19" cy="26.9" rx="1.1" ry="0.6" fill="#55703c" transform="rotate(-30 -6.19 26.9)"/><ellipse cx="0.97" cy="28.9" rx="1.5" ry="1.9" fill="#bb2a66" transform="rotate(10 0.97 28.9)"/><ellipse cx="-0.73" cy="30.8" rx="1" ry="0.6" fill="#55703c" transform="rotate(0 -0.73 30.8)"/><ellipse cx="-4.45" cy="30.2" rx="0.9" ry="0.7" fill="#ebe4cf" transform="rotate(0 -4.45 30.2)"/><ellipse cx="1.57" cy="22.2" rx="0.9" ry="0.5" fill="#55703c" transform="rotate(-20 1.57 22.2)"/><ellipse cx="-3.47" cy="37.2" rx="1" ry="0.8" fill="#ebe4cf" transform="rotate(0 -3.47 37.2)"/><ellipse cx="0.75" cy="38.6" rx="0.8" ry="0.7" fill="#ebe4cf" transform="rotate(0 0.75 38.6)"/><ellipse cx="0.58" cy="42.8" rx="2.3" ry="1.8" fill="#a21a2e" transform="rotate(20 0.58 42.8)"/><ellipse cx="1.38" cy="43.7" rx="1.2" ry="1" fill="#7e1424" transform="rotate(0 1.38 43.7)"/><ellipse cx="-1.42" cy="44.7" rx="1.2" ry="0.7" fill="#55703c" transform="rotate(25 -1.42 44.7)"/><ellipse cx="-5.1" cy="41.8" rx="1" ry="0.9" fill="#ebe4cf" transform="rotate(0 -5.1 41.8)"/><ellipse cx="-5.34" cy="47.4" rx="1.7" ry="2.2" fill="#bb2a66" transform="rotate(-10 -5.34 47.4)"/><ellipse cx="-3.28" cy="51.3" rx="1.4" ry="1" fill="#ebe4cf" transform="rotate(20 -3.28 51.3)"/><ellipse cx="-0.41" cy="49.6" rx="1.1" ry="0.6" fill="#55703c" transform="rotate(-30 -0.41 49.6)"/><ellipse cx="2.16" cy="50.9" rx="1" ry="1.2" fill="#ebe4cf" transform="rotate(0 2.16 50.9)"/><ellipse cx="-0.48" cy="54.2" rx="1.1" ry="0.8" fill="#ebe4cf" transform="rotate(-15 -0.48 54.2)"/><ellipse cx="-4.75" cy="54.6" rx="0.9" ry="0.6" fill="#55703c" transform="rotate(20 -4.75 54.6)"/><ellipse cx="-3.06" cy="59.6" rx="2.6" ry="2.2" fill="#bb2a66" transform="rotate(15 -3.06 59.6)"/><ellipse cx="-2.25" cy="60.4" rx="1.3" ry="1.1" fill="#9a1f55" transform="rotate(0 -2.25 60.4)"/><ellipse cx="1.97" cy="58" rx="1" ry="1.3" fill="#ebe4cf" transform="rotate(0 1.97 58)"/><ellipse cx="1.12" cy="62.6" rx="1.1" ry="0.6" fill="#55703c" transform="rotate(30 1.12 62.6)"/><ellipse cx="-4.87" cy="64.6" rx="0.9" ry="0.8" fill="#ebe4cf" transform="rotate(0 -4.87 64.6)"/><ellipse cx="0.84" cy="66.6" rx="1.4" ry="1" fill="#ebe4cf" transform="rotate(-20 0.84 66.6)"/><ellipse cx="-3.12" cy="71.6" rx="2.2" ry="2" fill="#bb2a66" transform="rotate(-15 -3.12 71.6)"/><ellipse cx="-0.04" cy="70" rx="1" ry="0.6" fill="#55703c" transform="rotate(-25 -0.04 70)"/><ellipse cx="2.37" cy="72.6" rx="0.9" ry="1.1" fill="#ebe4cf" transform="rotate(0 2.37 72.6)"/><ellipse cx="-4.55" cy="76" rx="0.9" ry="0.5" fill="#55703c" transform="rotate(20 -4.55 76)"/><ellipse cx="-0.05" cy="77" rx="1.1" ry="0.8" fill="#ebe4cf" transform="rotate(10 -0.05 77)"/><ellipse cx="1.07" cy="82" rx="2.3" ry="2" fill="#bb2a66" transform="rotate(20 1.07 82)"/><ellipse cx="0.31" cy="82.7" rx="1.1" ry="1" fill="#9a1f55" transform="rotate(0 0.31 82.7)"/><ellipse cx="-3.64" cy="81" rx="1" ry="0.9" fill="#ebe4cf" transform="rotate(0 -3.64 81)"/><ellipse cx="2.93" cy="79" rx="0.9" ry="0.5" fill="#55703c" transform="rotate(-30 2.93 79)"/><ellipse cx="-2.7" cy="86.6" rx="1.2" ry="0.9" fill="#ebe4cf" transform="rotate(15 -2.7 86.6)"/><ellipse cx="2.19" cy="87.6" rx="1" ry="0.8" fill="#ebe4cf" transform="rotate(0 2.19 87.6)"/><ellipse cx="-0.7" cy="88.6" rx="0.9" ry="0.5" fill="#55703c" transform="rotate(0 -0.7 88.6)"/><path d="M-4.94,14.6 l2.2,1.6 l2.2,-1.6 l0.5,3 h-5.4z" fill="#a21a2e"/><path d="M5.43,21 L8.02,35" fill="none" stroke="#d79c80" stroke-linecap="round" stroke-width="4.3"/><path d="M-10.17,21 L-11.43,29.5" fill="none" stroke="#e5b29a" stroke-linecap="round" stroke-width="4.3"/><ellipse cx="5.23" cy="21.4" rx="2.6" ry="3.6" fill="#ad9654"/><ellipse cx="-9.57" cy="21.4" rx="2.4" ry="3.4" fill="#ad9654"/><ellipse cx="5.53" cy="21.6" rx="2.0" ry="2.9" fill="#8f2233"/><ellipse cx="-9.57" cy="21.0" rx="1.4" ry="2.0" fill="#963040"/><path d="M8.02,35 L8.07,48" fill="none" stroke="#d79c80" stroke-linecap="round" stroke-width="3.5"/><ellipse cx="8.07" cy="48" rx="2" ry="2.3" fill="#d79c80"/><path d="M-11.43,29.5 L-1.82,15.5" fill="none" stroke="#e5b29a" stroke-linecap="round" stroke-width="3.5"/><ellipse cx="-1.82" cy="15.5" rx="2.2" ry="3.3" fill="#e5b29a"/><ellipse cx="-2.74" cy="5.4" rx="5.3" ry="5.4" fill="#2b2224"/><ellipse cx="-2.54" cy="9.3" rx="3.7" ry="4.7" fill="#e5b29a"/><ellipse cx="-2.64" cy="3.8" rx="4.5" ry="3.0" fill="#2b2224"/><ellipse cx="-6.64" cy="6.6" rx="1.0" ry="2.6" fill="#2b2224"/><ellipse cx="1.36" cy="6.6" rx="1.0" ry="2.6" fill="#2b2224"/><ellipse cx="-2.54" cy="11.6" rx="1.0" ry="0.45" fill="#b3202e"/><ellipse cx="-4.04" cy="8.7" rx="0.8" ry="0.4" fill="#4a2e2a" opacity="0.8"/><ellipse cx="-0.94" cy="8.7" rx="0.8" ry="0.4" fill="#4a2e2a" opacity="0.8"/></g></g><rect x="0.5" y="0.5" width="93" height="143" fill="none" stroke="#ffffff" stroke-opacity="0.45"/></svg></div>
<div class="t b" style="left:864px;top:564px"><svg width="94" height="144" viewBox="0 0 94 144"><rect width="94" height="144" fill="url(#bg)"/><rect width="94" height="144" fill="url(#vg)"/><rect width="94" height="144" fill="url(#hg)"/><ellipse cx="45" cy="138.45" rx="13.4" ry="2.41" fill="#cbc6ce" opacity="0.5" filter="url(#soft2)"/><g filter="url(#soft)"><g transform="translate(43 7.4) scale(1.34)"><path d="M2.2,89.3 l3.2,0 l0.4,4.2 l-5.6,2.4z" fill="#d79c80"/><path d="M-4.6,97.7 l4.4,-3.1 l5.6,-2.5 l0.7,0.6 l-0.1,4.9 l-0.7,0 l-0.2,-3.1 l-5.2,3.6z" fill="#98102a"/><path d="M-0.6,90.8 l3.2,0 l0.4,4.2 l-5.6,2.4z" fill="#d79c80"/><path d="M-7.4,99.2 l4.4,-3.1 l5.6,-2.5 l0.7,0.6 l-0.1,4.9 l-0.7,0 l-0.2,-3.1 l-5.2,3.6z" fill="#b3142b"/><rect x="-0.66" y="12" width="4" height="7" fill="#d79c80"/><polygon points="-0.96,16.8 -6.1,18.4 -7.35,21.5 -5.52,27 -5.22,34.5 -6.73,43 -5.89,91.5 6.11,91.5 8.27,43 6.98,34.5 7.48,27 9.45,21.5 8.3,18.4 3.64,16.8" fill="#ad9654" stroke="#ad9654" stroke-width="0.8" stroke-linejoin="round"/><polygon points="3.91,27 3.62,34.5 4.14,43 2.81,91.5 6.11,91.5 8.27,43 6.98,34.5 7.48,27" fill="#927a3e" opacity="0.32"/><polygon points="-0.96,16.8 -6.1,18.4 -7.35,21.5 -5.52,27 -5.22,34.5 -6.73,43 -5.89,91.5 6.11,91.5 8.27,43 6.98,34.5 7.48,27 9.45,21.5 8.3,18.4 3.64,16.8" fill="url(#fl)" opacity="0.85"/><ellipse cx="-1.52" cy="24.3" rx="2.6" ry="2" fill="#a21a2e" transform="rotate(-20 -1.52 24.3)"/><ellipse cx="-0.46" cy="25.3" rx="1.3" ry="1.1" fill="#7e1424" transform="rotate(0 -0.46 25.3)"/><ellipse cx="1.91" cy="23" rx="1.5" ry="1.1" fill="#a21a2e" transform="rotate(15 1.91 23)"/><ellipse cx="2.45" cy="26.6" rx="1.3" ry="0.7" fill="#55703c" transform="rotate(30 2.45 26.6)"/><ellipse cx="-3.21" cy="26.9" rx="1.1" ry="0.6" fill="#55703c" transform="rotate(-30 -3.21 26.9)"/><ellipse cx="3.88" cy="28.9" rx="1.5" ry="1.9" fill="#bb2a66" transform="rotate(10 3.88 28.9)"/><ellipse cx="2.1" cy="30.8" rx="1" ry="0.6" fill="#55703c" transform="rotate(0 2.1 30.8)"/><ellipse cx="-1.59" cy="30.2" rx="0.9" ry="0.7" fill="#ebe4cf" transform="rotate(0 -1.59 30.2)"/><ellipse cx="4.75" cy="22.2" rx="0.9" ry="0.5" fill="#55703c" transform="rotate(-20 4.75 22.2)"/><ellipse cx="-0.91" cy="37.2" rx="1" ry="0.8" fill="#ebe4cf" transform="rotate(0 -0.91 37.2)"/><ellipse cx="3.26" cy="38.6" rx="0.8" ry="0.7" fill="#ebe4cf" transform="rotate(0 3.26 38.6)"/><ellipse cx="2.91" cy="42.8" rx="2.3" ry="1.8" fill="#a21a2e" transform="rotate(20 2.91 42.8)"/><ellipse cx="3.68" cy="43.7" rx="1.2" ry="1" fill="#7e1424" transform="rotate(0 3.68 43.7)"/><ellipse cx="0.84" cy="44.7" rx="1.2" ry="0.7" fill="#55703c" transform="rotate(25 0.84 44.7)"/><ellipse cx="-2.72" cy="41.8" rx="1" ry="0.9" fill="#ebe4cf" transform="rotate(0 -2.72 41.8)"/><ellipse cx="-3.19" cy="47.4" rx="1.7" ry="2.2" fill="#bb2a66" transform="rotate(-10 -3.19 47.4)"/><ellipse cx="-1.29" cy="51.3" rx="1.4" ry="1" fill="#ebe4cf" transform="rotate(20 -1.29 51.3)"/><ellipse cx="1.65" cy="49.6" rx="1.1" ry="0.6" fill="#55703c" transform="rotate(-30 1.65 49.6)"/><ellipse cx="4.17" cy="50.9" rx="1" ry="1.2" fill="#ebe4cf" transform="rotate(0 4.17 50.9)"/><ellipse cx="1.39" cy="54.2" rx="1.1" ry="0.8" fill="#ebe4cf" transform="rotate(-15 1.39 54.2)"/><ellipse cx="-2.9" cy="54.6" rx="0.9" ry="0.6" fill="#55703c" transform="rotate(20 -2.9 54.6)"/><ellipse cx="-1.41" cy="59.6" rx="2.6" ry="2.2" fill="#bb2a66" transform="rotate(15 -1.41 59.6)"/><ellipse cx="-0.64" cy="60.4" rx="1.3" ry="1.1" fill="#9a1f55" transform="rotate(0 -0.64 60.4)"/><ellipse cx="3.68" cy="58" rx="1" ry="1.3" fill="#ebe4cf" transform="rotate(0 3.68 58)"/><ellipse cx="2.65" cy="62.6" rx="1.1" ry="0.6" fill="#55703c" transform="rotate(30 2.65 62.6)"/><ellipse cx="-3.42" cy="64.6" rx="0.9" ry="0.8" fill="#ebe4cf" transform="rotate(0 -3.42 64.6)"/><ellipse cx="2.2" cy="66.6" rx="1.4" ry="1" fill="#ebe4cf" transform="rotate(-20 2.2 66.6)"/><ellipse cx="-1.96" cy="71.6" rx="2.2" ry="2" fill="#bb2a66" transform="rotate(-15 -1.96 71.6)"/><ellipse cx="1.18" cy="70" rx="1" ry="0.6" fill="#55703c" transform="rotate(-25 1.18 70)"/><ellipse cx="3.48" cy="72.6" rx="0.9" ry="1.1" fill="#ebe4cf" transform="rotate(0 3.48 72.6)"/><ellipse cx="-3.57" cy="76" rx="0.9" ry="0.5" fill="#55703c" transform="rotate(20 -3.57 76)"/><ellipse cx="0.89" cy="77" rx="1.1" ry="0.8" fill="#ebe4cf" transform="rotate(10 0.89 77)"/><ellipse cx="1.8" cy="82" rx="2.3" ry="2" fill="#bb2a66" transform="rotate(20 1.8 82)"/><ellipse cx="1.01" cy="82.7" rx="1.1" ry="1" fill="#9a1f55" transform="rotate(0 1.01 82.7)"/><ellipse cx="-2.86" cy="81" rx="1" ry="0.9" fill="#ebe4cf" transform="rotate(0 -2.86 81)"/><ellipse cx="3.79" cy="79" rx="0.9" ry="0.5" fill="#55703c" transform="rotate(-30 3.79 79)"/><ellipse cx="-2.16" cy="86.6" rx="1.2" ry="0.9" fill="#ebe4cf" transform="rotate(15 -2.16 86.6)"/><ellipse cx="2.7" cy="87.6" rx="1" ry="0.8" fill="#ebe4cf" transform="rotate(0 2.7 87.6)"/><ellipse cx="-0.24" cy="88.6" rx="0.9" ry="0.5" fill="#55703c" transform="rotate(0 -0.24 88.6)"/><path d="M-0.86,14.6 l2.2,1.6 l2.2,-1.6 l0.5,3 h-5.4z" fill="#a21a2e"/><path d="M8.66,21 L10.67,35" fill="none" stroke="#d79c80" stroke-linecap="round" stroke-width="4.3"/><path d="M-6.94,21 L-12.03,27.5" fill="none" stroke="#e5b29a" stroke-linecap="round" stroke-width="4.3"/><ellipse cx="8.46" cy="21.4" rx="2.6" ry="3.6" fill="#ad9654"/><ellipse cx="-6.34" cy="21.4" rx="2.4" ry="3.4" fill="#ad9654"/><ellipse cx="8.76" cy="21.6" rx="2.0" ry="2.9" fill="#8f2233"/><ellipse cx="-6.34" cy="21.0" rx="1.4" ry="2.0" fill="#963040"/><path d="M10.67,35 L9.7,48" fill="none" stroke="#d79c80" stroke-linecap="round" stroke-width="3.5"/><ellipse cx="9.7" cy="48" rx="2" ry="2.3" fill="#d79c80"/><path d="M-12.03,27.5 L-6.32,12.5" fill="none" stroke="#e5b29a" stroke-linecap="round" stroke-width="3.5"/><ellipse cx="-6.32" cy="12.5" rx="2.5" ry="3.75" fill="#e5b29a"/><ellipse cx="1.34" cy="5.4" rx="5.3" ry="5.4" fill="#2b2224"/><ellipse cx="1.54" cy="9.3" rx="3.7" ry="4.7" fill="#e5b29a"/><ellipse cx="1.44" cy="3.8" rx="4.5" ry="3.0" fill="#2b2224"/><ellipse cx="-2.56" cy="6.6" rx="1.0" ry="2.6" fill="#2b2224"/><ellipse cx="5.44" cy="6.6" rx="1.0" ry="2.6" fill="#2b2224"/><ellipse cx="1.54" cy="11.6" rx="1.0" ry="0.45" fill="#b3202e"/><ellipse cx="0.04" cy="8.7" rx="0.8" ry="0.4" fill="#4a2e2a" opacity="0.8"/><ellipse cx="3.14" cy="8.7" rx="0.8" ry="0.4" fill="#4a2e2a" opacity="0.8"/></g></g><rect x="0.5" y="0.5" width="93" height="143" fill="none" stroke="#ffffff" stroke-opacity="0.45"/></svg></div>
<div class="t b" style="left:1030px;top:564px"><svg width="94" height="144" viewBox="0 0 94 144"><rect width="94" height="144" fill="url(#bg)"/><rect width="94" height="144" fill="url(#vg)"/><rect width="94" height="144" fill="url(#hg)"/><ellipse cx="44.8" cy="138.57" rx="13.34" ry="2.4" fill="#cbc6ce" opacity="0.5" filter="url(#soft2)"/><g filter="url(#soft)"><g transform="translate(42.8 8.1) scale(1.33)"><path d="M2.2,89.3 l3.2,0 l0.4,4.2 l-5.6,2.4z" fill="#d79c80"/><path d="M-4.6,97.7 l4.4,-3.1 l5.6,-2.5 l0.7,0.6 l-0.1,4.9 l-0.7,0 l-0.2,-3.1 l-5.2,3.6z" fill="#98102a"/><path d="M-0.6,90.8 l3.2,0 l0.4,4.2 l-5.6,2.4z" fill="#d79c80"/><path d="M-7.4,99.2 l4.4,-3.1 l5.6,-2.5 l0.7,0.6 l-0.1,4.9 l-0.7,0 l-0.2,-3.1 l-5.2,3.6z" fill="#b3142b"/><rect x="1.52" y="12" width="4" height="7" fill="#d79c80"/><polygon points="1.22,16.8 -4.33,18.4 -5.63,21.5 -3.93,27 -3.79,34.5 -5.49,43 -5.7,91.5 6.3,91.5 9.51,43 8.41,34.5 9.07,27 11.17,21.5 10.07,18.4 5.82,16.8" fill="#ad9654" stroke="#ad9654" stroke-width="0.8" stroke-linejoin="round"/><polygon points="5.5,27 5.05,34.5 5.38,43 3,91.5 6.3,91.5 9.51,43 8.41,34.5 9.07,27" fill="#927a3e" opacity="0.32"/><polygon points="1.22,16.8 -4.33,18.4 -5.63,21.5 -3.93,27 -3.79,34.5 -5.49,43 -5.7,91.5 6.3,91.5 9.51,43 8.41,34.5 9.07,27 11.17,21.5 10.07,18.4 5.82,16.8" fill="url(#fl)" opacity="0.85"/><ellipse cx="0.13" cy="24.3" rx="2.6" ry="2" fill="#a21a2e" transform="rotate(-20 0.13 24.3)"/><ellipse cx="1.17" cy="25.3" rx="1.3" ry="1.1" fill="#7e1424" transform="rotate(0 1.17 25.3)"/><ellipse cx="3.59" cy="23" rx="1.5" ry="1.1" fill="#a21a2e" transform="rotate(15 3.59 23)"/><ellipse cx="4.05" cy="26.6" rx="1.3" ry="0.7" fill="#55703c" transform="rotate(30 4.05 26.6)"/><ellipse cx="-1.61" cy="26.9" rx="1.1" ry="0.6" fill="#55703c" transform="rotate(-30 -1.61 26.9)"/><ellipse cx="5.43" cy="28.9" rx="1.5" ry="1.9" fill="#bb2a66" transform="rotate(10 5.43 28.9)"/><ellipse cx="3.61" cy="30.8" rx="1" ry="0.6" fill="#55703c" transform="rotate(0 3.61 30.8)"/><ellipse cx="-0.07" cy="30.2" rx="0.9" ry="0.7" fill="#ebe4cf" transform="rotate(0 -0.07 30.2)"/><ellipse cx="6.44" cy="22.2" rx="0.9" ry="0.5" fill="#55703c" transform="rotate(-20 6.44 22.2)"/><ellipse cx="0.46" cy="37.2" rx="1" ry="0.8" fill="#ebe4cf" transform="rotate(0 0.46 37.2)"/><ellipse cx="4.6" cy="38.6" rx="0.8" ry="0.7" fill="#ebe4cf" transform="rotate(0 4.6 38.6)"/><ellipse cx="4.16" cy="42.8" rx="2.3" ry="1.8" fill="#a21a2e" transform="rotate(20 4.16 42.8)"/><ellipse cx="4.91" cy="43.7" rx="1.2" ry="1" fill="#7e1424" transform="rotate(0 4.91 43.7)"/><ellipse cx="2.05" cy="44.7" rx="1.2" ry="0.7" fill="#55703c" transform="rotate(25 2.05 44.7)"/><ellipse cx="-1.46" cy="41.8" rx="1" ry="0.9" fill="#ebe4cf" transform="rotate(0 -1.46 41.8)"/><ellipse cx="-2.04" cy="47.4" rx="1.7" ry="2.2" fill="#bb2a66" transform="rotate(-10 -2.04 47.4)"/><ellipse cx="-0.23" cy="51.3" rx="1.4" ry="1" fill="#ebe4cf" transform="rotate(20 -0.23 51.3)"/><ellipse cx="2.75" cy="49.6" rx="1.1" ry="0.6" fill="#55703c" transform="rotate(-30 2.75 49.6)"/><ellipse cx="5.24" cy="50.9" rx="1" ry="1.2" fill="#ebe4cf" transform="rotate(0 5.24 50.9)"/><ellipse cx="2.39" cy="54.2" rx="1.1" ry="0.8" fill="#ebe4cf" transform="rotate(-15 2.39 54.2)"/><ellipse cx="-1.91" cy="54.6" rx="0.9" ry="0.6" fill="#55703c" transform="rotate(20 -1.91 54.6)"/><ellipse cx="-0.52" cy="59.6" rx="2.6" ry="2.2" fill="#bb2a66" transform="rotate(15 -0.52 59.6)"/><ellipse cx="0.23" cy="60.4" rx="1.3" ry="1.1" fill="#9a1f55" transform="rotate(0 0.23 60.4)"/><ellipse cx="4.6" cy="58" rx="1" ry="1.3" fill="#ebe4cf" transform="rotate(0 4.6 58)"/><ellipse cx="3.46" cy="62.6" rx="1.1" ry="0.6" fill="#55703c" transform="rotate(30 3.46 62.6)"/><ellipse cx="-2.65" cy="64.6" rx="0.9" ry="0.8" fill="#ebe4cf" transform="rotate(0 -2.65 64.6)"/><ellipse cx="2.93" cy="66.6" rx="1.4" ry="1" fill="#ebe4cf" transform="rotate(-20 2.93 66.6)"/><ellipse cx="-1.34" cy="71.6" rx="2.2" ry="2" fill="#bb2a66" transform="rotate(-15 -1.34 71.6)"/><ellipse cx="1.84" cy="70" rx="1" ry="0.6" fill="#55703c" transform="rotate(-25 1.84 70)"/><ellipse cx="4.08" cy="72.6" rx="0.9" ry="1.1" fill="#ebe4cf" transform="rotate(0 4.08 72.6)"/><ellipse cx="-3.05" cy="76" rx="0.9" ry="0.5" fill="#55703c" transform="rotate(20 -3.05 76)"/><ellipse cx="1.39" cy="77" rx="1.1" ry="0.8" fill="#ebe4cf" transform="rotate(10 1.39 77)"/><ellipse cx="2.19" cy="82" rx="2.3" ry="2" fill="#bb2a66" transform="rotate(20 2.19 82)"/><ellipse cx="1.39" cy="82.7" rx="1.1" ry="1" fill="#9a1f55" transform="rotate(0 1.39 82.7)"/><ellipse cx="-2.45" cy="81" rx="1" ry="0.9" fill="#ebe4cf" transform="rotate(0 -2.45 81)"/><ellipse cx="4.25" cy="79" rx="0.9" ry="0.5" fill="#55703c" transform="rotate(-30 4.25 79)"/><ellipse cx="-1.87" cy="86.6" rx="1.2" ry="0.9" fill="#ebe4cf" transform="rotate(15 -1.87 86.6)"/><ellipse cx="2.97" cy="87.6" rx="1" ry="0.8" fill="#ebe4cf" transform="rotate(0 2.97 87.6)"/><ellipse cx="0.01" cy="88.6" rx="0.9" ry="0.5" fill="#55703c" transform="rotate(0 0.01 88.6)"/><path d="M1.32,14.6 l2.2,1.6 l2.2,-1.6 l0.5,3 h-5.4z" fill="#a21a2e"/><path d="M10.38,21 L12.09,35" fill="none" stroke="#d79c80" stroke-linecap="round" stroke-width="4.3"/><path d="M-5.22,21 L-10.45,27.5" fill="none" stroke="#e5b29a" stroke-linecap="round" stroke-width="4.3"/><ellipse cx="10.18" cy="21.4" rx="2.6" ry="3.6" fill="#ad9654"/><ellipse cx="-4.62" cy="21.4" rx="2.4" ry="3.4" fill="#ad9654"/><ellipse cx="10.48" cy="21.6" rx="2.0" ry="2.9" fill="#8f2233"/><ellipse cx="-4.62" cy="21.0" rx="1.4" ry="2.0" fill="#963040"/><path d="M12.09,35 L10.83,48" fill="none" stroke="#d79c80" stroke-linecap="round" stroke-width="3.5"/><ellipse cx="10.83" cy="48" rx="2" ry="2.3" fill="#d79c80"/><path d="M-10.45,27.5 L-4.42,12.5" fill="none" stroke="#e5b29a" stroke-linecap="round" stroke-width="3.5"/><ellipse cx="-4.42" cy="12.5" rx="2.5" ry="3.75" fill="#e5b29a"/><ellipse cx="3.52" cy="5.4" rx="5.3" ry="5.4" fill="#2b2224"/><ellipse cx="3.72" cy="9.3" rx="3.7" ry="4.7" fill="#e5b29a"/><ellipse cx="3.62" cy="3.8" rx="4.5" ry="3.0" fill="#2b2224"/><ellipse cx="-0.38" cy="6.6" rx="1.0" ry="2.6" fill="#2b2224"/><ellipse cx="7.62" cy="6.6" rx="1.0" ry="2.6" fill="#2b2224"/><ellipse cx="3.72" cy="11.6" rx="1.0" ry="0.45" fill="#b3202e"/><ellipse cx="2.22" cy="8.7" rx="0.8" ry="0.4" fill="#4a2e2a" opacity="0.8"/><ellipse cx="5.32" cy="8.7" rx="0.8" ry="0.4" fill="#4a2e2a" opacity="0.8"/></g></g><rect x="0.5" y="0.5" width="93" height="143" fill="none" stroke="#ffffff" stroke-opacity="0.45"/></svg></div>
<div class="t b" style="left:1196px;top:564px"><svg width="94" height="144" viewBox="0 0 94 144"><rect width="94" height="144" fill="url(#bg)"/><rect width="94" height="144" fill="url(#vg)"/><rect width="94" height="144" fill="url(#hg)"/><ellipse cx="41" cy="139.57" rx="13.33" ry="2.4" fill="#cbc6ce" opacity="0.5" filter="url(#soft2)"/><g filter="url(#soft)"><g transform="translate(39 9.2) scale(1.33)"><path d="M2.2,89.3 l3.2,0 l0.4,4.2 l-5.6,2.4z" fill="#d79c80"/><path d="M-4.6,97.7 l4.4,-3.1 l5.6,-2.5 l0.7,0.6 l-0.1,4.9 l-0.7,0 l-0.2,-3.1 l-5.2,3.6z" fill="#98102a"/><path d="M-0.6,90.8 l3.2,0 l0.4,4.2 l-5.6,2.4z" fill="#d79c80"/><path d="M-7.4,99.2 l4.4,-3.1 l5.6,-2.5 l0.7,0.6 l-0.1,4.9 l-0.7,0 l-0.2,-3.1 l-5.2,3.6z" fill="#b3142b"/><rect x="-0.12" y="12" width="4" height="7" fill="#d79c80"/><polygon points="-0.42,16.8 -5.67,18.4 -6.93,21.5 -5.13,27 -4.87,34.5 -6.43,43 -5.84,91.5 6.16,91.5 8.57,43 7.33,34.5 7.87,27 9.87,21.5 8.73,18.4 4.18,16.8" fill="#ad9654" stroke="#ad9654" stroke-width="0.8" stroke-linejoin="round"/><polygon points="4.29,27 3.97,34.5 4.44,43 2.86,91.5 6.16,91.5 8.57,43 7.33,34.5 7.87,27" fill="#927a3e" opacity="0.32"/><polygon points="-0.42,16.8 -5.67,18.4 -6.93,21.5 -5.13,27 -4.87,34.5 -6.43,43 -5.84,91.5 6.16,91.5 8.57,43 7.33,34.5 7.87,27 9.87,21.5 8.73,18.4 4.18,16.8" fill="url(#fl)" opacity="0.85"/><ellipse cx="-1.11" cy="24.3" rx="2.6" ry="2" fill="#a21a2e" transform="rotate(-20 -1.11 24.3)"/><ellipse cx="-0.06" cy="25.3" rx="1.3" ry="1.1" fill="#7e1424" transform="rotate(0 -0.06 25.3)"/><ellipse cx="2.32" cy="23" rx="1.5" ry="1.1" fill="#a21a2e" transform="rotate(15 2.32 23)"/><ellipse cx="2.84" cy="26.6" rx="1.3" ry="0.7" fill="#55703c" transform="rotate(30 2.84 26.6)"/><ellipse cx="-2.82" cy="26.9" rx="1.1" ry="0.6" fill="#55703c" transform="rotate(-30 -2.82 26.9)"/><ellipse cx="4.26" cy="28.9" rx="1.5" ry="1.9" fill="#bb2a66" transform="rotate(10 4.26 28.9)"/><ellipse cx="2.47" cy="30.8" rx="1" ry="0.6" fill="#55703c" transform="rotate(0 2.47 30.8)"/><ellipse cx="-1.22" cy="30.2" rx="0.9" ry="0.7" fill="#ebe4cf" transform="rotate(0 -1.22 30.2)"/><ellipse cx="5.16" cy="22.2" rx="0.9" ry="0.5" fill="#55703c" transform="rotate(-20 5.16 22.2)"/><ellipse cx="-0.58" cy="37.2" rx="1" ry="0.8" fill="#ebe4cf" transform="rotate(0 -0.58 37.2)"/><ellipse cx="3.59" cy="38.6" rx="0.8" ry="0.7" fill="#ebe4cf" transform="rotate(0 3.59 38.6)"/><ellipse cx="3.22" cy="42.8" rx="2.3" ry="1.8" fill="#a21a2e" transform="rotate(20 3.22 42.8)"/><ellipse cx="3.98" cy="43.7" rx="1.2" ry="1" fill="#7e1424" transform="rotate(0 3.98 43.7)"/><ellipse cx="1.13" cy="44.7" rx="1.2" ry="0.7" fill="#55703c" transform="rotate(25 1.13 44.7)"/><ellipse cx="-2.41" cy="41.8" rx="1" ry="0.9" fill="#ebe4cf" transform="rotate(0 -2.41 41.8)"/><ellipse cx="-2.91" cy="47.4" rx="1.7" ry="2.2" fill="#bb2a66" transform="rotate(-10 -2.91 47.4)"/><ellipse cx="-1.03" cy="51.3" rx="1.4" ry="1" fill="#ebe4cf" transform="rotate(20 -1.03 51.3)"/><ellipse cx="1.92" cy="49.6" rx="1.1" ry="0.6" fill="#55703c" transform="rotate(-30 1.92 49.6)"/><ellipse cx="4.43" cy="50.9" rx="1" ry="1.2" fill="#ebe4cf" transform="rotate(0 4.43 50.9)"/><ellipse cx="1.64" cy="54.2" rx="1.1" ry="0.8" fill="#ebe4cf" transform="rotate(-15 1.64 54.2)"/><ellipse cx="-2.66" cy="54.6" rx="0.9" ry="0.6" fill="#55703c" transform="rotate(20 -2.66 54.6)"/><ellipse cx="-1.19" cy="59.6" rx="2.6" ry="2.2" fill="#bb2a66" transform="rotate(15 -1.19 59.6)"/><ellipse cx="-0.43" cy="60.4" rx="1.3" ry="1.1" fill="#9a1f55" transform="rotate(0 -0.43 60.4)"/><ellipse cx="3.9" cy="58" rx="1" ry="1.3" fill="#ebe4cf" transform="rotate(0 3.9 58)"/><ellipse cx="2.84" cy="62.6" rx="1.1" ry="0.6" fill="#55703c" transform="rotate(30 2.84 62.6)"/><ellipse cx="-3.23" cy="64.6" rx="0.9" ry="0.8" fill="#ebe4cf" transform="rotate(0 -3.23 64.6)"/><ellipse cx="2.38" cy="66.6" rx="1.4" ry="1" fill="#ebe4cf" transform="rotate(-20 2.38 66.6)"/><ellipse cx="-1.81" cy="71.6" rx="2.2" ry="2" fill="#bb2a66" transform="rotate(-15 -1.81 71.6)"/><ellipse cx="1.34" cy="70" rx="1" ry="0.6" fill="#55703c" transform="rotate(-25 1.34 70)"/><ellipse cx="3.63" cy="72.6" rx="0.9" ry="1.1" fill="#ebe4cf" transform="rotate(0 3.63 72.6)"/><ellipse cx="-3.45" cy="76" rx="0.9" ry="0.5" fill="#55703c" transform="rotate(20 -3.45 76)"/><ellipse cx="1.02" cy="77" rx="1.1" ry="0.8" fill="#ebe4cf" transform="rotate(10 1.02 77)"/><ellipse cx="1.9" cy="82" rx="2.3" ry="2" fill="#bb2a66" transform="rotate(20 1.9 82)"/><ellipse cx="1.1" cy="82.7" rx="1.1" ry="1" fill="#9a1f55" transform="rotate(0 1.1 82.7)"/><ellipse cx="-2.76" cy="81" rx="1" ry="0.9" fill="#ebe4cf" transform="rotate(0 -2.76 81)"/><ellipse cx="3.9" cy="79" rx="0.9" ry="0.5" fill="#55703c" transform="rotate(-30 3.9 79)"/><ellipse cx="-2.09" cy="86.6" rx="1.2" ry="0.9" fill="#ebe4cf" transform="rotate(15 -2.09 86.6)"/><ellipse cx="2.77" cy="87.6" rx="1" ry="0.8" fill="#ebe4cf" transform="rotate(0 2.77 87.6)"/><ellipse cx="-0.18" cy="88.6" rx="0.9" ry="0.5" fill="#55703c" transform="rotate(0 -0.18 88.6)"/><path d="M-0.32,14.6 l2.2,1.6 l2.2,-1.6 l0.5,3 h-5.4z" fill="#a21a2e"/><path d="M9.08,21 L10.24,34" fill="none" stroke="#d79c80" stroke-linecap="round" stroke-width="4.3"/><path d="M-6.52,21 L-9.21,31" fill="none" stroke="#e5b29a" stroke-linecap="round" stroke-width="4.3"/><ellipse cx="8.88" cy="21.4" rx="2.6" ry="3.6" fill="#ad9654"/><ellipse cx="-5.92" cy="21.4" rx="2.4" ry="3.4" fill="#ad9654"/><ellipse cx="9.18" cy="21.6" rx="2.0" ry="2.9" fill="#8f2233"/><ellipse cx="-5.92" cy="21.0" rx="1.4" ry="2.0" fill="#963040"/><path d="M10.24,34 L-7.72,32" fill="none" stroke="#d79c80" stroke-linecap="round" stroke-width="3.5"/><ellipse cx="-7.72" cy="32" rx="2" ry="2.3" fill="#d79c80"/><path d="M-9.21,31 L-4.9,14.5" fill="none" stroke="#e5b29a" stroke-linecap="round" stroke-width="3.5"/><ellipse cx="-4.9" cy="14.5" rx="2.3" ry="3.45" fill="#e5b29a"/><ellipse cx="1.88" cy="5.4" rx="5.3" ry="5.4" fill="#2b2224"/><ellipse cx="2.08" cy="9.3" rx="3.7" ry="4.7" fill="#e5b29a"/><ellipse cx="1.98" cy="3.8" rx="4.5" ry="3.0" fill="#2b2224"/><ellipse cx="-2.02" cy="6.6" rx="1.0" ry="2.6" fill="#2b2224"/><ellipse cx="5.98" cy="6.6" rx="1.0" ry="2.6" fill="#2b2224"/><ellipse cx="2.08" cy="11.6" rx="1.0" ry="0.45" fill="#b3202e"/><ellipse cx="0.58" cy="8.7" rx="0.8" ry="0.4" fill="#4a2e2a" opacity="0.8"/><ellipse cx="3.68" cy="8.7" rx="0.8" ry="0.4" fill="#4a2e2a" opacity="0.8"/></g></g><rect x="0.5" y="0.5" width="93" height="143" fill="none" stroke="#ffffff" stroke-opacity="0.45"/></svg></div>
<div class="t b" style="left:1362px;top:564px"><svg width="94" height="144" viewBox="0 0 94 144"><rect width="94" height="144" fill="url(#bg)"/><rect width="94" height="144" fill="url(#vg)"/><rect width="94" height="144" fill="url(#hg)"/><g filter="url(#soft)"><g transform="translate(47.3 10.1) scale(2.15)"><rect x="-2.47" y="12" width="4" height="7" fill="#d79c80"/><polygon points="-2.77,16.8 -7.49,18.4 -8.67,21.5 -6.71,27 -6.24,34.5 -7.57,43 -5.61,91.5 6.39,91.5 7.43,43 5.96,34.5 6.29,27 8.13,21.5 6.91,18.4 1.83,16.8" fill="#ad9654" stroke="#ad9654" stroke-width="0.8" stroke-linejoin="round"/><polygon points="2.71,27 2.6,34.5 3.31,43 3.09,91.5 6.39,91.5 7.43,43 5.96,34.5 6.29,27" fill="#927a3e" opacity="0.32"/><polygon points="-2.77,16.8 -7.49,18.4 -8.67,21.5 -6.71,27 -6.24,34.5 -7.57,43 -5.61,91.5 6.39,91.5 7.43,43 5.96,34.5 6.29,27 8.13,21.5 6.91,18.4 1.83,16.8" fill="url(#fl)" opacity="0.85"/><ellipse cx="-2.77" cy="24.3" rx="2.6" ry="2" fill="#a21a2e" transform="rotate(-20 -2.77 24.3)"/><ellipse cx="-1.69" cy="25.3" rx="1.3" ry="1.1" fill="#7e1424" transform="rotate(0 -1.69 25.3)"/><ellipse cx="0.63" cy="23" rx="1.5" ry="1.1" fill="#a21a2e" transform="rotate(15 0.63 23)"/><ellipse cx="1.24" cy="26.6" rx="1.3" ry="0.7" fill="#55703c" transform="rotate(30 1.24 26.6)"/><ellipse cx="-4.4" cy="26.9" rx="1.1" ry="0.6" fill="#55703c" transform="rotate(-30 -4.4 26.9)"/><ellipse cx="2.73" cy="28.9" rx="1.5" ry="1.9" fill="#bb2a66" transform="rotate(10 2.73 28.9)"/><ellipse cx="0.99" cy="30.8" rx="1" ry="0.6" fill="#55703c" transform="rotate(0 0.99 30.8)"/><ellipse cx="-2.72" cy="30.2" rx="0.9" ry="0.7" fill="#ebe4cf" transform="rotate(0 -2.72 30.2)"/><ellipse cx="3.44" cy="22.2" rx="0.9" ry="0.5" fill="#55703c" transform="rotate(-20 3.44 22.2)"/><ellipse cx="-1.87" cy="37.2" rx="1" ry="0.8" fill="#ebe4cf" transform="rotate(0 -1.87 37.2)"/><ellipse cx="2.33" cy="38.6" rx="0.8" ry="0.7" fill="#ebe4cf" transform="rotate(0 2.33 38.6)"/><ellipse cx="2.08" cy="42.8" rx="2.3" ry="1.8" fill="#a21a2e" transform="rotate(20 2.08 42.8)"/><ellipse cx="2.86" cy="43.7" rx="1.2" ry="1" fill="#7e1424" transform="rotate(0 2.86 43.7)"/><ellipse cx="0.05" cy="44.7" rx="1.2" ry="0.7" fill="#55703c" transform="rotate(25 0.05 44.7)"/><ellipse cx="-3.58" cy="41.8" rx="1" ry="0.9" fill="#ebe4cf" transform="rotate(0 -3.58 41.8)"/><ellipse cx="-3.92" cy="47.4" rx="1.7" ry="2.2" fill="#bb2a66" transform="rotate(-10 -3.92 47.4)"/><ellipse cx="-1.94" cy="51.3" rx="1.4" ry="1" fill="#ebe4cf" transform="rotate(20 -1.94 51.3)"/><ellipse cx="0.97" cy="49.6" rx="1.1" ry="0.6" fill="#55703c" transform="rotate(-30 0.97 49.6)"/><ellipse cx="3.51" cy="50.9" rx="1" ry="1.2" fill="#ebe4cf" transform="rotate(0 3.51 50.9)"/><ellipse cx="0.82" cy="54.2" rx="1.1" ry="0.8" fill="#ebe4cf" transform="rotate(-15 0.82 54.2)"/><ellipse cx="-3.46" cy="54.6" rx="0.9" ry="0.6" fill="#55703c" transform="rotate(20 -3.46 54.6)"/><ellipse cx="-1.86" cy="59.6" rx="2.6" ry="2.2" fill="#bb2a66" transform="rotate(15 -1.86 59.6)"/><ellipse cx="-1.07" cy="60.4" rx="1.3" ry="1.1" fill="#9a1f55" transform="rotate(0 -1.07 60.4)"/><ellipse cx="3.19" cy="58" rx="1" ry="1.3" fill="#ebe4cf" transform="rotate(0 3.19 58)"/><ellipse cx="2.26" cy="62.6" rx="1.1" ry="0.6" fill="#55703c" transform="rotate(30 2.26 62.6)"/><ellipse cx="-3.76" cy="64.6" rx="0.9" ry="0.8" fill="#ebe4cf" transform="rotate(0 -3.76 64.6)"/><ellipse cx="1.91" cy="66.6" rx="1.4" ry="1" fill="#ebe4cf" transform="rotate(-20 1.91 66.6)"/><path d="M-2.67,14.6 l2.2,1.6 l2.2,-1.6 l0.5,3 h-5.4z" fill="#a21a2e"/><path d="M7.33,21 L8.85,34" fill="none" stroke="#d79c80" stroke-linecap="round" stroke-width="4.3"/><path d="M-8.27,21 L-10.68,31" fill="none" stroke="#e5b29a" stroke-linecap="round" stroke-width="4.3"/><ellipse cx="7.13" cy="21.4" rx="2.6" ry="3.6" fill="#ad9654"/><ellipse cx="-7.67" cy="21.4" rx="2.4" ry="3.4" fill="#ad9654"/><ellipse cx="7.43" cy="21.6" rx="2.0" ry="2.9" fill="#8f2233"/><ellipse cx="-7.67" cy="21.0" rx="1.4" ry="2.0" fill="#963040"/><path d="M8.85,34 L-9.17,32" fill="none" stroke="#d79c80" stroke-linecap="round" stroke-width="3.5"/><ellipse cx="-9.17" cy="32" rx="2" ry="2.3" fill="#d79c80"/><path d="M-10.68,31 L-6.83,14.5" fill="none" stroke="#e5b29a" stroke-linecap="round" stroke-width="3.5"/><ellipse cx="-6.83" cy="14.5" rx="2.3" ry="3.45" fill="#e5b29a"/><ellipse cx="-0.47" cy="5.4" rx="5.3" ry="5.4" fill="#2b2224"/><ellipse cx="-0.27" cy="9.3" rx="3.7" ry="4.7" fill="#e5b29a"/><ellipse cx="-0.37" cy="3.8" rx="4.5" ry="3.0" fill="#2b2224"/><ellipse cx="-4.37" cy="6.6" rx="1.0" ry="2.6" fill="#2b2224"/><ellipse cx="3.63" cy="6.6" rx="1.0" ry="2.6" fill="#2b2224"/><ellipse cx="-0.27" cy="11.6" rx="1.0" ry="0.45" fill="#b3202e"/><ellipse cx="-1.77" cy="8.7" rx="0.8" ry="0.4" fill="#4a2e2a" opacity="0.8"/><ellipse cx="1.33" cy="8.7" rx="0.8" ry="0.4" fill="#4a2e2a" opacity="0.8"/></g></g><rect x="0.5" y="0.5" width="93" height="143" fill="none" stroke="#ffffff" stroke-opacity="0.45"/></svg></div>
<div class="t b" style="left:1528px;top:564px"><svg width="94" height="144" viewBox="0 0 94 144"><rect width="94" height="144" fill="url(#bg)"/><rect width="94" height="144" fill="url(#vg)"/><rect width="94" height="144" fill="url(#hg)"/><g filter="url(#soft)"><g transform="translate(50 16.7) scale(2.06)"><rect x="-2" y="12" width="4" height="7" fill="#d79c80"/><polygon points="-2.3,16.8 -7.2,18.4 -8.4,21.5 -6.5,27 -6.1,34.5 -7.5,43 -6,91.5 6,91.5 7.5,43 6.1,34.5 6.5,27 8.4,21.5 7.2,18.4 2.3,16.8" fill="#ad9654" stroke="#ad9654" stroke-width="0.8" stroke-linejoin="round"/><polygon points="2.93,27 2.75,34.5 3.38,43 2.7,91.5 6,91.5 7.5,43 6.1,34.5 6.5,27" fill="#927a3e" opacity="0.32"/><polygon points="-2.3,16.8 -7.2,18.4 -8.4,21.5 -6.5,27 -6.1,34.5 -7.5,43 -6,91.5 6,91.5 7.5,43 6.1,34.5 6.5,27 8.4,21.5 7.2,18.4 2.3,16.8" fill="url(#fl)" opacity="0.85"/><ellipse cx="-2.53" cy="24.3" rx="2.6" ry="2" fill="#a21a2e" transform="rotate(-20 -2.53 24.3)"/><ellipse cx="-1.46" cy="25.3" rx="1.3" ry="1.1" fill="#7e1424" transform="rotate(0 -1.46 25.3)"/><ellipse cx="0.88" cy="23" rx="1.5" ry="1.1" fill="#a21a2e" transform="rotate(15 0.88 23)"/><ellipse cx="1.46" cy="26.6" rx="1.3" ry="0.7" fill="#55703c" transform="rotate(30 1.46 26.6)"/><ellipse cx="-4.19" cy="26.9" rx="1.1" ry="0.6" fill="#55703c" transform="rotate(-30 -4.19 26.9)"/><ellipse cx="2.92" cy="28.9" rx="1.5" ry="1.9" fill="#bb2a66" transform="rotate(10 2.92 28.9)"/><ellipse cx="1.17" cy="30.8" rx="1" ry="0.6" fill="#55703c" transform="rotate(0 1.17 30.8)"/><ellipse cx="-2.53" cy="30.2" rx="0.9" ry="0.7" fill="#ebe4cf" transform="rotate(0 -2.53 30.2)"/><ellipse cx="3.7" cy="22.2" rx="0.9" ry="0.5" fill="#55703c" transform="rotate(-20 3.7 22.2)"/><ellipse cx="-1.75" cy="37.2" rx="1" ry="0.8" fill="#ebe4cf" transform="rotate(0 -1.75 37.2)"/><ellipse cx="2.44" cy="38.6" rx="0.8" ry="0.7" fill="#ebe4cf" transform="rotate(0 2.44 38.6)"/><ellipse cx="2.14" cy="42.8" rx="2.3" ry="1.8" fill="#a21a2e" transform="rotate(20 2.14 42.8)"/><ellipse cx="2.92" cy="43.7" rx="1.2" ry="1" fill="#7e1424" transform="rotate(0 2.92 43.7)"/><ellipse cx="0.1" cy="44.7" rx="1.2" ry="0.7" fill="#55703c" transform="rotate(25 0.1 44.7)"/><ellipse cx="-3.51" cy="41.8" rx="1" ry="0.9" fill="#ebe4cf" transform="rotate(0 -3.51 41.8)"/><ellipse cx="-3.9" cy="47.4" rx="1.7" ry="2.2" fill="#bb2a66" transform="rotate(-10 -3.9 47.4)"/><ellipse cx="-1.95" cy="51.3" rx="1.4" ry="1" fill="#ebe4cf" transform="rotate(20 -1.95 51.3)"/><ellipse cx="0.97" cy="49.6" rx="1.1" ry="0.6" fill="#55703c" transform="rotate(-30 0.97 49.6)"/><ellipse cx="3.51" cy="50.9" rx="1" ry="1.2" fill="#ebe4cf" transform="rotate(0 3.51 50.9)"/><ellipse cx="0.78" cy="54.2" rx="1.1" ry="0.8" fill="#ebe4cf" transform="rotate(-15 0.78 54.2)"/><ellipse cx="-3.51" cy="54.6" rx="0.9" ry="0.6" fill="#55703c" transform="rotate(20 -3.51 54.6)"/><ellipse cx="-1.95" cy="59.6" rx="2.6" ry="2.2" fill="#bb2a66" transform="rotate(15 -1.95 59.6)"/><ellipse cx="-1.17" cy="60.4" rx="1.3" ry="1.1" fill="#9a1f55" transform="rotate(0 -1.17 60.4)"/><ellipse cx="3.12" cy="58" rx="1" ry="1.3" fill="#ebe4cf" transform="rotate(0 3.12 58)"/><ellipse cx="2.14" cy="62.6" rx="1.1" ry="0.6" fill="#55703c" transform="rotate(30 2.14 62.6)"/><ellipse cx="-3.9" cy="64.6" rx="0.9" ry="0.8" fill="#ebe4cf" transform="rotate(0 -3.9 64.6)"/><ellipse cx="1.75" cy="66.6" rx="1.4" ry="1" fill="#ebe4cf" transform="rotate(-20 1.75 66.6)"/><path d="M-2.2,14.6 l2.2,1.6 l2.2,-1.6 l0.5,3 h-5.4z" fill="#a21a2e"/><path d="M7.6,21 L9,34" fill="none" stroke="#d79c80" stroke-linecap="round" stroke-width="4.3"/><path d="M-8,21 L-10.5,31" fill="none" stroke="#e5b29a" stroke-linecap="round" stroke-width="4.3"/><ellipse cx="7.4" cy="21.4" rx="2.6" ry="3.6" fill="#ad9654"/><ellipse cx="-7.4" cy="21.4" rx="2.4" ry="3.4" fill="#ad9654"/><ellipse cx="7.7" cy="21.6" rx="2.0" ry="2.9" fill="#8f2233"/><ellipse cx="-7.4" cy="21.0" rx="1.4" ry="2.0" fill="#963040"/><path d="M9,34 L-9,32" fill="none" stroke="#d79c80" stroke-linecap="round" stroke-width="3.5"/><ellipse cx="-9" cy="32" rx="2" ry="2.3" fill="#d79c80"/><path d="M-10.5,31 L-6.5,14.5" fill="none" stroke="#e5b29a" stroke-linecap="round" stroke-width="3.5"/><ellipse cx="-6.5" cy="14.5" rx="2.3" ry="3.45" fill="#e5b29a"/><ellipse cx="0" cy="5.4" rx="5.3" ry="5.4" fill="#2b2224"/><ellipse cx="0.2" cy="9.3" rx="3.7" ry="4.7" fill="#e5b29a"/><ellipse cx="0.1" cy="3.8" rx="4.5" ry="3.0" fill="#2b2224"/><ellipse cx="-3.9" cy="6.6" rx="1.0" ry="2.6" fill="#2b2224"/><ellipse cx="4.1" cy="6.6" rx="1.0" ry="2.6" fill="#2b2224"/><ellipse cx="0.2" cy="11.6" rx="1.0" ry="0.45" fill="#b3202e"/><ellipse cx="-1.3" cy="8.7" rx="0.8" ry="0.4" fill="#4a2e2a" opacity="0.8"/><ellipse cx="1.8" cy="8.7" rx="0.8" ry="0.4" fill="#4a2e2a" opacity="0.8"/></g></g><rect x="0.5" y="0.5" width="93" height="143" fill="none" stroke="#ffffff" stroke-opacity="0.45"/></svg></div>
<div class="t b" style="left:34px;top:738px"><svg width="94" height="144" viewBox="0 0 94 144"><rect width="94" height="144" fill="url(#bg)"/><rect width="94" height="144" fill="url(#vg)"/><rect width="94" height="144" fill="url(#hg)"/><g filter="url(#soft)"><g transform="translate(45.2 8.7) scale(2.32)"><rect x="-2.86" y="12" width="4" height="7" fill="#d79c80"/><polygon points="-3.16,16.8 -7.74,18.4 -8.89,21.5 -6.9,27 -6.37,34.5 -7.62,43 -5.28,91.5 6.72,91.5 7.38,43 5.83,34.5 6.1,27 7.91,21.5 6.66,18.4 1.44,16.8" fill="#ad9654" stroke="#ad9654" stroke-width="0.8" stroke-linejoin="round"/><polygon points="2.53,27 2.48,34.5 3.25,43 3.42,91.5 6.72,91.5 7.38,43 5.83,34.5 6.1,27" fill="#927a3e" opacity="0.32"/><polygon points="-3.16,16.8 -7.74,18.4 -8.89,21.5 -6.9,27 -6.37,34.5 -7.62,43 -5.28,91.5 6.72,91.5 7.38,43 5.83,34.5 6.1,27 7.91,21.5 6.66,18.4 1.44,16.8" fill="url(#fl)" opacity="0.85"/><ellipse cx="-2.98" cy="24.3" rx="2.6" ry="2" fill="#a21a2e" transform="rotate(-20 -2.98 24.3)"/><ellipse cx="-1.89" cy="25.3" rx="1.3" ry="1.1" fill="#7e1424" transform="rotate(0 -1.89 25.3)"/><ellipse cx="0.41" cy="23" rx="1.5" ry="1.1" fill="#a21a2e" transform="rotate(15 0.41 23)"/><ellipse cx="1.06" cy="26.6" rx="1.3" ry="0.7" fill="#55703c" transform="rotate(30 1.06 26.6)"/><ellipse cx="-4.59" cy="26.9" rx="1.1" ry="0.6" fill="#55703c" transform="rotate(-30 -4.59 26.9)"/><ellipse cx="2.56" cy="28.9" rx="1.5" ry="1.9" fill="#bb2a66" transform="rotate(10 2.56 28.9)"/><ellipse cx="0.84" cy="30.8" rx="1" ry="0.6" fill="#55703c" transform="rotate(0 0.84 30.8)"/><ellipse cx="-2.87" cy="30.2" rx="0.9" ry="0.7" fill="#ebe4cf" transform="rotate(0 -2.87 30.2)"/><ellipse cx="3.22" cy="22.2" rx="0.9" ry="0.5" fill="#55703c" transform="rotate(-20 3.22 22.2)"/><ellipse cx="-1.97" cy="37.2" rx="1" ry="0.8" fill="#ebe4cf" transform="rotate(0 -1.97 37.2)"/><ellipse cx="2.24" cy="38.6" rx="0.8" ry="0.7" fill="#ebe4cf" transform="rotate(0 2.24 38.6)"/><ellipse cx="2.02" cy="42.8" rx="2.3" ry="1.8" fill="#a21a2e" transform="rotate(20 2.02 42.8)"/><ellipse cx="2.81" cy="43.7" rx="1.2" ry="1" fill="#7e1424" transform="rotate(0 2.81 43.7)"/><ellipse cx="0.01" cy="44.7" rx="1.2" ry="0.7" fill="#55703c" transform="rotate(25 0.01 44.7)"/><ellipse cx="-3.65" cy="41.8" rx="1" ry="0.9" fill="#ebe4cf" transform="rotate(0 -3.65 41.8)"/><ellipse cx="-3.94" cy="47.4" rx="1.7" ry="2.2" fill="#bb2a66" transform="rotate(-10 -3.94 47.4)"/><ellipse cx="-1.93" cy="51.3" rx="1.4" ry="1" fill="#ebe4cf" transform="rotate(20 -1.93 51.3)"/><ellipse cx="0.97" cy="49.6" rx="1.1" ry="0.6" fill="#55703c" transform="rotate(-30 0.97 49.6)"/><ellipse cx="3.52" cy="50.9" rx="1" ry="1.2" fill="#ebe4cf" transform="rotate(0 3.52 50.9)"/><ellipse cx="0.85" cy="54.2" rx="1.1" ry="0.8" fill="#ebe4cf" transform="rotate(-15 0.85 54.2)"/><ellipse cx="-3.43" cy="54.6" rx="0.9" ry="0.6" fill="#55703c" transform="rotate(20 -3.43 54.6)"/><ellipse cx="-1.78" cy="59.6" rx="2.6" ry="2.2" fill="#bb2a66" transform="rotate(15 -1.78 59.6)"/><ellipse cx="-0.99" cy="60.4" rx="1.3" ry="1.1" fill="#9a1f55" transform="rotate(0 -0.99 60.4)"/><ellipse cx="3.25" cy="58" rx="1" ry="1.3" fill="#ebe4cf" transform="rotate(0 3.25 58)"/><ellipse cx="2.36" cy="62.6" rx="1.1" ry="0.6" fill="#55703c" transform="rotate(30 2.36 62.6)"/><path d="M-3.06,14.6 l2.2,1.6 l2.2,-1.6 l0.5,3 h-5.4z" fill="#a21a2e"/><path d="M7.1,21 L8.72,34" fill="none" stroke="#d79c80" stroke-linecap="round" stroke-width="4.3"/><path d="M-8.5,21 L-10.83,31" fill="none" stroke="#e5b29a" stroke-linecap="round" stroke-width="4.3"/><ellipse cx="6.9" cy="21.4" rx="2.6" ry="3.6" fill="#ad9654"/><ellipse cx="-7.9" cy="21.4" rx="2.4" ry="3.4" fill="#ad9654"/><ellipse cx="7.2" cy="21.6" rx="2.0" ry="2.9" fill="#8f2233"/><ellipse cx="-7.9" cy="21.0" rx="1.4" ry="2.0" fill="#963040"/><path d="M8.72,34 L-9.31,32" fill="none" stroke="#d79c80" stroke-linecap="round" stroke-width="3.5"/><ellipse cx="-9.31" cy="32" rx="2" ry="2.3" fill="#d79c80"/><path d="M-10.83,31 L-7.11,14.5" fill="none" stroke="#e5b29a" stroke-linecap="round" stroke-width="3.5"/><ellipse cx="-7.11" cy="14.5" rx="2.3" ry="3.45" fill="#e5b29a"/><ellipse cx="-0.86" cy="5.4" rx="5.3" ry="5.4" fill="#2b2224"/><ellipse cx="-0.66" cy="9.3" rx="3.7" ry="4.7" fill="#e5b29a"/><ellipse cx="-0.76" cy="3.8" rx="4.5" ry="3.0" fill="#2b2224"/><ellipse cx="-4.76" cy="6.6" rx="1.0" ry="2.6" fill="#2b2224"/><ellipse cx="3.24" cy="6.6" rx="1.0" ry="2.6" fill="#2b2224"/><ellipse cx="-0.66" cy="11.6" rx="1.0" ry="0.45" fill="#b3202e"/><ellipse cx="-2.16" cy="8.7" rx="0.8" ry="0.4" fill="#4a2e2a" opacity="0.8"/><ellipse cx="0.94" cy="8.7" rx="0.8" ry="0.4" fill="#4a2e2a" opacity="0.8"/></g></g><rect x="0.5" y="0.5" width="93" height="143" fill="none" stroke="#ffffff" stroke-opacity="0.45"/></svg></div>
<div class="t b" style="left:200px;top:738px"><svg width="94" height="144" viewBox="0 0 94 144"><rect width="94" height="144" fill="url(#bg)"/><rect width="94" height="144" fill="url(#vg)"/><rect width="94" height="144" fill="url(#hg)"/><g filter="url(#soft)"><g transform="translate(49 11.1) scale(2.27)"><rect x="-2.93" y="12" width="4" height="7" fill="#d79c80"/><polygon points="-3.23,16.8 -7.78,18.4 -8.93,21.5 -6.93,27 -6.39,34.5 -7.63,43 -5.23,91.5 6.77,91.5 7.37,43 5.81,34.5 6.07,27 7.87,21.5 6.62,18.4 1.37,16.8" fill="#ad9654" stroke="#ad9654" stroke-width="0.8" stroke-linejoin="round"/><polygon points="2.5,27 2.46,34.5 3.25,43 3.47,91.5 6.77,91.5 7.37,43 5.81,34.5 6.07,27" fill="#927a3e" opacity="0.32"/><polygon points="-3.23,16.8 -7.78,18.4 -8.93,21.5 -6.93,27 -6.39,34.5 -7.63,43 -5.23,91.5 6.77,91.5 7.37,43 5.81,34.5 6.07,27 7.87,21.5 6.62,18.4 1.37,16.8" fill="url(#fl)" opacity="0.85"/><ellipse cx="-3.01" cy="24.3" rx="2.6" ry="2" fill="#a21a2e" transform="rotate(-20 -3.01 24.3)"/><ellipse cx="-1.92" cy="25.3" rx="1.3" ry="1.1" fill="#7e1424" transform="rotate(0 -1.92 25.3)"/><ellipse cx="0.38" cy="23" rx="1.5" ry="1.1" fill="#a21a2e" transform="rotate(15 0.38 23)"/><ellipse cx="1.03" cy="26.6" rx="1.3" ry="0.7" fill="#55703c" transform="rotate(30 1.03 26.6)"/><ellipse cx="-4.62" cy="26.9" rx="1.1" ry="0.6" fill="#55703c" transform="rotate(-30 -4.62 26.9)"/><ellipse cx="2.53" cy="28.9" rx="1.5" ry="1.9" fill="#bb2a66" transform="rotate(10 2.53 28.9)"/><ellipse cx="0.81" cy="30.8" rx="1" ry="0.6" fill="#55703c" transform="rotate(0 0.81 30.8)"/><ellipse cx="-2.9" cy="30.2" rx="0.9" ry="0.7" fill="#ebe4cf" transform="rotate(0 -2.9 30.2)"/><ellipse cx="3.19" cy="22.2" rx="0.9" ry="0.5" fill="#55703c" transform="rotate(-20 3.19 22.2)"/><ellipse cx="-1.99" cy="37.2" rx="1" ry="0.8" fill="#ebe4cf" transform="rotate(0 -1.99 37.2)"/><ellipse cx="2.22" cy="38.6" rx="0.8" ry="0.7" fill="#ebe4cf" transform="rotate(0 2.22 38.6)"/><ellipse cx="2.01" cy="42.8" rx="2.3" ry="1.8" fill="#a21a2e" transform="rotate(20 2.01 42.8)"/><ellipse cx="2.81" cy="43.7" rx="1.2" ry="1" fill="#7e1424" transform="rotate(0 2.81 43.7)"/><ellipse cx="0" cy="44.7" rx="1.2" ry="0.7" fill="#55703c" transform="rotate(25 0 44.7)"/><ellipse cx="-3.66" cy="41.8" rx="1" ry="0.9" fill="#ebe4cf" transform="rotate(0 -3.66 41.8)"/><ellipse cx="-3.94" cy="47.4" rx="1.7" ry="2.2" fill="#bb2a66" transform="rotate(-10 -3.94 47.4)"/><ellipse cx="-1.92" cy="51.3" rx="1.4" ry="1" fill="#ebe4cf" transform="rotate(20 -1.92 51.3)"/><ellipse cx="0.97" cy="49.6" rx="1.1" ry="0.6" fill="#55703c" transform="rotate(-30 0.97 49.6)"/><ellipse cx="3.52" cy="50.9" rx="1" ry="1.2" fill="#ebe4cf" transform="rotate(0 3.52 50.9)"/><ellipse cx="0.86" cy="54.2" rx="1.1" ry="0.8" fill="#ebe4cf" transform="rotate(-15 0.86 54.2)"/><ellipse cx="-3.42" cy="54.6" rx="0.9" ry="0.6" fill="#55703c" transform="rotate(20 -3.42 54.6)"/><ellipse cx="-1.77" cy="59.6" rx="2.6" ry="2.2" fill="#bb2a66" transform="rotate(15 -1.77 59.6)"/><ellipse cx="-0.98" cy="60.4" rx="1.3" ry="1.1" fill="#9a1f55" transform="rotate(0 -0.98 60.4)"/><ellipse cx="3.26" cy="58" rx="1" ry="1.3" fill="#ebe4cf" transform="rotate(0 3.26 58)"/><ellipse cx="2.38" cy="62.6" rx="1.1" ry="0.6" fill="#55703c" transform="rotate(30 2.38 62.6)"/><path d="M-3.13,14.6 l2.2,1.6 l2.2,-1.6 l0.5,3 h-5.4z" fill="#a21a2e"/><path d="M7.96,21 L8.24,36" fill="none" stroke="#d79c80" stroke-linecap="round" stroke-width="4.3"/><path d="M-9.04,21 L-12.78,35" fill="none" stroke="#e5b29a" stroke-linecap="round" stroke-width="4.3"/><ellipse cx="6.86" cy="21.4" rx="2.6" ry="3.6" fill="#ad9654"/><ellipse cx="-7.94" cy="21.4" rx="2.4" ry="3.4" fill="#ad9654"/><ellipse cx="7.16" cy="21.6" rx="2.0" ry="2.9" fill="#8f2233"/><ellipse cx="-7.94" cy="21.0" rx="1.4" ry="2.0" fill="#963040"/><path d="M8.24,36 L-10.24,37" fill="none" stroke="#d79c80" stroke-linecap="round" stroke-width="3.5"/><ellipse cx="-10.24" cy="37" rx="2" ry="2.3" fill="#d79c80"/><path d="M-12.78,35 L1.51,23.5" fill="none" stroke="#e5b29a" stroke-linecap="round" stroke-width="3.5"/><ellipse cx="1.51" cy="23.5" rx="2" ry="2.3" fill="#e5b29a"/><ellipse cx="-0.93" cy="5.4" rx="5.3" ry="5.4" fill="#2b2224"/><ellipse cx="-0.73" cy="9.3" rx="3.7" ry="4.7" fill="#e5b29a"/><ellipse cx="-0.83" cy="3.8" rx="4.5" ry="3.0" fill="#2b2224"/><ellipse cx="-4.83" cy="6.6" rx="1.0" ry="2.6" fill="#2b2224"/><ellipse cx="3.17" cy="6.6" rx="1.0" ry="2.6" fill="#2b2224"/><ellipse cx="-0.73" cy="11.6" rx="1.0" ry="0.45" fill="#b3202e"/><ellipse cx="-2.23" cy="8.7" rx="0.8" ry="0.4" fill="#4a2e2a" opacity="0.8"/><ellipse cx="0.87" cy="8.7" rx="0.8" ry="0.4" fill="#4a2e2a" opacity="0.8"/></g></g><rect x="0.5" y="0.5" width="93" height="143" fill="none" stroke="#ffffff" stroke-opacity="0.45"/></svg></div>
<div id="vtrack" class="abs"></div>
<div id="hline" class="abs"></div>
<div id="htrack" class="abs"></div>
<div id="corner" class="abs"></div>
<div id="status" class="abs"></div>
<div id="hline2" class="abs"></div>
<div id="rstrip" class="abs"></div>
<div id="count" class="abs">42 个项目 (正在生成预览...)</div>
<svg class="abs" style="left:970px;top:932px" width="360" height="27" viewBox="970 932 360 27"><rect x="979" y="945" width="12" height="2" fill="#d6d6d6"/><polygon points="1000,945.3 1143.5,940 1143.5,950.4 1000,946.2" fill="#5b5b5b"/><rect x="1000" y="945.2" width="22" height="1" fill="#6a6a6a"/><circle cx="1027.4" cy="945.4" r="4.8" fill="#323232" stroke="#d8d8d8" stroke-width="2"/><rect x="1153" y="945" width="12" height="2" fill="#d6d6d6"/><rect x="1158" y="940" width="2" height="12" fill="#d6d6d6"/><g fill="none" stroke="#cfcfcf" stroke-width="1"><rect x="1195.5" y="940.5" width="18" height="12"/><path d="M1201.5 940.5V952.5M1207.5 940.5V952.5M1195.5 946.5H1213.5"/></g><rect x="1230" y="936" width="24" height="20" fill="#1f1f1f"/><rect x="1233" y="941" width="5" height="5" fill="#c9c9c9"/><rect x="1233" y="947" width="5" height="5" fill="#c9c9c9"/><rect x="1239" y="941" width="5" height="5" fill="#c9c9c9"/><rect x="1239" y="947" width="5" height="5" fill="#c9c9c9"/><rect x="1245" y="941" width="5" height="5" fill="#c9c9c9"/><rect x="1245" y="947" width="5" height="5" fill="#c9c9c9"/><rect x="1261" y="942" width="10" height="9" fill="#c9c9c9"/><rect x="1272" y="942" width="6" height="2" fill="#c9c9c9"/><rect x="1272" y="945" width="6" height="2" fill="#c9c9c9"/><rect x="1272" y="948" width="6" height="2" fill="#c9c9c9"/><rect x="1290" y="942" width="4" height="4" fill="#c9c9c9"/><rect x="1290" y="947" width="4" height="4" fill="#c9c9c9"/><rect x="1296" y="943" width="10" height="2" fill="#c9c9c9"/><rect x="1296" y="948" width="10" height="2" fill="#c9c9c9"/></svg>
<div class="abs sep" style="left:1186px"></div>
<div class="abs sep" style="left:1223px"></div>
<div class="abs sep" style="left:1316px"></div>
<div class="abs cb" style="left:1328px"></div>
<div class="abs lbl" style="left:1347px">平铺</div>
<div class="abs cb on" style="left:1383px"></div>
<svg class="abs" style="left:1383px;top:940px" width="12" height="12" viewBox="0 0 12 12"><path d="M2.6 6.2L5 8.6L9.6 3.4" fill="none" stroke="#2a2a2a" stroke-width="2" stroke-linecap="round" stroke-linejoin="round"/></svg>
<div class="abs lbl" style="left:1402px">仅限缩览图</div>
<div class="abs cb" style="left:1478px"></div>
<div class="abs lbl" style="left:1497px">使用 <span style="font-family:'DejaVu Sans',sans-serif;font-size:12px;font-weight:400">⌘</span> 进行标记和评级</div>
</body></html>
